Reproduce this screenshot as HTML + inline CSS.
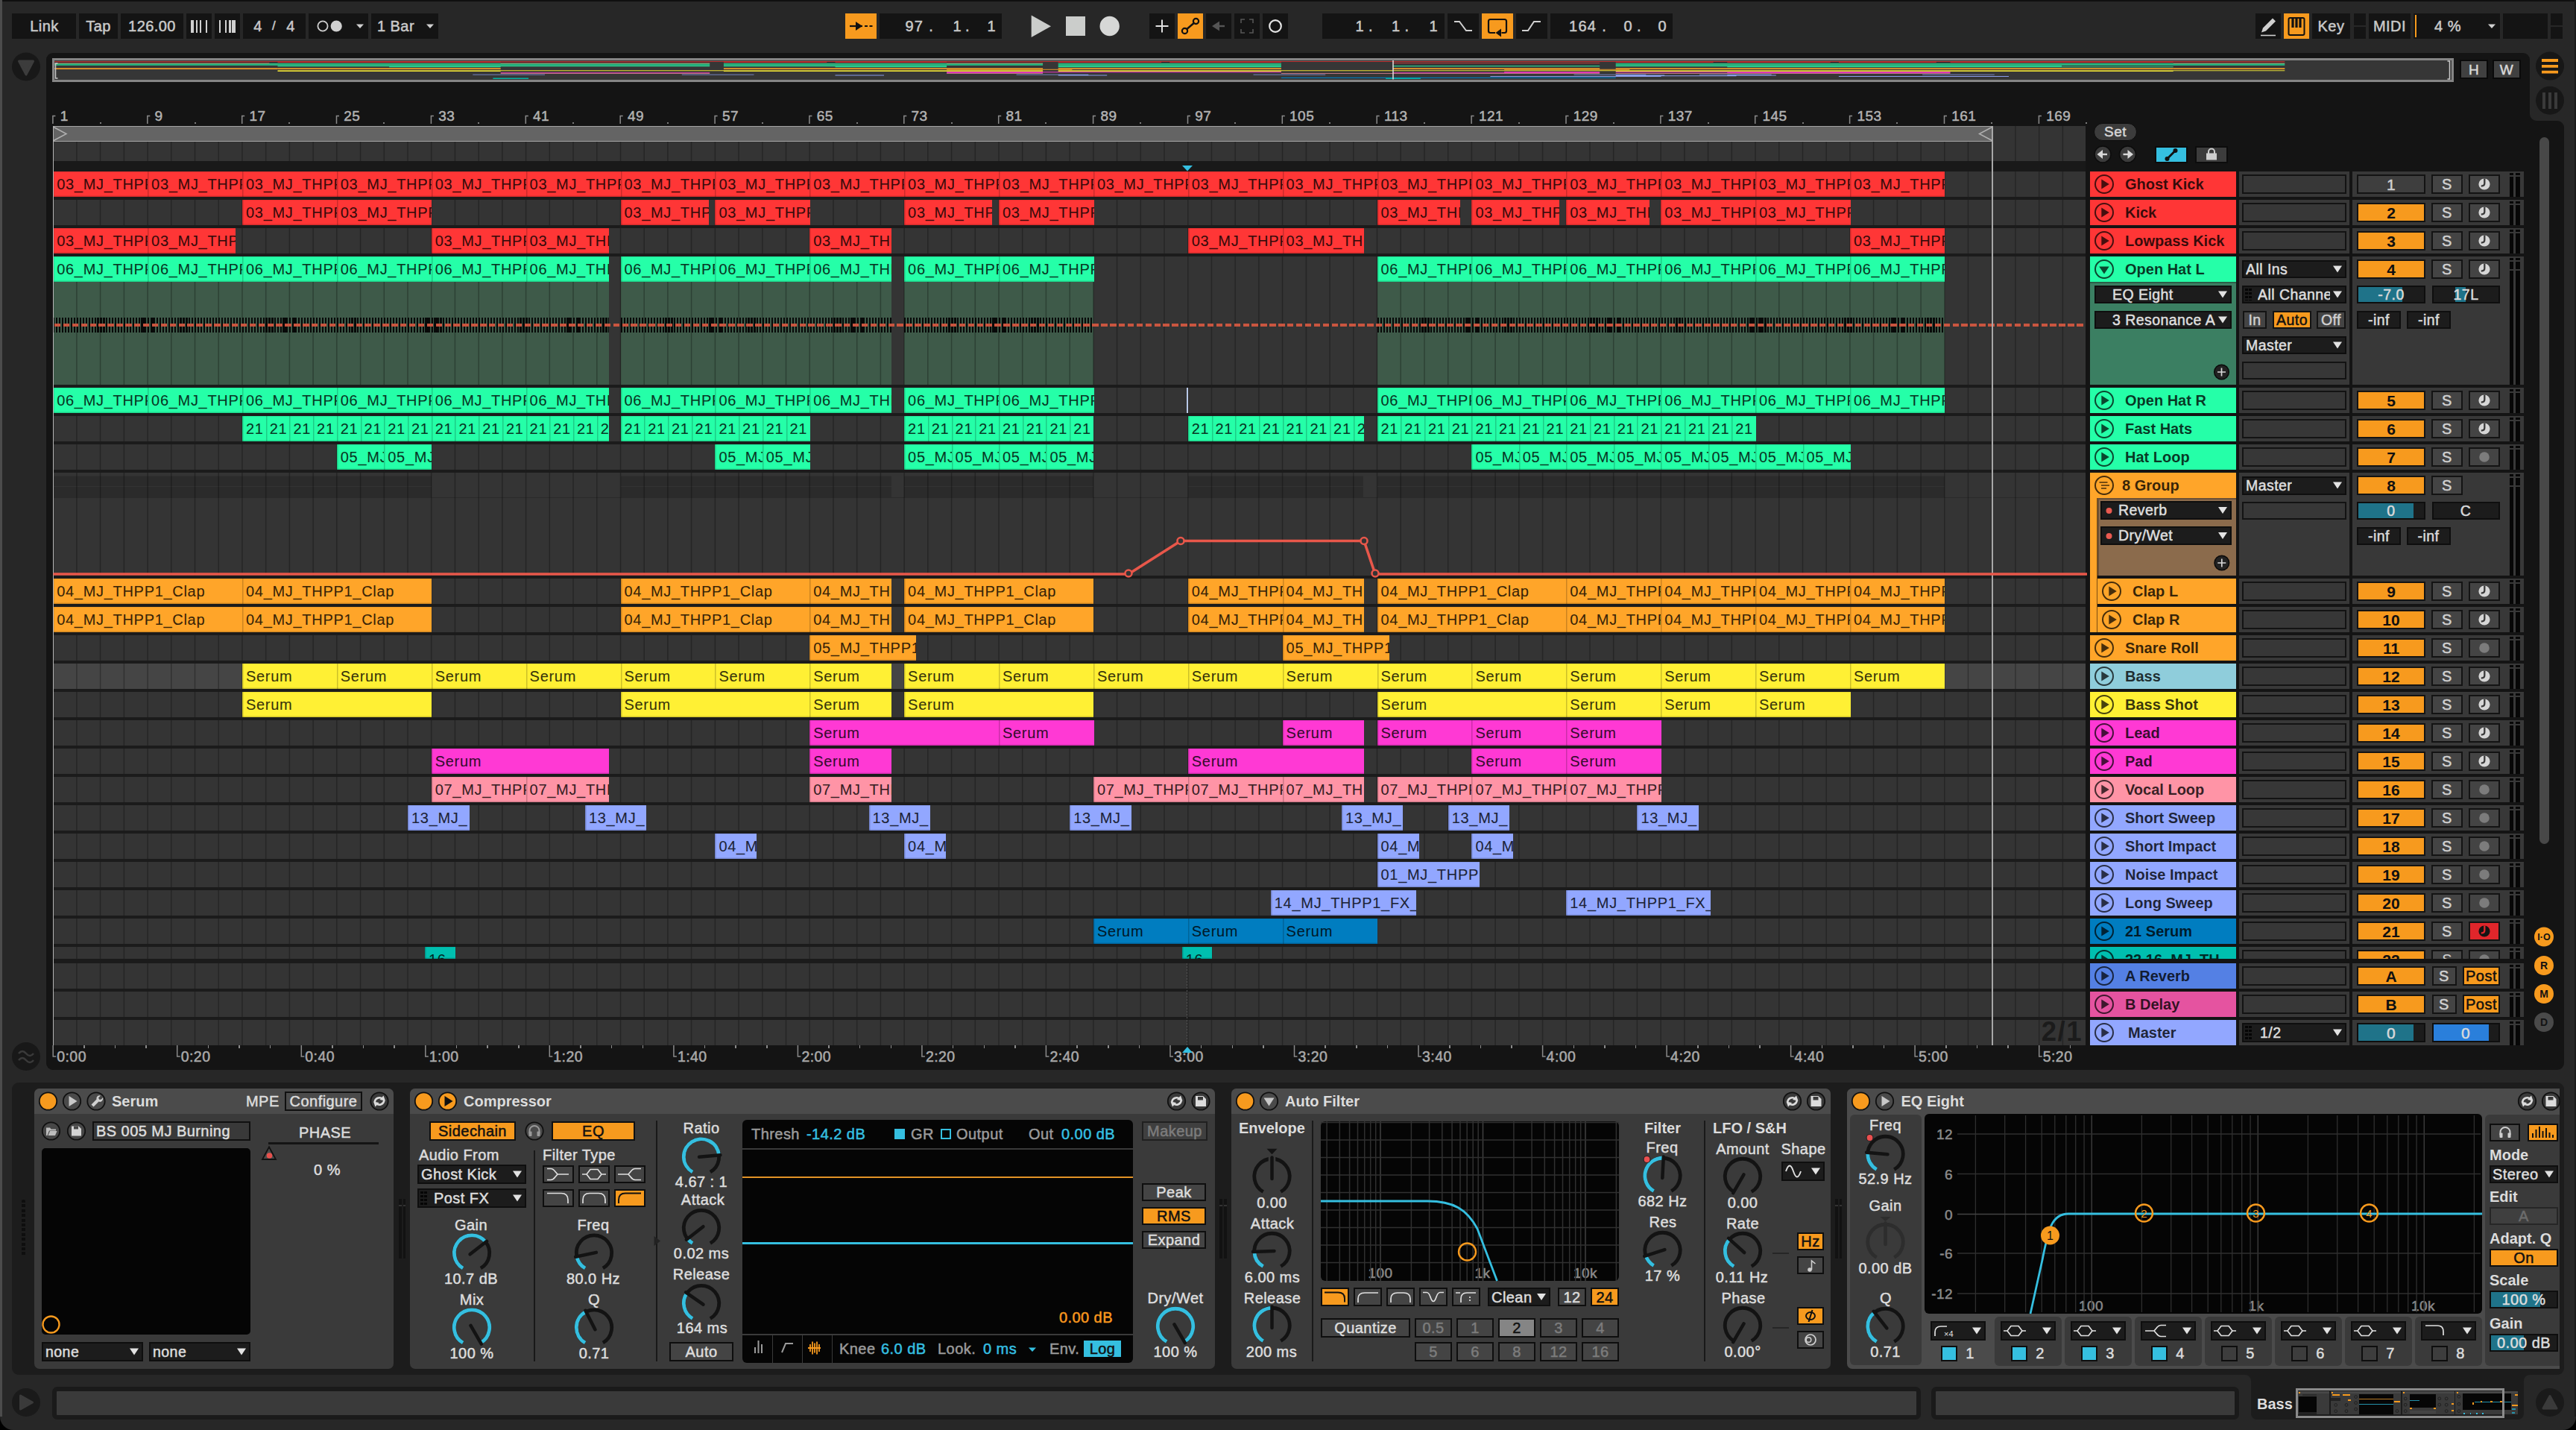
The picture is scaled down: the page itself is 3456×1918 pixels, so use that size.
<!DOCTYPE html><html><head><meta charset="utf-8"><title>Live</title><style>html,body{margin:0;padding:0;background:#000}html{overflow:hidden}body{width:3456px;height:1918px;background:#000;overflow:hidden;position:relative;font-family:"Liberation Sans",sans-serif}
body div{position:absolute}
.t{white-space:nowrap}
#w{left:0;top:0;width:3456px;height:1918px;overflow:hidden;background:#272727;border-radius:0 0 18px 18px;contain:strict}
.c{box-sizing:border-box;box-shadow:inset 1.500px 0 0 rgba(0,0,0,.2),inset 0 -1.500px 0 rgba(0,0,0,.16),inset 0 1px 0 rgba(0,0,0,.06);overflow:hidden;white-space:nowrap;font-size:20px;line-height:34.500px;padding-left:5px;color:rgba(0,0,0,.8);-webkit-text-stroke:.15px;letter-spacing:.7px}
.ov{position:absolute;left:0;top:0;pointer-events:none}
</style></head><body><div id="w"><div style="left:0px;top:0px;width:3456px;height:2px;background:#0f0f0f;"></div>
<div style="left:0px;top:0px;width:2.5px;height:1900px;background:#4c4c4c;"></div>
<div style="left:3454px;top:0px;width:2px;height:1900px;background:#1a1a1a;"></div>
<div style="left:16px;top:18px;width:85.5px;height:34px;background:#141414;"></div>
<div class="t" style="top:22.3px;font-size:20px;line-height:26px;color:#c9c9c9;-webkit-text-stroke:.5px;letter-spacing:.45px;left:-140.5px;width:400px;text-align:center;">Link</div>
<div style="left:106px;top:18px;width:52px;height:34px;background:#141414;"></div>
<div class="t" style="top:22.3px;font-size:20px;line-height:26px;color:#c9c9c9;-webkit-text-stroke:.5px;letter-spacing:.45px;left:-68px;width:400px;text-align:center;">Tap</div>
<div style="left:162px;top:18px;width:83.5px;height:34px;background:#141414;"></div>
<div class="t" style="top:22.3px;font-size:20px;line-height:26px;color:#c9c9c9;-webkit-text-stroke:.5px;letter-spacing:.45px;left:4px;width:400px;text-align:center;">126.00</div>
<div style="left:250px;top:18px;width:34px;height:34px;background:#141414;"></div>
<div style="left:288px;top:18px;width:33.5px;height:34px;background:#141414;"></div>
<div style="left:256.2px;top:26.5px;width:3.8px;height:17.5px;background:#d0d0d0;"></div>
<div style="left:262.5px;top:26.5px;width:2.5px;height:17.5px;background:#d0d0d0;"></div>
<div style="left:267.5px;top:26.5px;width:2.2px;height:17.5px;background:#d0d0d0;"></div>
<div style="left:275.7px;top:26.5px;width:2.3px;height:17.5px;background:#d0d0d0;"></div>
<div style="left:293.7px;top:26.5px;width:2.3px;height:17.5px;background:#d0d0d0;"></div>
<div style="left:302px;top:26.5px;width:2.2px;height:17.5px;background:#d0d0d0;"></div>
<div style="left:307px;top:26.5px;width:2.6px;height:17.5px;background:#d0d0d0;"></div>
<div style="left:311.2px;top:26.5px;width:5px;height:17.5px;background:#d0d0d0;"></div>
<div style="left:326px;top:18px;width:83.5px;height:34px;background:#141414;"></div>
<div class="t" style="top:22.3px;font-size:20px;line-height:26px;color:#c9c9c9;-webkit-text-stroke:.5px;letter-spacing:.45px;left:146px;width:400px;text-align:center;">4</div>
<div class="t" style="top:24.3px;font-size:17px;line-height:22px;color:#c9c9c9;-webkit-text-stroke:.5px;letter-spacing:.45px;left:167.5px;width:400px;text-align:center;">/</div>
<div class="t" style="top:22.3px;font-size:20px;line-height:26px;color:#c9c9c9;-webkit-text-stroke:.5px;letter-spacing:.45px;left:190px;width:400px;text-align:center;">4</div>
<div style="left:414px;top:18px;width:80px;height:34px;background:#141414;"></div>
<div style="left:498px;top:18px;width:90px;height:34px;background:#141414;"></div>
<div class="t" style="top:22.3px;font-size:20px;line-height:26px;color:#c9c9c9;-webkit-text-stroke:.5px;letter-spacing:.45px;left:506px;">1 Bar</div>
<div style="left:1133.5px;top:18px;width:42.5px;height:34px;background:#f79a1e;"></div>
<div style="left:1180px;top:18px;width:163.5px;height:34px;background:#141414;"></div>
<div class="t" style="top:22.3px;font-size:20px;line-height:26px;color:#c9c9c9;-webkit-text-stroke:.5px;letter-spacing:.45px;left:853px;width:400px;text-align:right;letter-spacing:1.300px;">97 .</div>
<div class="t" style="top:22.3px;font-size:20px;line-height:26px;color:#c9c9c9;-webkit-text-stroke:.5px;letter-spacing:.45px;left:901px;width:400px;text-align:right;word-spacing:-1px;">1 .</div>
<div class="t" style="top:22.3px;font-size:20px;line-height:26px;color:#c9c9c9;-webkit-text-stroke:.5px;letter-spacing:.45px;left:936px;width:400px;text-align:right;">1</div>
<div style="left:1542px;top:18px;width:34px;height:34px;background:#141414;"></div>
<div style="left:1580px;top:18px;width:34px;height:34px;background:#f79a1e;"></div>
<div style="left:1618px;top:18px;width:34px;height:34px;background:#141414;"></div>
<div style="left:1656px;top:18px;width:34px;height:34px;background:#141414;"></div>
<div style="left:1694px;top:18px;width:34px;height:34px;background:#141414;"></div>
<div style="left:1774px;top:18px;width:164px;height:34px;background:#141414;"></div>
<div class="t" style="top:22.3px;font-size:20px;line-height:26px;color:#c9c9c9;-webkit-text-stroke:.5px;letter-spacing:.45px;left:1442px;width:400px;text-align:right;">1 .</div>
<div class="t" style="top:22.3px;font-size:20px;line-height:26px;color:#c9c9c9;-webkit-text-stroke:.5px;letter-spacing:.45px;left:1490.5px;width:400px;text-align:right;">1 .</div>
<div class="t" style="top:22.3px;font-size:20px;line-height:26px;color:#c9c9c9;-webkit-text-stroke:.5px;letter-spacing:.45px;left:1529px;width:400px;text-align:right;">1</div>
<div style="left:1942px;top:18px;width:42px;height:34px;background:#141414;"></div>
<div style="left:1988px;top:18px;width:42px;height:34px;background:#f79a1e;"></div>
<div style="left:2034px;top:18px;width:42px;height:34px;background:#141414;"></div>
<div style="left:2080px;top:18px;width:164px;height:34px;background:#141414;"></div>
<div class="t" style="top:22.3px;font-size:20px;line-height:26px;color:#c9c9c9;-webkit-text-stroke:.5px;letter-spacing:.45px;left:1756px;width:400px;text-align:right;letter-spacing:1.300px;">164 .</div>
<div class="t" style="top:22.3px;font-size:20px;line-height:26px;color:#c9c9c9;-webkit-text-stroke:.5px;letter-spacing:.45px;left:1802px;width:400px;text-align:right;">0 .</div>
<div class="t" style="top:22.3px;font-size:20px;line-height:26px;color:#c9c9c9;-webkit-text-stroke:.5px;letter-spacing:.45px;left:1836px;width:400px;text-align:right;">0</div>
<div style="left:3026px;top:18px;width:34px;height:34px;background:#141414;"></div>
<div style="left:3064px;top:18px;width:34px;height:34px;background:#f79a1e;"></div>
<div style="left:3102px;top:18px;width:51px;height:34px;background:#141414;"></div>
<div class="t" style="top:22.3px;font-size:20px;line-height:26px;color:#c9c9c9;-webkit-text-stroke:.5px;letter-spacing:.45px;left:2927.5px;width:400px;text-align:center;">Key</div>
<div style="left:3158px;top:18px;width:16px;height:15.5px;background:#141414;"></div>
<div style="left:3158px;top:35.5px;width:16px;height:16.5px;background:#141414;"></div>
<div style="left:3178px;top:18px;width:56px;height:34px;background:#141414;"></div>
<div class="t" style="top:22.3px;font-size:20px;line-height:26px;color:#c9c9c9;-webkit-text-stroke:.5px;letter-spacing:.45px;left:3006px;width:400px;text-align:center;">MIDI</div>
<div style="left:3238px;top:18px;width:116px;height:34px;background:#141414;"></div>
<div style="left:3240.3px;top:20px;width:2.2px;height:30px;background:#f79a1e;"></div>
<div class="t" style="top:22.3px;font-size:20px;line-height:26px;color:#c9c9c9;-webkit-text-stroke:.5px;letter-spacing:.45px;left:3084px;width:400px;text-align:center;">4 %</div>
<div style="left:3358px;top:18px;width:60px;height:34px;background:#141414;"></div>
<div style="left:3422px;top:18px;width:16px;height:15.5px;background:#141414;"></div>
<div style="left:3422px;top:35.5px;width:16px;height:16.5px;background:#141414;"></div>
<div style="left:62px;top:70.5px;width:3332px;height:1364.5px;background:#141414;border-radius:9px 9px 0 9px;"></div>
<div style="left:3380px;top:162px;width:60px;height:1273px;background:#141414;border-radius:0 9px 9px 0;"></div>
<div style="left:3406.5px;top:184px;width:13.5px;height:948px;background:#484848;border-radius:7px;"></div>
<div style="left:70px;top:78px;width:3222px;height:31.5px;background:#363636;border:3px solid #858585;box-sizing:border-box;"></div>
<div style="left:3300px;top:80px;width:38px;height:26px;background:#404040;border:2px solid #0a0a0a;box-sizing:border-box;"></div>
<div class="t" style="top:80.8px;font-size:19px;line-height:25px;color:#d8d8d8;-webkit-text-stroke:.5px;letter-spacing:.45px;left:3119px;width:400px;text-align:center;">H</div>
<div style="left:3344px;top:80px;width:38px;height:26px;background:#404040;border:2px solid #0a0a0a;box-sizing:border-box;"></div>
<div class="t" style="top:80.8px;font-size:19px;line-height:25px;color:#d8d8d8;-webkit-text-stroke:.5px;letter-spacing:.45px;left:3163px;width:400px;text-align:center;">W</div>
<div class="t" style="top:142.8px;font-size:19px;line-height:25px;color:#b2b2b2;-webkit-text-stroke:.5px;letter-spacing:.45px;left:80.7px;">1</div>
<div style="left:133.6px;top:164px;width:2px;height:2px;background:#7a7a7a;"></div>
<div class="t" style="top:142.8px;font-size:19px;line-height:25px;color:#b2b2b2;-webkit-text-stroke:.5px;letter-spacing:.45px;left:207.6px;">9</div>
<div style="left:260.5px;top:164px;width:2px;height:2px;background:#7a7a7a;"></div>
<div class="t" style="top:142.8px;font-size:19px;line-height:25px;color:#b2b2b2;-webkit-text-stroke:.5px;letter-spacing:.45px;left:334.5px;">17</div>
<div style="left:387.4px;top:164px;width:2px;height:2px;background:#7a7a7a;"></div>
<div class="t" style="top:142.8px;font-size:19px;line-height:25px;color:#b2b2b2;-webkit-text-stroke:.5px;letter-spacing:.45px;left:461.3px;">25</div>
<div style="left:514.3px;top:164px;width:2px;height:2px;background:#7a7a7a;"></div>
<div class="t" style="top:142.8px;font-size:19px;line-height:25px;color:#b2b2b2;-webkit-text-stroke:.5px;letter-spacing:.45px;left:588.2px;">33</div>
<div style="left:641.2px;top:164px;width:2px;height:2px;background:#7a7a7a;"></div>
<div class="t" style="top:142.8px;font-size:19px;line-height:25px;color:#b2b2b2;-webkit-text-stroke:.5px;letter-spacing:.45px;left:715.1px;">41</div>
<div style="left:768px;top:164px;width:2px;height:2px;background:#7a7a7a;"></div>
<div class="t" style="top:142.8px;font-size:19px;line-height:25px;color:#b2b2b2;-webkit-text-stroke:.5px;letter-spacing:.45px;left:842px;">49</div>
<div style="left:894.9px;top:164px;width:2px;height:2px;background:#7a7a7a;"></div>
<div class="t" style="top:142.8px;font-size:19px;line-height:25px;color:#b2b2b2;-webkit-text-stroke:.5px;letter-spacing:.45px;left:968.9px;">57</div>
<div style="left:1021.8px;top:164px;width:2px;height:2px;background:#7a7a7a;"></div>
<div class="t" style="top:142.8px;font-size:19px;line-height:25px;color:#b2b2b2;-webkit-text-stroke:.5px;letter-spacing:.45px;left:1095.7px;">65</div>
<div style="left:1148.7px;top:164px;width:2px;height:2px;background:#7a7a7a;"></div>
<div class="t" style="top:142.8px;font-size:19px;line-height:25px;color:#b2b2b2;-webkit-text-stroke:.5px;letter-spacing:.45px;left:1222.6px;">73</div>
<div style="left:1275.6px;top:164px;width:2px;height:2px;background:#7a7a7a;"></div>
<div class="t" style="top:142.8px;font-size:19px;line-height:25px;color:#b2b2b2;-webkit-text-stroke:.5px;letter-spacing:.45px;left:1349.5px;">81</div>
<div style="left:1402.4px;top:164px;width:2px;height:2px;background:#7a7a7a;"></div>
<div class="t" style="top:142.8px;font-size:19px;line-height:25px;color:#b2b2b2;-webkit-text-stroke:.5px;letter-spacing:.45px;left:1476.4px;">89</div>
<div style="left:1529.3px;top:164px;width:2px;height:2px;background:#7a7a7a;"></div>
<div class="t" style="top:142.8px;font-size:19px;line-height:25px;color:#b2b2b2;-webkit-text-stroke:.5px;letter-spacing:.45px;left:1603.3px;">97</div>
<div style="left:1656.2px;top:164px;width:2px;height:2px;background:#7a7a7a;"></div>
<div class="t" style="top:142.8px;font-size:19px;line-height:25px;color:#b2b2b2;-webkit-text-stroke:.5px;letter-spacing:.45px;left:1730.1px;">105</div>
<div style="left:1783.1px;top:164px;width:2px;height:2px;background:#7a7a7a;"></div>
<div class="t" style="top:142.8px;font-size:19px;line-height:25px;color:#b2b2b2;-webkit-text-stroke:.5px;letter-spacing:.45px;left:1857px;">113</div>
<div style="left:1910px;top:164px;width:2px;height:2px;background:#7a7a7a;"></div>
<div class="t" style="top:142.8px;font-size:19px;line-height:25px;color:#b2b2b2;-webkit-text-stroke:.5px;letter-spacing:.45px;left:1983.9px;">121</div>
<div style="left:2036.8px;top:164px;width:2px;height:2px;background:#7a7a7a;"></div>
<div class="t" style="top:142.8px;font-size:19px;line-height:25px;color:#b2b2b2;-webkit-text-stroke:.5px;letter-spacing:.45px;left:2110.8px;">129</div>
<div style="left:2163.7px;top:164px;width:2px;height:2px;background:#7a7a7a;"></div>
<div class="t" style="top:142.8px;font-size:19px;line-height:25px;color:#b2b2b2;-webkit-text-stroke:.5px;letter-spacing:.45px;left:2237.7px;">137</div>
<div style="left:2290.6px;top:164px;width:2px;height:2px;background:#7a7a7a;"></div>
<div class="t" style="top:142.8px;font-size:19px;line-height:25px;color:#b2b2b2;-webkit-text-stroke:.5px;letter-spacing:.45px;left:2364.5px;">145</div>
<div style="left:2417.5px;top:164px;width:2px;height:2px;background:#7a7a7a;"></div>
<div class="t" style="top:142.8px;font-size:19px;line-height:25px;color:#b2b2b2;-webkit-text-stroke:.5px;letter-spacing:.45px;left:2491.4px;">153</div>
<div style="left:2544.4px;top:164px;width:2px;height:2px;background:#7a7a7a;"></div>
<div class="t" style="top:142.8px;font-size:19px;line-height:25px;color:#b2b2b2;-webkit-text-stroke:.5px;letter-spacing:.45px;left:2618.3px;">161</div>
<div style="left:2671.2px;top:164px;width:2px;height:2px;background:#7a7a7a;"></div>
<div class="t" style="top:142.8px;font-size:19px;line-height:25px;color:#b2b2b2;-webkit-text-stroke:.5px;letter-spacing:.45px;left:2745.2px;">169</div>
<div style="left:2798.1px;top:164px;width:2px;height:2px;background:#7a7a7a;"></div>
<div style="left:71px;top:169px;width:2602px;height:21px;background:#646464;border-top:1.500px solid #a4a4a4;border-bottom:1.500px solid #a4a4a4;box-sizing:border-box;"></div>
<div style="left:2673px;top:168.5px;width:125px;height:22px;background:#343434;"></div>
<div style="left:71.2px;top:190px;width:2726.8px;height:1212px;background:#1b1b1b;"></div>
<div style="left:71.2px;top:190px;width:2726.8px;height:26px;background:#343434;"></div>
<div style="left:71.2px;top:230px;width:2726.8px;height:34px;background:#343434;"></div>
<div style="left:71.2px;top:268px;width:2726.8px;height:34px;background:#343434;"></div>
<div style="left:71.2px;top:306px;width:2726.8px;height:34px;background:#343434;"></div>
<div style="left:71.2px;top:344px;width:2726.8px;height:172px;background:#343434;"></div>
<div style="left:71.2px;top:520px;width:2726.8px;height:34px;background:#343434;"></div>
<div style="left:71.2px;top:558px;width:2726.8px;height:34px;background:#343434;"></div>
<div style="left:71.2px;top:596px;width:2726.8px;height:34px;background:#343434;"></div>
<div style="left:71.2px;top:634px;width:2726.8px;height:138px;background:#343434;"></div>
<div style="left:71.2px;top:776px;width:2726.8px;height:34px;background:#343434;"></div>
<div style="left:71.2px;top:814px;width:2726.8px;height:34px;background:#343434;"></div>
<div style="left:71.2px;top:852px;width:2726.8px;height:34px;background:#343434;"></div>
<div style="left:71.2px;top:890px;width:2726.8px;height:34px;background:#343434;"></div>
<div style="left:71.2px;top:928px;width:2726.8px;height:34px;background:#343434;"></div>
<div style="left:71.2px;top:966px;width:2726.8px;height:34px;background:#343434;"></div>
<div style="left:71.2px;top:1004px;width:2726.8px;height:34px;background:#343434;"></div>
<div style="left:71.2px;top:1042px;width:2726.8px;height:34px;background:#343434;"></div>
<div style="left:71.2px;top:1080px;width:2726.8px;height:34px;background:#343434;"></div>
<div style="left:71.2px;top:1118px;width:2726.8px;height:34px;background:#343434;"></div>
<div style="left:71.2px;top:1156px;width:2726.8px;height:34px;background:#343434;"></div>
<div style="left:71.2px;top:1194px;width:2726.8px;height:34px;background:#343434;"></div>
<div style="left:71.2px;top:1232px;width:2726.8px;height:34px;background:#343434;"></div>
<div style="left:71.2px;top:1270px;width:2726.8px;height:16px;background:#343434;"></div>
<div style="left:71.2px;top:1292px;width:2726.8px;height:34px;background:#343434;"></div>
<div style="left:71.2px;top:1330px;width:2726.8px;height:34px;background:#343434;"></div>
<div style="left:71.2px;top:1368px;width:2726.8px;height:34px;background:#343434;"></div>
<div style="left:71.2px;top:216px;width:2726.8px;height:14px;background:#191919;"></div>
<div style="left:71.2px;top:890px;width:2726.8px;height:34px;background:#454545;"></div>
<div style="left:71.2px;top:666.5px;width:2726.8px;height:1.5px;background:#2a2a2a;"></div>
<div style="left:71.2px;top:638px;width:507.5px;height:28.5px;background:#2b2b2b;border-top:1px solid #303030;"></div>
<div style="left:71.2px;top:652px;width:507.5px;height:1px;background:#333;"></div>
<div style="left:832.5px;top:638px;width:363.2px;height:28.5px;background:#2b2b2b;border-top:1px solid #303030;"></div>
<div style="left:832.5px;top:652px;width:363.2px;height:1px;background:#333;"></div>
<div style="left:1213.1px;top:638px;width:253.8px;height:28.5px;background:#2b2b2b;border-top:1px solid #303030;"></div>
<div style="left:1213.1px;top:652px;width:253.8px;height:1px;background:#333;"></div>
<div style="left:1593.8px;top:638px;width:235.5px;height:28.5px;background:#2b2b2b;border-top:1px solid #303030;"></div>
<div style="left:1593.8px;top:652px;width:235.5px;height:1px;background:#333;"></div>
<div style="left:1847.5px;top:638px;width:761.3px;height:28.5px;background:#2b2b2b;border-top:1px solid #303030;"></div>
<div style="left:1847.5px;top:652px;width:761.3px;height:1px;background:#333;"></div>
<div style="left:71.2px;top:378px;width:745.4px;height:138px;background:#3e5a49;"></div>
<div style="left:71.2px;top:426px;width:745.4px;height:19.5px;background:repeating-linear-gradient(90deg,#080a09 0,#080a09 2.100px,transparent 2.100px,transparent 3.965px),repeating-linear-gradient(90deg,transparent 0,transparent 118px,#080a09 118px,#080a09 124px,transparent 124px,transparent 131px,#080a09 131px,#080a09 135px,transparent 135px,transparent 190.320px);"></div>
<div style="left:832.5px;top:378px;width:363.2px;height:138px;background:#3e5a49;"></div>
<div style="left:832.5px;top:426px;width:363.2px;height:19.5px;background:repeating-linear-gradient(90deg,#080a09 0,#080a09 2.100px,transparent 2.100px,transparent 3.965px),repeating-linear-gradient(90deg,transparent 0,transparent 118px,#080a09 118px,#080a09 124px,transparent 124px,transparent 131px,#080a09 131px,#080a09 135px,transparent 135px,transparent 190.320px);"></div>
<div style="left:1213.1px;top:378px;width:253.8px;height:138px;background:#3e5a49;"></div>
<div style="left:1213.1px;top:426px;width:253.8px;height:19.5px;background:repeating-linear-gradient(90deg,#080a09 0,#080a09 2.100px,transparent 2.100px,transparent 3.965px),repeating-linear-gradient(90deg,transparent 0,transparent 118px,#080a09 118px,#080a09 124px,transparent 124px,transparent 131px,#080a09 131px,#080a09 135px,transparent 135px,transparent 190.320px);"></div>
<div style="left:1847.5px;top:378px;width:761.3px;height:138px;background:#3e5a49;"></div>
<div style="left:1847.5px;top:426px;width:761.3px;height:19.5px;background:repeating-linear-gradient(90deg,#080a09 0,#080a09 2.100px,transparent 2.100px,transparent 3.965px),repeating-linear-gradient(90deg,transparent 0,transparent 118px,#080a09 118px,#080a09 124px,transparent 124px,transparent 131px,#080a09 131px,#080a09 135px,transparent 135px,transparent 190.320px);"></div>
<svg class="ov" width="3456" height="1918"><path d="M102.9 190V1402M134.6 190V1402M166.4 190V1402M198.1 190V1402M229.8 190V1402M261.5 190V1402M293.2 190V1402M325 190V1402M356.7 190V1402M388.4 190V1402M420.1 190V1402M451.8 190V1402M483.6 190V1402M515.3 190V1402M547 190V1402M578.7 190V1402M610.4 190V1402M642.2 190V1402M673.9 190V1402M705.6 190V1402M737.3 190V1402M769 190V1402M800.8 190V1402M832.5 190V1402M864.2 190V1402M895.9 190V1402M927.6 190V1402M959.4 190V1402M991.1 190V1402M1022.8 190V1402M1054.5 190V1402M1086.2 190V1402M1118 190V1402M1149.7 190V1402M1181.4 190V1402M1213.1 190V1402M1244.8 190V1402M1276.6 190V1402M1308.3 190V1402M1340 190V1402M1371.7 190V1402M1403.4 190V1402M1435.2 190V1402M1466.9 190V1402M1498.6 190V1402M1530.3 190V1402M1562 190V1402M1593.8 190V1402M1625.5 190V1402M1657.2 190V1402M1688.9 190V1402M1720.6 190V1402M1752.4 190V1402M1784.1 190V1402M1815.8 190V1402M1847.5 190V1402M1879.2 190V1402M1911 190V1402M1942.7 190V1402M1974.4 190V1402M2006.1 190V1402M2037.8 190V1402M2069.6 190V1402M2101.3 190V1402M2133 190V1402M2164.7 190V1402M2196.4 190V1402M2228.2 190V1402M2259.9 190V1402M2291.6 190V1402M2323.3 190V1402M2355 190V1402M2386.8 190V1402M2418.5 190V1402M2450.2 190V1402M2481.9 190V1402M2513.6 190V1402M2545.4 190V1402M2577.1 190V1402M2608.8 190V1402M2640.5 190V1402M2672.2 190V1402M2704 169V1402M2735.7 169V1402M2767.4 169V1402" stroke="rgba(0,0,0,0.280)" stroke-width="1.500" fill="none"/></svg>
<div style="left:71.2px;top:216px;width:2726.8px;height:14px;background:#191919;"></div>
<div style="left:71.2px;top:264px;width:2726.8px;height:4px;background:#1b1b1b;"></div>
<div style="left:71.2px;top:302px;width:2726.8px;height:4px;background:#1b1b1b;"></div>
<div style="left:71.2px;top:340px;width:2726.8px;height:4px;background:#1b1b1b;"></div>
<div style="left:71.2px;top:516px;width:2726.8px;height:4px;background:#1b1b1b;"></div>
<div style="left:71.2px;top:554px;width:2726.8px;height:4px;background:#1b1b1b;"></div>
<div style="left:71.2px;top:592px;width:2726.8px;height:4px;background:#1b1b1b;"></div>
<div style="left:71.2px;top:630px;width:2726.8px;height:4px;background:#1b1b1b;"></div>
<div style="left:71.2px;top:772px;width:2726.8px;height:4px;background:#1b1b1b;"></div>
<div style="left:71.2px;top:810px;width:2726.8px;height:4px;background:#1b1b1b;"></div>
<div style="left:71.2px;top:848px;width:2726.8px;height:4px;background:#1b1b1b;"></div>
<div style="left:71.2px;top:886px;width:2726.8px;height:4px;background:#1b1b1b;"></div>
<div style="left:71.2px;top:924px;width:2726.8px;height:4px;background:#1b1b1b;"></div>
<div style="left:71.2px;top:962px;width:2726.8px;height:4px;background:#1b1b1b;"></div>
<div style="left:71.2px;top:1000px;width:2726.8px;height:4px;background:#1b1b1b;"></div>
<div style="left:71.2px;top:1038px;width:2726.8px;height:4px;background:#1b1b1b;"></div>
<div style="left:71.2px;top:1076px;width:2726.8px;height:4px;background:#1b1b1b;"></div>
<div style="left:71.2px;top:1114px;width:2726.8px;height:4px;background:#1b1b1b;"></div>
<div style="left:71.2px;top:1152px;width:2726.8px;height:4px;background:#1b1b1b;"></div>
<div style="left:71.2px;top:1190px;width:2726.8px;height:4px;background:#1b1b1b;"></div>
<div style="left:71.2px;top:1228px;width:2726.8px;height:4px;background:#1b1b1b;"></div>
<div style="left:71.2px;top:1266px;width:2726.8px;height:4px;background:#1b1b1b;"></div>
<div style="left:71.2px;top:1286px;width:2726.8px;height:6px;background:#1b1b1b;"></div>
<div style="left:71.2px;top:1326px;width:2726.8px;height:4px;background:#1b1b1b;"></div>
<div style="left:71.2px;top:1364px;width:2726.8px;height:4px;background:#1b1b1b;"></div>
<div style="left:71.2px;top:434px;width:2726.8px;height:3.6px;background:repeating-linear-gradient(90deg,transparent 0,transparent 2px,#c9553f 2px,#c9553f 10.400px,transparent 10.400px,transparent 11.900px);"></div>
<div class="c" style="left:71.2px;top:230px;width:127.5px;height:34px;background:#ff3636">03_MJ_THPP1_Kick</div>
<div class="c" style="left:198.1px;top:230px;width:127.5px;height:34px;background:#ff3636">03_MJ_THPP1_Kick</div>
<div class="c" style="left:325px;top:230px;width:127.5px;height:34px;background:#ff3636">03_MJ_THPP1_Kick</div>
<div class="c" style="left:451.8px;top:230px;width:127.5px;height:34px;background:#ff3636">03_MJ_THPP1_Kick</div>
<div class="c" style="left:578.7px;top:230px;width:127.5px;height:34px;background:#ff3636">03_MJ_THPP1_Kick</div>
<div class="c" style="left:705.6px;top:230px;width:127.5px;height:34px;background:#ff3636">03_MJ_THPP1_Kick</div>
<div class="c" style="left:832.5px;top:230px;width:127.5px;height:34px;background:#ff3636">03_MJ_THPP1_Kick</div>
<div class="c" style="left:959.4px;top:230px;width:127.5px;height:34px;background:#ff3636">03_MJ_THPP1_Kick</div>
<div class="c" style="left:1086.2px;top:230px;width:127.5px;height:34px;background:#ff3636">03_MJ_THPP1_Kick</div>
<div class="c" style="left:1213.1px;top:230px;width:127.5px;height:34px;background:#ff3636">03_MJ_THPP1_Kick</div>
<div class="c" style="left:1340px;top:230px;width:127.5px;height:34px;background:#ff3636">03_MJ_THPP1_Kick</div>
<div class="c" style="left:1466.9px;top:230px;width:127.5px;height:34px;background:#ff3636">03_MJ_THPP1_Kick</div>
<div class="c" style="left:1593.8px;top:230px;width:127.5px;height:34px;background:#ff3636">03_MJ_THPP1_Kick</div>
<div class="c" style="left:1720.6px;top:230px;width:127.5px;height:34px;background:#ff3636">03_MJ_THPP1_Kick</div>
<div class="c" style="left:1847.5px;top:230px;width:127.5px;height:34px;background:#ff3636">03_MJ_THPP1_Kick</div>
<div class="c" style="left:1974.4px;top:230px;width:127.5px;height:34px;background:#ff3636">03_MJ_THPP1_Kick</div>
<div class="c" style="left:2101.3px;top:230px;width:127.5px;height:34px;background:#ff3636">03_MJ_THPP1_Kick</div>
<div class="c" style="left:2228.2px;top:230px;width:127.5px;height:34px;background:#ff3636">03_MJ_THPP1_Kick</div>
<div class="c" style="left:2355px;top:230px;width:127.5px;height:34px;background:#ff3636">03_MJ_THPP1_Kick</div>
<div class="c" style="left:2481.9px;top:230px;width:127.5px;height:34px;background:#ff3636">03_MJ_THPP1_Kick</div>
<div class="c" style="left:325px;top:268px;width:127.5px;height:34px;background:#ff3636">03_MJ_THPP1_Kick</div>
<div class="c" style="left:451.8px;top:268px;width:127.5px;height:34px;background:#ff3636">03_MJ_THPP1_Kick</div>
<div class="c" style="left:832.5px;top:268px;width:118px;height:34px;background:#ff3636">03_MJ_THPP1_Kick</div>
<div class="c" style="left:959.4px;top:268px;width:127.5px;height:34px;background:#ff3636">03_MJ_THPP1_Kick</div>
<div class="c" style="left:1213.1px;top:268px;width:118px;height:34px;background:#ff3636">03_MJ_THPP1_Kick</div>
<div class="c" style="left:1340px;top:268px;width:127.5px;height:34px;background:#ff3636">03_MJ_THPP1_Kick</div>
<div class="c" style="left:1847.5px;top:268px;width:111.6px;height:34px;background:#ff3636">03_MJ_THPP1_Kick</div>
<div class="c" style="left:1974.4px;top:268px;width:118px;height:34px;background:#ff3636">03_MJ_THPP1_Kick</div>
<div class="c" style="left:2101.3px;top:268px;width:111.6px;height:34px;background:#ff3636">03_MJ_THPP1_Kick</div>
<div class="c" style="left:2228.2px;top:268px;width:127.5px;height:34px;background:#ff3636">03_MJ_THPP1_Kick</div>
<div class="c" style="left:2355px;top:268px;width:127.5px;height:34px;background:#ff3636">03_MJ_THPP1_Kick</div>
<div class="c" style="left:71.2px;top:306px;width:127.5px;height:34px;background:#ff3636">03_MJ_THPP1_Kick</div>
<div class="c" style="left:198.1px;top:306px;width:118px;height:34px;background:#ff3636">03_MJ_THPP1_Kick</div>
<div class="c" style="left:578.7px;top:306px;width:127.5px;height:34px;background:#ff3636">03_MJ_THPP1_Kick</div>
<div class="c" style="left:705.6px;top:306px;width:111.6px;height:34px;background:#ff3636">03_MJ_THPP1_Kick</div>
<div class="c" style="left:1086.2px;top:306px;width:110px;height:34px;background:#ff3636">03_MJ_THPP1_Kick</div>
<div class="c" style="left:1593.8px;top:306px;width:127.5px;height:34px;background:#ff3636">03_MJ_THPP1_Kick</div>
<div class="c" style="left:1720.6px;top:306px;width:109.2px;height:34px;background:#ff3636">03_MJ_THPP1_Kick</div>
<div class="c" style="left:2481.9px;top:306px;width:127.5px;height:34px;background:#ff3636">03_MJ_THPP1_Kick</div>
<div class="c" style="left:71.2px;top:344px;width:127.5px;height:34px;background:#25ffa8">06_MJ_THPP1_Hat</div>
<div class="c" style="left:71.2px;top:520px;width:127.5px;height:34px;background:#25ffa8">06_MJ_THPP1_Hat</div>
<div class="c" style="left:198.1px;top:344px;width:127.5px;height:34px;background:#25ffa8">06_MJ_THPP1_Hat</div>
<div class="c" style="left:198.1px;top:520px;width:127.5px;height:34px;background:#25ffa8">06_MJ_THPP1_Hat</div>
<div class="c" style="left:325px;top:344px;width:127.5px;height:34px;background:#25ffa8">06_MJ_THPP1_Hat</div>
<div class="c" style="left:325px;top:520px;width:127.5px;height:34px;background:#25ffa8">06_MJ_THPP1_Hat</div>
<div class="c" style="left:451.8px;top:344px;width:127.5px;height:34px;background:#25ffa8">06_MJ_THPP1_Hat</div>
<div class="c" style="left:451.8px;top:520px;width:127.5px;height:34px;background:#25ffa8">06_MJ_THPP1_Hat</div>
<div class="c" style="left:578.7px;top:344px;width:127.5px;height:34px;background:#25ffa8">06_MJ_THPP1_Hat</div>
<div class="c" style="left:578.7px;top:520px;width:127.5px;height:34px;background:#25ffa8">06_MJ_THPP1_Hat</div>
<div class="c" style="left:705.6px;top:344px;width:111.6px;height:34px;background:#25ffa8">06_MJ_THPP1_Hat</div>
<div class="c" style="left:705.6px;top:520px;width:111.6px;height:34px;background:#25ffa8">06_MJ_THPP1_Hat</div>
<div class="c" style="left:832.5px;top:344px;width:127.5px;height:34px;background:#25ffa8">06_MJ_THPP1_Hat</div>
<div class="c" style="left:832.5px;top:520px;width:127.5px;height:34px;background:#25ffa8">06_MJ_THPP1_Hat</div>
<div class="c" style="left:959.4px;top:344px;width:127.5px;height:34px;background:#25ffa8">06_MJ_THPP1_Hat</div>
<div class="c" style="left:959.4px;top:520px;width:127.5px;height:34px;background:#25ffa8">06_MJ_THPP1_Hat</div>
<div class="c" style="left:1086.2px;top:344px;width:110px;height:34px;background:#25ffa8">06_MJ_THPP1_Hat</div>
<div class="c" style="left:1086.2px;top:520px;width:110px;height:34px;background:#25ffa8">06_MJ_THPP1_Hat</div>
<div class="c" style="left:1213.1px;top:344px;width:127.5px;height:34px;background:#25ffa8">06_MJ_THPP1_Hat</div>
<div class="c" style="left:1213.1px;top:520px;width:127.5px;height:34px;background:#25ffa8">06_MJ_THPP1_Hat</div>
<div class="c" style="left:1340px;top:344px;width:127.5px;height:34px;background:#25ffa8">06_MJ_THPP1_Hat</div>
<div class="c" style="left:1340px;top:520px;width:127.5px;height:34px;background:#25ffa8">06_MJ_THPP1_Hat</div>
<div class="c" style="left:1847.5px;top:344px;width:127.5px;height:34px;background:#25ffa8">06_MJ_THPP1_Hat</div>
<div class="c" style="left:1847.5px;top:520px;width:127.5px;height:34px;background:#25ffa8">06_MJ_THPP1_Hat</div>
<div class="c" style="left:1974.4px;top:344px;width:127.5px;height:34px;background:#25ffa8">06_MJ_THPP1_Hat</div>
<div class="c" style="left:1974.4px;top:520px;width:127.5px;height:34px;background:#25ffa8">06_MJ_THPP1_Hat</div>
<div class="c" style="left:2101.3px;top:344px;width:127.5px;height:34px;background:#25ffa8">06_MJ_THPP1_Hat</div>
<div class="c" style="left:2101.3px;top:520px;width:127.5px;height:34px;background:#25ffa8">06_MJ_THPP1_Hat</div>
<div class="c" style="left:2228.2px;top:344px;width:127.5px;height:34px;background:#25ffa8">06_MJ_THPP1_Hat</div>
<div class="c" style="left:2228.2px;top:520px;width:127.5px;height:34px;background:#25ffa8">06_MJ_THPP1_Hat</div>
<div class="c" style="left:2355px;top:344px;width:127.5px;height:34px;background:#25ffa8">06_MJ_THPP1_Hat</div>
<div class="c" style="left:2355px;top:520px;width:127.5px;height:34px;background:#25ffa8">06_MJ_THPP1_Hat</div>
<div class="c" style="left:2481.9px;top:344px;width:127.5px;height:34px;background:#25ffa8">06_MJ_THPP1_Hat</div>
<div class="c" style="left:2481.9px;top:520px;width:127.5px;height:34px;background:#25ffa8">06_MJ_THPP1_Hat</div>
<div class="c" style="left:325px;top:558px;width:32.3px;height:34px;background:#25ffa8">21</div>
<div class="c" style="left:356.7px;top:558px;width:32.3px;height:34px;background:#25ffa8">21</div>
<div class="c" style="left:388.4px;top:558px;width:32.3px;height:34px;background:#25ffa8">21</div>
<div class="c" style="left:420.1px;top:558px;width:32.3px;height:34px;background:#25ffa8">21</div>
<div class="c" style="left:451.8px;top:558px;width:32.3px;height:34px;background:#25ffa8">21</div>
<div class="c" style="left:483.6px;top:558px;width:32.3px;height:34px;background:#25ffa8">21</div>
<div class="c" style="left:515.3px;top:558px;width:32.3px;height:34px;background:#25ffa8">21</div>
<div class="c" style="left:547px;top:558px;width:32.3px;height:34px;background:#25ffa8">21</div>
<div class="c" style="left:578.7px;top:558px;width:32.3px;height:34px;background:#25ffa8">21</div>
<div class="c" style="left:610.4px;top:558px;width:32.3px;height:34px;background:#25ffa8">21</div>
<div class="c" style="left:642.2px;top:558px;width:32.3px;height:34px;background:#25ffa8">21</div>
<div class="c" style="left:673.9px;top:558px;width:32.3px;height:34px;background:#25ffa8">21</div>
<div class="c" style="left:705.6px;top:558px;width:32.3px;height:34px;background:#25ffa8">21</div>
<div class="c" style="left:737.3px;top:558px;width:32.3px;height:34px;background:#25ffa8">21</div>
<div class="c" style="left:769px;top:558px;width:32.3px;height:34px;background:#25ffa8">21</div>
<div class="c" style="left:800.8px;top:558px;width:16.5px;height:34px;background:#25ffa8">21</div>
<div class="c" style="left:832.5px;top:558px;width:32.3px;height:34px;background:#25ffa8">21</div>
<div class="c" style="left:864.2px;top:558px;width:32.3px;height:34px;background:#25ffa8">21</div>
<div class="c" style="left:895.9px;top:558px;width:32.3px;height:34px;background:#25ffa8">21</div>
<div class="c" style="left:927.6px;top:558px;width:32.3px;height:34px;background:#25ffa8">21</div>
<div class="c" style="left:959.4px;top:558px;width:32.3px;height:34px;background:#25ffa8">21</div>
<div class="c" style="left:991.1px;top:558px;width:32.3px;height:34px;background:#25ffa8">21</div>
<div class="c" style="left:1022.8px;top:558px;width:32.3px;height:34px;background:#25ffa8">21</div>
<div class="c" style="left:1054.5px;top:558px;width:32.3px;height:34px;background:#25ffa8">21</div>
<div class="c" style="left:1213.1px;top:558px;width:32.3px;height:34px;background:#25ffa8">21</div>
<div class="c" style="left:1244.8px;top:558px;width:32.3px;height:34px;background:#25ffa8">21</div>
<div class="c" style="left:1276.6px;top:558px;width:32.3px;height:34px;background:#25ffa8">21</div>
<div class="c" style="left:1308.3px;top:558px;width:32.3px;height:34px;background:#25ffa8">21</div>
<div class="c" style="left:1340px;top:558px;width:32.3px;height:34px;background:#25ffa8">21</div>
<div class="c" style="left:1371.7px;top:558px;width:32.3px;height:34px;background:#25ffa8">21</div>
<div class="c" style="left:1403.4px;top:558px;width:32.3px;height:34px;background:#25ffa8">21</div>
<div class="c" style="left:1435.2px;top:558px;width:32.3px;height:34px;background:#25ffa8">21</div>
<div class="c" style="left:1593.8px;top:558px;width:32.3px;height:34px;background:#25ffa8">21</div>
<div class="c" style="left:1625.5px;top:558px;width:32.3px;height:34px;background:#25ffa8">21</div>
<div class="c" style="left:1657.2px;top:558px;width:32.3px;height:34px;background:#25ffa8">21</div>
<div class="c" style="left:1688.9px;top:558px;width:32.3px;height:34px;background:#25ffa8">21</div>
<div class="c" style="left:1720.6px;top:558px;width:32.3px;height:34px;background:#25ffa8">21</div>
<div class="c" style="left:1752.4px;top:558px;width:32.3px;height:34px;background:#25ffa8">21</div>
<div class="c" style="left:1784.1px;top:558px;width:32.3px;height:34px;background:#25ffa8">21</div>
<div class="c" style="left:1815.8px;top:558px;width:14.1px;height:34px;background:#25ffa8">21</div>
<div class="c" style="left:1847.5px;top:558px;width:32.3px;height:34px;background:#25ffa8">21</div>
<div class="c" style="left:1879.2px;top:558px;width:32.3px;height:34px;background:#25ffa8">21</div>
<div class="c" style="left:1911px;top:558px;width:32.3px;height:34px;background:#25ffa8">21</div>
<div class="c" style="left:1942.7px;top:558px;width:32.3px;height:34px;background:#25ffa8">21</div>
<div class="c" style="left:1974.4px;top:558px;width:32.3px;height:34px;background:#25ffa8">21</div>
<div class="c" style="left:2006.1px;top:558px;width:32.3px;height:34px;background:#25ffa8">21</div>
<div class="c" style="left:2037.8px;top:558px;width:32.3px;height:34px;background:#25ffa8">21</div>
<div class="c" style="left:2069.6px;top:558px;width:32.3px;height:34px;background:#25ffa8">21</div>
<div class="c" style="left:2101.3px;top:558px;width:32.3px;height:34px;background:#25ffa8">21</div>
<div class="c" style="left:2133px;top:558px;width:32.3px;height:34px;background:#25ffa8">21</div>
<div class="c" style="left:2164.7px;top:558px;width:32.3px;height:34px;background:#25ffa8">21</div>
<div class="c" style="left:2196.4px;top:558px;width:32.3px;height:34px;background:#25ffa8">21</div>
<div class="c" style="left:2228.2px;top:558px;width:32.3px;height:34px;background:#25ffa8">21</div>
<div class="c" style="left:2259.9px;top:558px;width:32.3px;height:34px;background:#25ffa8">21</div>
<div class="c" style="left:2291.6px;top:558px;width:32.3px;height:34px;background:#25ffa8">21</div>
<div class="c" style="left:2323.3px;top:558px;width:32.3px;height:34px;background:#25ffa8">21</div>
<div class="c" style="left:451.8px;top:596px;width:64px;height:34px;background:#25ffa8">05_MJ_THPP1</div>
<div class="c" style="left:515.3px;top:596px;width:64px;height:34px;background:#25ffa8">05_MJ_THPP1</div>
<div class="c" style="left:959.4px;top:596px;width:64px;height:34px;background:#25ffa8">05_MJ_THPP1</div>
<div class="c" style="left:1022.8px;top:596px;width:64px;height:34px;background:#25ffa8">05_MJ_THPP1</div>
<div class="c" style="left:1213.1px;top:596px;width:64px;height:34px;background:#25ffa8">05_MJ_THPP1</div>
<div class="c" style="left:1276.6px;top:596px;width:64px;height:34px;background:#25ffa8">05_MJ_THPP1</div>
<div class="c" style="left:1340px;top:596px;width:64px;height:34px;background:#25ffa8">05_MJ_THPP1</div>
<div class="c" style="left:1403.4px;top:596px;width:64px;height:34px;background:#25ffa8">05_MJ_THPP1</div>
<div class="c" style="left:1974.4px;top:596px;width:64px;height:34px;background:#25ffa8">05_MJ_THPP1</div>
<div class="c" style="left:2037.8px;top:596px;width:64px;height:34px;background:#25ffa8">05_MJ_THPP1</div>
<div class="c" style="left:2101.3px;top:596px;width:64px;height:34px;background:#25ffa8">05_MJ_THPP1</div>
<div class="c" style="left:2164.7px;top:596px;width:64px;height:34px;background:#25ffa8">05_MJ_THPP1</div>
<div class="c" style="left:2228.2px;top:596px;width:64px;height:34px;background:#25ffa8">05_MJ_THPP1</div>
<div class="c" style="left:2291.6px;top:596px;width:64px;height:34px;background:#25ffa8">05_MJ_THPP1</div>
<div class="c" style="left:2355px;top:596px;width:64px;height:34px;background:#25ffa8">05_MJ_THPP1</div>
<div class="c" style="left:2418.5px;top:596px;width:64px;height:34px;background:#25ffa8">05_MJ_THPP1</div>
<div class="c" style="left:71.2px;top:776px;width:254.4px;height:34px;background:#ffa529">04_MJ_THPP1_Clap</div>
<div class="c" style="left:71.2px;top:814px;width:254.4px;height:34px;background:#ffa529">04_MJ_THPP1_Clap</div>
<div class="c" style="left:325px;top:776px;width:254.4px;height:34px;background:#ffa529">04_MJ_THPP1_Clap</div>
<div class="c" style="left:325px;top:814px;width:254.4px;height:34px;background:#ffa529">04_MJ_THPP1_Clap</div>
<div class="c" style="left:832.5px;top:776px;width:254.4px;height:34px;background:#ffa529">04_MJ_THPP1_Clap</div>
<div class="c" style="left:832.5px;top:814px;width:254.4px;height:34px;background:#ffa529">04_MJ_THPP1_Clap</div>
<div class="c" style="left:1086.2px;top:776px;width:110px;height:34px;background:#ffa529">04_MJ_THPP1_Clap</div>
<div class="c" style="left:1086.2px;top:814px;width:110px;height:34px;background:#ffa529">04_MJ_THPP1_Clap</div>
<div class="c" style="left:1213.1px;top:776px;width:254.4px;height:34px;background:#ffa529">04_MJ_THPP1_Clap</div>
<div class="c" style="left:1213.1px;top:814px;width:254.4px;height:34px;background:#ffa529">04_MJ_THPP1_Clap</div>
<div class="c" style="left:1593.8px;top:776px;width:127.5px;height:34px;background:#ffa529">04_MJ_THPP1_Clap</div>
<div class="c" style="left:1593.8px;top:814px;width:127.5px;height:34px;background:#ffa529">04_MJ_THPP1_Clap</div>
<div class="c" style="left:1720.6px;top:776px;width:109.2px;height:34px;background:#ffa529">04_MJ_THPP1_Clap</div>
<div class="c" style="left:1720.6px;top:814px;width:109.2px;height:34px;background:#ffa529">04_MJ_THPP1_Clap</div>
<div class="c" style="left:1847.5px;top:776px;width:254.4px;height:34px;background:#ffa529">04_MJ_THPP1_Clap</div>
<div class="c" style="left:1847.5px;top:814px;width:254.4px;height:34px;background:#ffa529">04_MJ_THPP1_Clap</div>
<div class="c" style="left:2101.3px;top:776px;width:127.5px;height:34px;background:#ffa529">04_MJ_THPP1_Clap</div>
<div class="c" style="left:2101.3px;top:814px;width:127.5px;height:34px;background:#ffa529">04_MJ_THPP1_Clap</div>
<div class="c" style="left:2228.2px;top:776px;width:127.5px;height:34px;background:#ffa529">04_MJ_THPP1_Clap</div>
<div class="c" style="left:2228.2px;top:814px;width:127.5px;height:34px;background:#ffa529">04_MJ_THPP1_Clap</div>
<div class="c" style="left:2355px;top:776px;width:127.5px;height:34px;background:#ffa529">04_MJ_THPP1_Clap</div>
<div class="c" style="left:2355px;top:814px;width:127.5px;height:34px;background:#ffa529">04_MJ_THPP1_Clap</div>
<div class="c" style="left:2481.9px;top:776px;width:127.5px;height:34px;background:#ffa529">04_MJ_THPP1_Clap</div>
<div class="c" style="left:2481.9px;top:814px;width:127.5px;height:34px;background:#ffa529">04_MJ_THPP1_Clap</div>
<div class="c" style="left:1086.2px;top:852px;width:143.3px;height:34px;background:#ffa529">05_MJ_THPP1_</div>
<div class="c" style="left:1720.6px;top:852px;width:143.3px;height:34px;background:#ffa529">05_MJ_THPP1_</div>
<div class="c" style="left:325px;top:890px;width:127.5px;height:34px;background:#fff034">Serum</div>
<div class="c" style="left:451.8px;top:890px;width:127.5px;height:34px;background:#fff034">Serum</div>
<div class="c" style="left:578.7px;top:890px;width:127.5px;height:34px;background:#fff034">Serum</div>
<div class="c" style="left:705.6px;top:890px;width:127.5px;height:34px;background:#fff034">Serum</div>
<div class="c" style="left:832.5px;top:890px;width:127.5px;height:34px;background:#fff034">Serum</div>
<div class="c" style="left:959.4px;top:890px;width:127.5px;height:34px;background:#fff034">Serum</div>
<div class="c" style="left:1086.2px;top:890px;width:110px;height:34px;background:#fff034">Serum</div>
<div class="c" style="left:1213.1px;top:890px;width:127.5px;height:34px;background:#fff034">Serum</div>
<div class="c" style="left:1340px;top:890px;width:127.5px;height:34px;background:#fff034">Serum</div>
<div class="c" style="left:1466.9px;top:890px;width:127.5px;height:34px;background:#fff034">Serum</div>
<div class="c" style="left:1593.8px;top:890px;width:127.5px;height:34px;background:#fff034">Serum</div>
<div class="c" style="left:1720.6px;top:890px;width:127.5px;height:34px;background:#fff034">Serum</div>
<div class="c" style="left:1847.5px;top:890px;width:127.5px;height:34px;background:#fff034">Serum</div>
<div class="c" style="left:1974.4px;top:890px;width:127.5px;height:34px;background:#fff034">Serum</div>
<div class="c" style="left:2101.3px;top:890px;width:127.5px;height:34px;background:#fff034">Serum</div>
<div class="c" style="left:2228.2px;top:890px;width:127.5px;height:34px;background:#fff034">Serum</div>
<div class="c" style="left:2355px;top:890px;width:127.5px;height:34px;background:#fff034">Serum</div>
<div class="c" style="left:2481.9px;top:890px;width:127.5px;height:34px;background:#fff034">Serum</div>
<div class="c" style="left:325px;top:928px;width:254.4px;height:34px;background:#fff034">Serum</div>
<div class="c" style="left:832.5px;top:928px;width:254.4px;height:34px;background:#fff034">Serum</div>
<div class="c" style="left:1086.2px;top:928px;width:110px;height:34px;background:#fff034">Serum</div>
<div class="c" style="left:1213.1px;top:928px;width:254.4px;height:34px;background:#fff034">Serum</div>
<div class="c" style="left:1847.5px;top:928px;width:254.4px;height:34px;background:#fff034">Serum</div>
<div class="c" style="left:2101.3px;top:928px;width:127.5px;height:34px;background:#fff034">Serum</div>
<div class="c" style="left:2228.2px;top:928px;width:127.5px;height:34px;background:#fff034">Serum</div>
<div class="c" style="left:2355px;top:928px;width:127.5px;height:34px;background:#fff034">Serum</div>
<div class="c" style="left:1086.2px;top:966px;width:254.4px;height:34px;background:#ff39d4">Serum</div>
<div class="c" style="left:1340px;top:966px;width:127.5px;height:34px;background:#ff39d4">Serum</div>
<div class="c" style="left:1720.6px;top:966px;width:109.2px;height:34px;background:#ff39d4">Serum</div>
<div class="c" style="left:1847.5px;top:966px;width:127.5px;height:34px;background:#ff39d4">Serum</div>
<div class="c" style="left:1974.4px;top:966px;width:127.5px;height:34px;background:#ff39d4">Serum</div>
<div class="c" style="left:2101.3px;top:966px;width:127.5px;height:34px;background:#ff39d4">Serum</div>
<div class="c" style="left:578.7px;top:1004px;width:238.5px;height:34px;background:#ff39d4">Serum</div>
<div class="c" style="left:1086.2px;top:1004px;width:110px;height:34px;background:#ff39d4">Serum</div>
<div class="c" style="left:1593.8px;top:1004px;width:236.1px;height:34px;background:#ff39d4">Serum</div>
<div class="c" style="left:1974.4px;top:1004px;width:127.5px;height:34px;background:#ff39d4">Serum</div>
<div class="c" style="left:2101.3px;top:1004px;width:127.5px;height:34px;background:#ff39d4">Serum</div>
<div class="c" style="left:578.7px;top:1042px;width:127.5px;height:34px;background:#ff94a6">07_MJ_THPP1_Vox</div>
<div class="c" style="left:705.6px;top:1042px;width:111.6px;height:34px;background:#ff94a6">07_MJ_THPP1_Vox</div>
<div class="c" style="left:1086.2px;top:1042px;width:110px;height:34px;background:#ff94a6">07_MJ_THPP1_Vox</div>
<div class="c" style="left:1466.9px;top:1042px;width:127.5px;height:34px;background:#ff94a6">07_MJ_THPP1_Vox</div>
<div class="c" style="left:1593.8px;top:1042px;width:127.5px;height:34px;background:#ff94a6">07_MJ_THPP1_Vox</div>
<div class="c" style="left:1720.6px;top:1042px;width:109.2px;height:34px;background:#ff94a6">07_MJ_THPP1_Vox</div>
<div class="c" style="left:1847.5px;top:1042px;width:127.5px;height:34px;background:#ff94a6">07_MJ_THPP1_Vox</div>
<div class="c" style="left:1974.4px;top:1042px;width:127.5px;height:34px;background:#ff94a6">07_MJ_THPP1_Vox</div>
<div class="c" style="left:2101.3px;top:1042px;width:127.5px;height:34px;background:#ff94a6">07_MJ_THPP1_Vox</div>
<div class="c" style="left:547px;top:1080px;width:82.6px;height:34px;background:#92a7ff">13_MJ_</div>
<div class="c" style="left:784.9px;top:1080px;width:82.6px;height:34px;background:#92a7ff">13_MJ_</div>
<div class="c" style="left:1165.5px;top:1080px;width:82.6px;height:34px;background:#92a7ff">13_MJ_</div>
<div class="c" style="left:1435.2px;top:1080px;width:82.6px;height:34px;background:#92a7ff">13_MJ_</div>
<div class="c" style="left:1799.9px;top:1080px;width:82.6px;height:34px;background:#92a7ff">13_MJ_</div>
<div class="c" style="left:1942.7px;top:1080px;width:82.6px;height:34px;background:#92a7ff">13_MJ_</div>
<div class="c" style="left:2196.4px;top:1080px;width:82.6px;height:34px;background:#92a7ff">13_MJ_</div>
<div class="c" style="left:959.4px;top:1118px;width:56.1px;height:34px;background:#92a7ff">04_MJ</div>
<div class="c" style="left:1213.1px;top:1118px;width:56.1px;height:34px;background:#92a7ff">04_MJ</div>
<div class="c" style="left:1847.5px;top:1118px;width:56.1px;height:34px;background:#92a7ff">04_MJ</div>
<div class="c" style="left:1974.4px;top:1118px;width:56.1px;height:34px;background:#92a7ff">04_MJ</div>
<div class="c" style="left:1847.5px;top:1156px;width:137.8px;height:34px;background:#92a7ff">01_MJ_THPP1</div>
<div class="c" style="left:1704.8px;top:1194px;width:194.9px;height:34px;background:#92a7ff">14_MJ_THPP1_FX_</div>
<div class="c" style="left:2101.3px;top:1194px;width:194.1px;height:34px;background:#92a7ff">14_MJ_THPP1_FX_</div>
<div class="c" style="left:1466.9px;top:1232px;width:127.5px;height:34px;background:#007dc0">Serum</div>
<div class="c" style="left:1593.8px;top:1232px;width:127.5px;height:34px;background:#007dc0">Serum</div>
<div class="c" style="left:1720.6px;top:1232px;width:127.5px;height:34px;background:#007dc0">Serum</div>
<div class="c" style="left:570px;top:1270px;width:41px;height:16px;background:#00bfaf">16</div>
<div class="c" style="left:1585.8px;top:1270px;width:40.3px;height:16px;background:#00bfaf">16</div>
<div style="left:70.5px;top:169px;width:1.5px;height:1233px;background:#b4b4b4;"></div>
<div style="left:2672.2px;top:169px;width:1.5px;height:1233px;background:#a8a8a8;"></div>
<div style="left:1592.3px;top:520px;width:1.8px;height:34px;background:#b9c9e8;"></div>
<div style="left:1592.3px;top:1292px;width:1.2px;height:110px;background:repeating-linear-gradient(180deg,#555 0,#555 2px,transparent 2px,transparent 4px);"></div>
<div class="t" style="top:1359.8px;font-size:36.5px;line-height:47px;color:#1b1b1b;font-weight:700;left:2394px;width:400px;text-align:right;letter-spacing:1.500px;">2/1</div>
<div style="left:62.5px;top:1402px;width:2745px;height:33px;background:#141414;border-radius:0 0 0 9px;"></div>
<div class="t" style="top:1405px;font-size:19.5px;line-height:25px;color:#a9a9a9;-webkit-text-stroke:.5px;letter-spacing:.45px;left:76.2px;">0:00</div>
<div style="left:112.1px;top:1402px;width:1.5px;height:3.5px;background:#8a8a8a;"></div>
<div style="left:153.8px;top:1402px;width:1.5px;height:3.5px;background:#8a8a8a;"></div>
<div style="left:195.4px;top:1402px;width:1.5px;height:3.5px;background:#8a8a8a;"></div>
<div class="t" style="top:1405px;font-size:19.5px;line-height:25px;color:#a9a9a9;-webkit-text-stroke:.5px;letter-spacing:.45px;left:242.7px;">0:20</div>
<div style="left:278.7px;top:1402px;width:1.5px;height:3.5px;background:#8a8a8a;"></div>
<div style="left:320.3px;top:1402px;width:1.5px;height:3.5px;background:#8a8a8a;"></div>
<div style="left:361.9px;top:1402px;width:1.5px;height:3.5px;background:#8a8a8a;"></div>
<div class="t" style="top:1405px;font-size:19.5px;line-height:25px;color:#a9a9a9;-webkit-text-stroke:.5px;letter-spacing:.45px;left:409.3px;">0:40</div>
<div style="left:445.2px;top:1402px;width:1.5px;height:3.5px;background:#8a8a8a;"></div>
<div style="left:486.8px;top:1402px;width:1.5px;height:3.5px;background:#8a8a8a;"></div>
<div style="left:528.4px;top:1402px;width:1.5px;height:3.5px;background:#8a8a8a;"></div>
<div class="t" style="top:1405px;font-size:19.5px;line-height:25px;color:#a9a9a9;-webkit-text-stroke:.5px;letter-spacing:.45px;left:575.8px;">1:00</div>
<div style="left:611.7px;top:1402px;width:1.5px;height:3.5px;background:#8a8a8a;"></div>
<div style="left:653.4px;top:1402px;width:1.5px;height:3.5px;background:#8a8a8a;"></div>
<div style="left:695px;top:1402px;width:1.5px;height:3.5px;background:#8a8a8a;"></div>
<div class="t" style="top:1405px;font-size:19.5px;line-height:25px;color:#a9a9a9;-webkit-text-stroke:.5px;letter-spacing:.45px;left:742.3px;">1:20</div>
<div style="left:778.2px;top:1402px;width:1.5px;height:3.5px;background:#8a8a8a;"></div>
<div style="left:819.9px;top:1402px;width:1.5px;height:3.5px;background:#8a8a8a;"></div>
<div style="left:861.5px;top:1402px;width:1.5px;height:3.5px;background:#8a8a8a;"></div>
<div class="t" style="top:1405px;font-size:19.5px;line-height:25px;color:#a9a9a9;-webkit-text-stroke:.5px;letter-spacing:.45px;left:908.9px;">1:40</div>
<div style="left:944.8px;top:1402px;width:1.5px;height:3.5px;background:#8a8a8a;"></div>
<div style="left:986.4px;top:1402px;width:1.5px;height:3.5px;background:#8a8a8a;"></div>
<div style="left:1028px;top:1402px;width:1.5px;height:3.5px;background:#8a8a8a;"></div>
<div class="t" style="top:1405px;font-size:19.5px;line-height:25px;color:#a9a9a9;-webkit-text-stroke:.5px;letter-spacing:.45px;left:1075.4px;">2:00</div>
<div style="left:1111.3px;top:1402px;width:1.5px;height:3.5px;background:#8a8a8a;"></div>
<div style="left:1152.9px;top:1402px;width:1.5px;height:3.5px;background:#8a8a8a;"></div>
<div style="left:1194.6px;top:1402px;width:1.5px;height:3.5px;background:#8a8a8a;"></div>
<div class="t" style="top:1405px;font-size:19.5px;line-height:25px;color:#a9a9a9;-webkit-text-stroke:.5px;letter-spacing:.45px;left:1241.9px;">2:20</div>
<div style="left:1277.8px;top:1402px;width:1.5px;height:3.5px;background:#8a8a8a;"></div>
<div style="left:1319.5px;top:1402px;width:1.5px;height:3.5px;background:#8a8a8a;"></div>
<div style="left:1361.1px;top:1402px;width:1.5px;height:3.5px;background:#8a8a8a;"></div>
<div class="t" style="top:1405px;font-size:19.5px;line-height:25px;color:#a9a9a9;-webkit-text-stroke:.5px;letter-spacing:.45px;left:1408.4px;">2:40</div>
<div style="left:1444.4px;top:1402px;width:1.5px;height:3.5px;background:#8a8a8a;"></div>
<div style="left:1486px;top:1402px;width:1.5px;height:3.5px;background:#8a8a8a;"></div>
<div style="left:1527.6px;top:1402px;width:1.5px;height:3.5px;background:#8a8a8a;"></div>
<div class="t" style="top:1405px;font-size:19.5px;line-height:25px;color:#a9a9a9;-webkit-text-stroke:.5px;letter-spacing:.45px;left:1575px;">3:00</div>
<div style="left:1610.9px;top:1402px;width:1.5px;height:3.5px;background:#8a8a8a;"></div>
<div style="left:1652.5px;top:1402px;width:1.5px;height:3.5px;background:#8a8a8a;"></div>
<div style="left:1694.2px;top:1402px;width:1.5px;height:3.5px;background:#8a8a8a;"></div>
<div class="t" style="top:1405px;font-size:19.5px;line-height:25px;color:#a9a9a9;-webkit-text-stroke:.5px;letter-spacing:.45px;left:1741.5px;">3:20</div>
<div style="left:1777.4px;top:1402px;width:1.5px;height:3.5px;background:#8a8a8a;"></div>
<div style="left:1819.1px;top:1402px;width:1.5px;height:3.5px;background:#8a8a8a;"></div>
<div style="left:1860.7px;top:1402px;width:1.5px;height:3.5px;background:#8a8a8a;"></div>
<div class="t" style="top:1405px;font-size:19.5px;line-height:25px;color:#a9a9a9;-webkit-text-stroke:.5px;letter-spacing:.45px;left:1908px;">3:40</div>
<div style="left:1944px;top:1402px;width:1.5px;height:3.5px;background:#8a8a8a;"></div>
<div style="left:1985.6px;top:1402px;width:1.5px;height:3.5px;background:#8a8a8a;"></div>
<div style="left:2027.2px;top:1402px;width:1.5px;height:3.5px;background:#8a8a8a;"></div>
<div class="t" style="top:1405px;font-size:19.5px;line-height:25px;color:#a9a9a9;-webkit-text-stroke:.5px;letter-spacing:.45px;left:2074.6px;">4:00</div>
<div style="left:2110.5px;top:1402px;width:1.5px;height:3.5px;background:#8a8a8a;"></div>
<div style="left:2152.1px;top:1402px;width:1.5px;height:3.5px;background:#8a8a8a;"></div>
<div style="left:2193.8px;top:1402px;width:1.5px;height:3.5px;background:#8a8a8a;"></div>
<div class="t" style="top:1405px;font-size:19.5px;line-height:25px;color:#a9a9a9;-webkit-text-stroke:.5px;letter-spacing:.45px;left:2241.1px;">4:20</div>
<div style="left:2277px;top:1402px;width:1.5px;height:3.5px;background:#8a8a8a;"></div>
<div style="left:2318.7px;top:1402px;width:1.5px;height:3.5px;background:#8a8a8a;"></div>
<div style="left:2360.3px;top:1402px;width:1.5px;height:3.5px;background:#8a8a8a;"></div>
<div class="t" style="top:1405px;font-size:19.5px;line-height:25px;color:#a9a9a9;-webkit-text-stroke:.5px;letter-spacing:.45px;left:2407.6px;">4:40</div>
<div style="left:2443.6px;top:1402px;width:1.5px;height:3.5px;background:#8a8a8a;"></div>
<div style="left:2485.2px;top:1402px;width:1.5px;height:3.5px;background:#8a8a8a;"></div>
<div style="left:2526.8px;top:1402px;width:1.5px;height:3.5px;background:#8a8a8a;"></div>
<div class="t" style="top:1405px;font-size:19.5px;line-height:25px;color:#a9a9a9;-webkit-text-stroke:.5px;letter-spacing:.45px;left:2574.1px;">5:00</div>
<div style="left:2610.1px;top:1402px;width:1.5px;height:3.5px;background:#8a8a8a;"></div>
<div style="left:2651.7px;top:1402px;width:1.5px;height:3.5px;background:#8a8a8a;"></div>
<div style="left:2693.3px;top:1402px;width:1.5px;height:3.5px;background:#8a8a8a;"></div>
<div class="t" style="top:1405px;font-size:19.5px;line-height:25px;color:#a9a9a9;-webkit-text-stroke:.5px;letter-spacing:.45px;left:2740.7px;">5:20</div>
<div style="left:2776.6px;top:1402px;width:1.5px;height:3.5px;background:#8a8a8a;"></div>
<div style="left:2809px;top:165px;width:58px;height:23.5px;background:#3c3c3c;border-radius:12px;border:1.500px solid #0c0c0c;box-sizing:border-box;"></div>
<div class="t" style="top:164.3px;font-size:19px;line-height:25px;color:#d6d6d6;-webkit-text-stroke:.5px;letter-spacing:.45px;left:2638px;width:400px;text-align:center;">Set</div>
<div style="left:2891px;top:196px;width:44px;height:23px;background:#35bfe0;border:2px solid #0c0c0c;box-sizing:border-box;"></div>
<div style="left:2945px;top:196px;width:44px;height:23px;background:#3c3c3c;border:2px solid #0c0c0c;box-sizing:border-box;"></div>
<div style="left:2804px;top:230px;width:196px;height:34px;background:#ff3636;"></div>
<div class="t" style="top:234.3px;font-size:20px;line-height:26px;color:rgba(0,0,0,0.780);font-weight:700;left:2851px;">Ghost Kick</div>
<div style="left:3004px;top:230px;width:148px;height:34px;background:#383838;"></div>
<div style="left:3156px;top:230px;width:230px;height:34px;background:#383838;"></div>
<div style="left:3008px;top:234px;width:140px;height:26px;background:#373737;border:2px solid #131313;box-sizing:border-box;"></div>
<div style="left:3162px;top:234px;width:92px;height:26px;background:#3e3e3e;border:2px solid #131313;box-sizing:border-box;"></div>
<div class="t" style="top:233.8px;font-size:21px;line-height:27px;color:#cfcfcf;-webkit-text-stroke:.5px;letter-spacing:.45px;left:3008px;width:400px;text-align:center;">1</div>
<div style="left:3262px;top:234px;width:42px;height:26px;background:#444;border:2px solid #131313;box-sizing:border-box;"></div>
<div class="t" style="top:234.3px;font-size:20px;line-height:26px;color:#d0d0d0;-webkit-text-stroke:.5px;letter-spacing:.45px;left:3083px;width:400px;text-align:center;">S</div>
<div style="left:3312px;top:234px;width:42px;height:26px;background:#444;border:2px solid #131313;box-sizing:border-box;"></div>
<div style="left:3366.5px;top:232px;width:5.7px;height:32px;background:#070707;"></div>
<div style="left:3374.5px;top:232px;width:6px;height:32px;background:#070707;"></div>
<div style="left:3366.5px;top:235px;width:5.7px;height:1.5px;background:#383838;"></div>
<div style="left:3374.5px;top:235px;width:6px;height:1.5px;background:#383838;"></div>
<div style="left:2804px;top:268px;width:196px;height:34px;background:#ff3636;"></div>
<div class="t" style="top:272.3px;font-size:20px;line-height:26px;color:rgba(0,0,0,0.780);font-weight:700;left:2851px;">Kick</div>
<div style="left:3004px;top:268px;width:148px;height:34px;background:#383838;"></div>
<div style="left:3156px;top:268px;width:230px;height:34px;background:#383838;"></div>
<div style="left:3008px;top:272px;width:140px;height:26px;background:#373737;border:2px solid #131313;box-sizing:border-box;"></div>
<div style="left:3162px;top:272px;width:92px;height:26px;background:#f79a1e;border:2px solid #131313;box-sizing:border-box;"></div>
<div class="t" style="top:271.8px;font-size:21px;line-height:27px;color:#101010;font-weight:700;left:3008px;width:400px;text-align:center;">2</div>
<div style="left:3262px;top:272px;width:42px;height:26px;background:#444;border:2px solid #131313;box-sizing:border-box;"></div>
<div class="t" style="top:272.3px;font-size:20px;line-height:26px;color:#d0d0d0;-webkit-text-stroke:.5px;letter-spacing:.45px;left:3083px;width:400px;text-align:center;">S</div>
<div style="left:3312px;top:272px;width:42px;height:26px;background:#444;border:2px solid #131313;box-sizing:border-box;"></div>
<div style="left:3366.5px;top:270px;width:5.7px;height:32px;background:#070707;"></div>
<div style="left:3374.5px;top:270px;width:6px;height:32px;background:#070707;"></div>
<div style="left:3366.5px;top:273px;width:5.7px;height:1.5px;background:#383838;"></div>
<div style="left:3374.5px;top:273px;width:6px;height:1.5px;background:#383838;"></div>
<div style="left:2804px;top:306px;width:196px;height:34px;background:#ff3636;"></div>
<div class="t" style="top:310.3px;font-size:20px;line-height:26px;color:rgba(0,0,0,0.780);font-weight:700;left:2851px;">Lowpass Kick</div>
<div style="left:3004px;top:306px;width:148px;height:34px;background:#383838;"></div>
<div style="left:3156px;top:306px;width:230px;height:34px;background:#383838;"></div>
<div style="left:3008px;top:310px;width:140px;height:26px;background:#373737;border:2px solid #131313;box-sizing:border-box;"></div>
<div style="left:3162px;top:310px;width:92px;height:26px;background:#f79a1e;border:2px solid #131313;box-sizing:border-box;"></div>
<div class="t" style="top:309.8px;font-size:21px;line-height:27px;color:#101010;font-weight:700;left:3008px;width:400px;text-align:center;">3</div>
<div style="left:3262px;top:310px;width:42px;height:26px;background:#444;border:2px solid #131313;box-sizing:border-box;"></div>
<div class="t" style="top:310.3px;font-size:20px;line-height:26px;color:#d0d0d0;-webkit-text-stroke:.5px;letter-spacing:.45px;left:3083px;width:400px;text-align:center;">S</div>
<div style="left:3312px;top:310px;width:42px;height:26px;background:#444;border:2px solid #131313;box-sizing:border-box;"></div>
<div style="left:3366.5px;top:308px;width:5.7px;height:32px;background:#070707;"></div>
<div style="left:3374.5px;top:308px;width:6px;height:32px;background:#070707;"></div>
<div style="left:3366.5px;top:311px;width:5.7px;height:1.5px;background:#383838;"></div>
<div style="left:3374.5px;top:311px;width:6px;height:1.5px;background:#383838;"></div>
<div style="left:2804px;top:344px;width:196px;height:34px;background:#25ffa8;"></div>
<div class="t" style="top:348.3px;font-size:20px;line-height:26px;color:rgba(0,0,0,0.780);font-weight:700;left:2851px;">Open Hat L</div>
<div style="left:3004px;top:344px;width:148px;height:172px;background:#383838;"></div>
<div style="left:3156px;top:344px;width:230px;height:172px;background:#383838;"></div>
<div style="left:3162px;top:348px;width:92px;height:26px;background:#f79a1e;border:2px solid #131313;box-sizing:border-box;"></div>
<div class="t" style="top:347.8px;font-size:21px;line-height:27px;color:#101010;font-weight:700;left:3008px;width:400px;text-align:center;">4</div>
<div style="left:3262px;top:348px;width:42px;height:26px;background:#444;border:2px solid #131313;box-sizing:border-box;"></div>
<div class="t" style="top:348.3px;font-size:20px;line-height:26px;color:#d0d0d0;-webkit-text-stroke:.5px;letter-spacing:.45px;left:3083px;width:400px;text-align:center;">S</div>
<div style="left:3312px;top:348px;width:42px;height:26px;background:#444;border:2px solid #131313;box-sizing:border-box;"></div>
<div style="left:3366.5px;top:346px;width:5.7px;height:170px;background:#070707;"></div>
<div style="left:3374.5px;top:346px;width:6px;height:170px;background:#070707;"></div>
<div style="left:3366.5px;top:349px;width:5.7px;height:1.5px;background:#383838;"></div>
<div style="left:3374.5px;top:349px;width:6px;height:1.5px;background:#383838;"></div>
<div style="left:3366.5px;top:361px;width:5.7px;height:1.5px;background:#383838;"></div>
<div style="left:3374.5px;top:361px;width:6px;height:1.5px;background:#383838;"></div>
<div style="left:2804px;top:520px;width:196px;height:34px;background:#25ffa8;"></div>
<div class="t" style="top:524.3px;font-size:20px;line-height:26px;color:rgba(0,0,0,0.780);font-weight:700;left:2851px;">Open Hat R</div>
<div style="left:3004px;top:520px;width:148px;height:34px;background:#383838;"></div>
<div style="left:3156px;top:520px;width:230px;height:34px;background:#383838;"></div>
<div style="left:3008px;top:524px;width:140px;height:26px;background:#373737;border:2px solid #131313;box-sizing:border-box;"></div>
<div style="left:3162px;top:524px;width:92px;height:26px;background:#f79a1e;border:2px solid #131313;box-sizing:border-box;"></div>
<div class="t" style="top:523.8px;font-size:21px;line-height:27px;color:#101010;font-weight:700;left:3008px;width:400px;text-align:center;">5</div>
<div style="left:3262px;top:524px;width:42px;height:26px;background:#444;border:2px solid #131313;box-sizing:border-box;"></div>
<div class="t" style="top:524.3px;font-size:20px;line-height:26px;color:#d0d0d0;-webkit-text-stroke:.5px;letter-spacing:.45px;left:3083px;width:400px;text-align:center;">S</div>
<div style="left:3312px;top:524px;width:42px;height:26px;background:#444;border:2px solid #131313;box-sizing:border-box;"></div>
<div style="left:3366.5px;top:522px;width:5.7px;height:32px;background:#070707;"></div>
<div style="left:3374.5px;top:522px;width:6px;height:32px;background:#070707;"></div>
<div style="left:3366.5px;top:525px;width:5.7px;height:1.5px;background:#383838;"></div>
<div style="left:3374.5px;top:525px;width:6px;height:1.5px;background:#383838;"></div>
<div style="left:2804px;top:558px;width:196px;height:34px;background:#25ffa8;"></div>
<div class="t" style="top:562.3px;font-size:20px;line-height:26px;color:rgba(0,0,0,0.780);font-weight:700;left:2851px;">Fast Hats</div>
<div style="left:3004px;top:558px;width:148px;height:34px;background:#383838;"></div>
<div style="left:3156px;top:558px;width:230px;height:34px;background:#383838;"></div>
<div style="left:3008px;top:562px;width:140px;height:26px;background:#373737;border:2px solid #131313;box-sizing:border-box;"></div>
<div style="left:3162px;top:562px;width:92px;height:26px;background:#f79a1e;border:2px solid #131313;box-sizing:border-box;"></div>
<div class="t" style="top:561.8px;font-size:21px;line-height:27px;color:#101010;font-weight:700;left:3008px;width:400px;text-align:center;">6</div>
<div style="left:3262px;top:562px;width:42px;height:26px;background:#444;border:2px solid #131313;box-sizing:border-box;"></div>
<div class="t" style="top:562.3px;font-size:20px;line-height:26px;color:#d0d0d0;-webkit-text-stroke:.5px;letter-spacing:.45px;left:3083px;width:400px;text-align:center;">S</div>
<div style="left:3312px;top:562px;width:42px;height:26px;background:#444;border:2px solid #131313;box-sizing:border-box;"></div>
<div style="left:3366.5px;top:560px;width:5.7px;height:32px;background:#070707;"></div>
<div style="left:3374.5px;top:560px;width:6px;height:32px;background:#070707;"></div>
<div style="left:3366.5px;top:563px;width:5.7px;height:1.5px;background:#383838;"></div>
<div style="left:3374.5px;top:563px;width:6px;height:1.5px;background:#383838;"></div>
<div style="left:2804px;top:596px;width:196px;height:34px;background:#25ffa8;"></div>
<div class="t" style="top:600.3px;font-size:20px;line-height:26px;color:rgba(0,0,0,0.780);font-weight:700;left:2851px;">Hat Loop</div>
<div style="left:3004px;top:596px;width:148px;height:34px;background:#383838;"></div>
<div style="left:3156px;top:596px;width:230px;height:34px;background:#383838;"></div>
<div style="left:3008px;top:600px;width:140px;height:26px;background:#373737;border:2px solid #131313;box-sizing:border-box;"></div>
<div style="left:3162px;top:600px;width:92px;height:26px;background:#f79a1e;border:2px solid #131313;box-sizing:border-box;"></div>
<div class="t" style="top:599.8px;font-size:21px;line-height:27px;color:#101010;font-weight:700;left:3008px;width:400px;text-align:center;">7</div>
<div style="left:3262px;top:600px;width:42px;height:26px;background:#444;border:2px solid #131313;box-sizing:border-box;"></div>
<div class="t" style="top:600.3px;font-size:20px;line-height:26px;color:#d0d0d0;-webkit-text-stroke:.5px;letter-spacing:.45px;left:3083px;width:400px;text-align:center;">S</div>
<div style="left:3312px;top:600px;width:42px;height:26px;background:#444;border:2px solid #131313;box-sizing:border-box;"></div>
<div style="left:3366.5px;top:598px;width:5.7px;height:32px;background:#070707;"></div>
<div style="left:3374.5px;top:598px;width:6px;height:32px;background:#070707;"></div>
<div style="left:3366.5px;top:601px;width:5.7px;height:1.5px;background:#383838;"></div>
<div style="left:3374.5px;top:601px;width:6px;height:1.5px;background:#383838;"></div>
<div style="left:2804px;top:634px;width:196px;height:34px;background:#ffa529;"></div>
<div class="t" style="top:638.3px;font-size:20px;line-height:26px;color:rgba(0,0,0,0.780);font-weight:700;left:2847px;">8 Group</div>
<div style="left:3004px;top:634px;width:148px;height:138px;background:#383838;"></div>
<div style="left:3156px;top:634px;width:230px;height:138px;background:#383838;"></div>
<div style="left:3162px;top:638px;width:92px;height:26px;background:#f79a1e;border:2px solid #131313;box-sizing:border-box;"></div>
<div class="t" style="top:637.8px;font-size:21px;line-height:27px;color:#101010;font-weight:700;left:3008px;width:400px;text-align:center;">8</div>
<div style="left:3262px;top:638px;width:42px;height:26px;background:#444;border:2px solid #131313;box-sizing:border-box;"></div>
<div class="t" style="top:638.3px;font-size:20px;line-height:26px;color:#d0d0d0;-webkit-text-stroke:.5px;letter-spacing:.45px;left:3083px;width:400px;text-align:center;">S</div>
<div style="left:3366.5px;top:636px;width:5.7px;height:136px;background:#070707;"></div>
<div style="left:3374.5px;top:636px;width:6px;height:136px;background:#070707;"></div>
<div style="left:3366.5px;top:639px;width:5.7px;height:1.5px;background:#383838;"></div>
<div style="left:3374.5px;top:639px;width:6px;height:1.5px;background:#383838;"></div>
<div style="left:3366.5px;top:651px;width:5.7px;height:1.5px;background:#383838;"></div>
<div style="left:3374.5px;top:651px;width:6px;height:1.5px;background:#383838;"></div>
<div style="left:2814px;top:776px;width:186px;height:34px;background:#ffa529;"></div>
<div class="t" style="top:780.3px;font-size:20px;line-height:26px;color:rgba(0,0,0,0.780);font-weight:700;left:2861px;">Clap L</div>
<div style="left:3004px;top:776px;width:148px;height:34px;background:#383838;"></div>
<div style="left:3156px;top:776px;width:230px;height:34px;background:#383838;"></div>
<div style="left:3008px;top:780px;width:140px;height:26px;background:#373737;border:2px solid #131313;box-sizing:border-box;"></div>
<div style="left:3162px;top:780px;width:92px;height:26px;background:#f79a1e;border:2px solid #131313;box-sizing:border-box;"></div>
<div class="t" style="top:779.8px;font-size:21px;line-height:27px;color:#101010;font-weight:700;left:3008px;width:400px;text-align:center;">9</div>
<div style="left:3262px;top:780px;width:42px;height:26px;background:#444;border:2px solid #131313;box-sizing:border-box;"></div>
<div class="t" style="top:780.3px;font-size:20px;line-height:26px;color:#d0d0d0;-webkit-text-stroke:.5px;letter-spacing:.45px;left:3083px;width:400px;text-align:center;">S</div>
<div style="left:3312px;top:780px;width:42px;height:26px;background:#444;border:2px solid #131313;box-sizing:border-box;"></div>
<div style="left:3366.5px;top:778px;width:5.7px;height:32px;background:#070707;"></div>
<div style="left:3374.5px;top:778px;width:6px;height:32px;background:#070707;"></div>
<div style="left:3366.5px;top:781px;width:5.7px;height:1.5px;background:#383838;"></div>
<div style="left:3374.5px;top:781px;width:6px;height:1.5px;background:#383838;"></div>
<div style="left:2814px;top:814px;width:186px;height:34px;background:#ffa529;"></div>
<div class="t" style="top:818.3px;font-size:20px;line-height:26px;color:rgba(0,0,0,0.780);font-weight:700;left:2861px;">Clap R</div>
<div style="left:3004px;top:814px;width:148px;height:34px;background:#383838;"></div>
<div style="left:3156px;top:814px;width:230px;height:34px;background:#383838;"></div>
<div style="left:3008px;top:818px;width:140px;height:26px;background:#373737;border:2px solid #131313;box-sizing:border-box;"></div>
<div style="left:3162px;top:818px;width:92px;height:26px;background:#f79a1e;border:2px solid #131313;box-sizing:border-box;"></div>
<div class="t" style="top:817.8px;font-size:21px;line-height:27px;color:#101010;font-weight:700;left:3008px;width:400px;text-align:center;">10</div>
<div style="left:3262px;top:818px;width:42px;height:26px;background:#444;border:2px solid #131313;box-sizing:border-box;"></div>
<div class="t" style="top:818.3px;font-size:20px;line-height:26px;color:#d0d0d0;-webkit-text-stroke:.5px;letter-spacing:.45px;left:3083px;width:400px;text-align:center;">S</div>
<div style="left:3312px;top:818px;width:42px;height:26px;background:#444;border:2px solid #131313;box-sizing:border-box;"></div>
<div style="left:3366.5px;top:816px;width:5.7px;height:32px;background:#070707;"></div>
<div style="left:3374.5px;top:816px;width:6px;height:32px;background:#070707;"></div>
<div style="left:3366.5px;top:819px;width:5.7px;height:1.5px;background:#383838;"></div>
<div style="left:3374.5px;top:819px;width:6px;height:1.5px;background:#383838;"></div>
<div style="left:2804px;top:852px;width:196px;height:34px;background:#ffa529;"></div>
<div class="t" style="top:856.3px;font-size:20px;line-height:26px;color:rgba(0,0,0,0.780);font-weight:700;left:2851px;">Snare Roll</div>
<div style="left:3004px;top:852px;width:148px;height:34px;background:#383838;"></div>
<div style="left:3156px;top:852px;width:230px;height:34px;background:#383838;"></div>
<div style="left:3008px;top:856px;width:140px;height:26px;background:#373737;border:2px solid #131313;box-sizing:border-box;"></div>
<div style="left:3162px;top:856px;width:92px;height:26px;background:#f79a1e;border:2px solid #131313;box-sizing:border-box;"></div>
<div class="t" style="top:855.8px;font-size:21px;line-height:27px;color:#101010;font-weight:700;left:3008px;width:400px;text-align:center;">11</div>
<div style="left:3262px;top:856px;width:42px;height:26px;background:#444;border:2px solid #131313;box-sizing:border-box;"></div>
<div class="t" style="top:856.3px;font-size:20px;line-height:26px;color:#d0d0d0;-webkit-text-stroke:.5px;letter-spacing:.45px;left:3083px;width:400px;text-align:center;">S</div>
<div style="left:3312px;top:856px;width:42px;height:26px;background:#444;border:2px solid #131313;box-sizing:border-box;"></div>
<div style="left:3366.5px;top:854px;width:5.7px;height:32px;background:#070707;"></div>
<div style="left:3374.5px;top:854px;width:6px;height:32px;background:#070707;"></div>
<div style="left:3366.5px;top:857px;width:5.7px;height:1.5px;background:#383838;"></div>
<div style="left:3374.5px;top:857px;width:6px;height:1.5px;background:#383838;"></div>
<div style="left:2804px;top:890px;width:196px;height:34px;background:#8fcddb;"></div>
<div class="t" style="top:894.3px;font-size:20px;line-height:26px;color:rgba(0,0,0,0.780);font-weight:700;left:2851px;">Bass</div>
<div style="left:3004px;top:890px;width:148px;height:34px;background:#383838;"></div>
<div style="left:3156px;top:890px;width:230px;height:34px;background:#383838;"></div>
<div style="left:3008px;top:894px;width:140px;height:26px;background:#373737;border:2px solid #131313;box-sizing:border-box;"></div>
<div style="left:3162px;top:894px;width:92px;height:26px;background:#f79a1e;border:2px solid #131313;box-sizing:border-box;"></div>
<div class="t" style="top:893.8px;font-size:21px;line-height:27px;color:#101010;font-weight:700;left:3008px;width:400px;text-align:center;">12</div>
<div style="left:3262px;top:894px;width:42px;height:26px;background:#444;border:2px solid #131313;box-sizing:border-box;"></div>
<div class="t" style="top:894.3px;font-size:20px;line-height:26px;color:#d0d0d0;-webkit-text-stroke:.5px;letter-spacing:.45px;left:3083px;width:400px;text-align:center;">S</div>
<div style="left:3312px;top:894px;width:42px;height:26px;background:#444;border:2px solid #131313;box-sizing:border-box;"></div>
<div style="left:3366.5px;top:892px;width:5.7px;height:32px;background:#070707;"></div>
<div style="left:3374.5px;top:892px;width:6px;height:32px;background:#070707;"></div>
<div style="left:3366.5px;top:895px;width:5.7px;height:1.5px;background:#383838;"></div>
<div style="left:3374.5px;top:895px;width:6px;height:1.5px;background:#383838;"></div>
<div style="left:2804px;top:928px;width:196px;height:34px;background:#fff034;"></div>
<div class="t" style="top:932.3px;font-size:20px;line-height:26px;color:rgba(0,0,0,0.780);font-weight:700;left:2851px;">Bass Shot</div>
<div style="left:3004px;top:928px;width:148px;height:34px;background:#383838;"></div>
<div style="left:3156px;top:928px;width:230px;height:34px;background:#383838;"></div>
<div style="left:3008px;top:932px;width:140px;height:26px;background:#373737;border:2px solid #131313;box-sizing:border-box;"></div>
<div style="left:3162px;top:932px;width:92px;height:26px;background:#f79a1e;border:2px solid #131313;box-sizing:border-box;"></div>
<div class="t" style="top:931.8px;font-size:21px;line-height:27px;color:#101010;font-weight:700;left:3008px;width:400px;text-align:center;">13</div>
<div style="left:3262px;top:932px;width:42px;height:26px;background:#444;border:2px solid #131313;box-sizing:border-box;"></div>
<div class="t" style="top:932.3px;font-size:20px;line-height:26px;color:#d0d0d0;-webkit-text-stroke:.5px;letter-spacing:.45px;left:3083px;width:400px;text-align:center;">S</div>
<div style="left:3312px;top:932px;width:42px;height:26px;background:#444;border:2px solid #131313;box-sizing:border-box;"></div>
<div style="left:3366.5px;top:930px;width:5.7px;height:32px;background:#070707;"></div>
<div style="left:3374.5px;top:930px;width:6px;height:32px;background:#070707;"></div>
<div style="left:3366.5px;top:933px;width:5.7px;height:1.5px;background:#383838;"></div>
<div style="left:3374.5px;top:933px;width:6px;height:1.5px;background:#383838;"></div>
<div style="left:2804px;top:966px;width:196px;height:34px;background:#ff39d4;"></div>
<div class="t" style="top:970.3px;font-size:20px;line-height:26px;color:rgba(0,0,0,0.780);font-weight:700;left:2851px;">Lead</div>
<div style="left:3004px;top:966px;width:148px;height:34px;background:#383838;"></div>
<div style="left:3156px;top:966px;width:230px;height:34px;background:#383838;"></div>
<div style="left:3008px;top:970px;width:140px;height:26px;background:#373737;border:2px solid #131313;box-sizing:border-box;"></div>
<div style="left:3162px;top:970px;width:92px;height:26px;background:#f79a1e;border:2px solid #131313;box-sizing:border-box;"></div>
<div class="t" style="top:969.8px;font-size:21px;line-height:27px;color:#101010;font-weight:700;left:3008px;width:400px;text-align:center;">14</div>
<div style="left:3262px;top:970px;width:42px;height:26px;background:#444;border:2px solid #131313;box-sizing:border-box;"></div>
<div class="t" style="top:970.3px;font-size:20px;line-height:26px;color:#d0d0d0;-webkit-text-stroke:.5px;letter-spacing:.45px;left:3083px;width:400px;text-align:center;">S</div>
<div style="left:3312px;top:970px;width:42px;height:26px;background:#444;border:2px solid #131313;box-sizing:border-box;"></div>
<div style="left:3366.5px;top:968px;width:5.7px;height:32px;background:#070707;"></div>
<div style="left:3374.5px;top:968px;width:6px;height:32px;background:#070707;"></div>
<div style="left:3366.5px;top:971px;width:5.7px;height:1.5px;background:#383838;"></div>
<div style="left:3374.5px;top:971px;width:6px;height:1.5px;background:#383838;"></div>
<div style="left:2804px;top:1004px;width:196px;height:34px;background:#ff39d4;"></div>
<div class="t" style="top:1008.3px;font-size:20px;line-height:26px;color:rgba(0,0,0,0.780);font-weight:700;left:2851px;">Pad</div>
<div style="left:3004px;top:1004px;width:148px;height:34px;background:#383838;"></div>
<div style="left:3156px;top:1004px;width:230px;height:34px;background:#383838;"></div>
<div style="left:3008px;top:1008px;width:140px;height:26px;background:#373737;border:2px solid #131313;box-sizing:border-box;"></div>
<div style="left:3162px;top:1008px;width:92px;height:26px;background:#f79a1e;border:2px solid #131313;box-sizing:border-box;"></div>
<div class="t" style="top:1007.8px;font-size:21px;line-height:27px;color:#101010;font-weight:700;left:3008px;width:400px;text-align:center;">15</div>
<div style="left:3262px;top:1008px;width:42px;height:26px;background:#444;border:2px solid #131313;box-sizing:border-box;"></div>
<div class="t" style="top:1008.3px;font-size:20px;line-height:26px;color:#d0d0d0;-webkit-text-stroke:.5px;letter-spacing:.45px;left:3083px;width:400px;text-align:center;">S</div>
<div style="left:3312px;top:1008px;width:42px;height:26px;background:#444;border:2px solid #131313;box-sizing:border-box;"></div>
<div style="left:3366.5px;top:1006px;width:5.7px;height:32px;background:#070707;"></div>
<div style="left:3374.5px;top:1006px;width:6px;height:32px;background:#070707;"></div>
<div style="left:3366.5px;top:1009px;width:5.7px;height:1.5px;background:#383838;"></div>
<div style="left:3374.5px;top:1009px;width:6px;height:1.5px;background:#383838;"></div>
<div style="left:2804px;top:1042px;width:196px;height:34px;background:#ff94a6;"></div>
<div class="t" style="top:1046.3px;font-size:20px;line-height:26px;color:rgba(0,0,0,0.780);font-weight:700;left:2851px;">Vocal Loop</div>
<div style="left:3004px;top:1042px;width:148px;height:34px;background:#383838;"></div>
<div style="left:3156px;top:1042px;width:230px;height:34px;background:#383838;"></div>
<div style="left:3008px;top:1046px;width:140px;height:26px;background:#373737;border:2px solid #131313;box-sizing:border-box;"></div>
<div style="left:3162px;top:1046px;width:92px;height:26px;background:#f79a1e;border:2px solid #131313;box-sizing:border-box;"></div>
<div class="t" style="top:1045.8px;font-size:21px;line-height:27px;color:#101010;font-weight:700;left:3008px;width:400px;text-align:center;">16</div>
<div style="left:3262px;top:1046px;width:42px;height:26px;background:#444;border:2px solid #131313;box-sizing:border-box;"></div>
<div class="t" style="top:1046.3px;font-size:20px;line-height:26px;color:#d0d0d0;-webkit-text-stroke:.5px;letter-spacing:.45px;left:3083px;width:400px;text-align:center;">S</div>
<div style="left:3312px;top:1046px;width:42px;height:26px;background:#444;border:2px solid #131313;box-sizing:border-box;"></div>
<div style="left:3366.5px;top:1044px;width:5.7px;height:32px;background:#070707;"></div>
<div style="left:3374.5px;top:1044px;width:6px;height:32px;background:#070707;"></div>
<div style="left:3366.5px;top:1047px;width:5.7px;height:1.5px;background:#383838;"></div>
<div style="left:3374.5px;top:1047px;width:6px;height:1.5px;background:#383838;"></div>
<div style="left:2804px;top:1080px;width:196px;height:34px;background:#92a7ff;"></div>
<div class="t" style="top:1084.3px;font-size:20px;line-height:26px;color:rgba(0,0,0,0.780);font-weight:700;left:2851px;">Short Sweep</div>
<div style="left:3004px;top:1080px;width:148px;height:34px;background:#383838;"></div>
<div style="left:3156px;top:1080px;width:230px;height:34px;background:#383838;"></div>
<div style="left:3008px;top:1084px;width:140px;height:26px;background:#373737;border:2px solid #131313;box-sizing:border-box;"></div>
<div style="left:3162px;top:1084px;width:92px;height:26px;background:#f79a1e;border:2px solid #131313;box-sizing:border-box;"></div>
<div class="t" style="top:1083.8px;font-size:21px;line-height:27px;color:#101010;font-weight:700;left:3008px;width:400px;text-align:center;">17</div>
<div style="left:3262px;top:1084px;width:42px;height:26px;background:#444;border:2px solid #131313;box-sizing:border-box;"></div>
<div class="t" style="top:1084.3px;font-size:20px;line-height:26px;color:#d0d0d0;-webkit-text-stroke:.5px;letter-spacing:.45px;left:3083px;width:400px;text-align:center;">S</div>
<div style="left:3312px;top:1084px;width:42px;height:26px;background:#444;border:2px solid #131313;box-sizing:border-box;"></div>
<div style="left:3366.5px;top:1082px;width:5.7px;height:32px;background:#070707;"></div>
<div style="left:3374.5px;top:1082px;width:6px;height:32px;background:#070707;"></div>
<div style="left:3366.5px;top:1085px;width:5.7px;height:1.5px;background:#383838;"></div>
<div style="left:3374.5px;top:1085px;width:6px;height:1.5px;background:#383838;"></div>
<div style="left:2804px;top:1118px;width:196px;height:34px;background:#92a7ff;"></div>
<div class="t" style="top:1122.3px;font-size:20px;line-height:26px;color:rgba(0,0,0,0.780);font-weight:700;left:2851px;">Short Impact</div>
<div style="left:3004px;top:1118px;width:148px;height:34px;background:#383838;"></div>
<div style="left:3156px;top:1118px;width:230px;height:34px;background:#383838;"></div>
<div style="left:3008px;top:1122px;width:140px;height:26px;background:#373737;border:2px solid #131313;box-sizing:border-box;"></div>
<div style="left:3162px;top:1122px;width:92px;height:26px;background:#f79a1e;border:2px solid #131313;box-sizing:border-box;"></div>
<div class="t" style="top:1121.8px;font-size:21px;line-height:27px;color:#101010;font-weight:700;left:3008px;width:400px;text-align:center;">18</div>
<div style="left:3262px;top:1122px;width:42px;height:26px;background:#444;border:2px solid #131313;box-sizing:border-box;"></div>
<div class="t" style="top:1122.3px;font-size:20px;line-height:26px;color:#d0d0d0;-webkit-text-stroke:.5px;letter-spacing:.45px;left:3083px;width:400px;text-align:center;">S</div>
<div style="left:3312px;top:1122px;width:42px;height:26px;background:#444;border:2px solid #131313;box-sizing:border-box;"></div>
<div style="left:3366.5px;top:1120px;width:5.7px;height:32px;background:#070707;"></div>
<div style="left:3374.5px;top:1120px;width:6px;height:32px;background:#070707;"></div>
<div style="left:3366.5px;top:1123px;width:5.7px;height:1.5px;background:#383838;"></div>
<div style="left:3374.5px;top:1123px;width:6px;height:1.5px;background:#383838;"></div>
<div style="left:2804px;top:1156px;width:196px;height:34px;background:#92a7ff;"></div>
<div class="t" style="top:1160.3px;font-size:20px;line-height:26px;color:rgba(0,0,0,0.780);font-weight:700;left:2851px;">Noise Impact</div>
<div style="left:3004px;top:1156px;width:148px;height:34px;background:#383838;"></div>
<div style="left:3156px;top:1156px;width:230px;height:34px;background:#383838;"></div>
<div style="left:3008px;top:1160px;width:140px;height:26px;background:#373737;border:2px solid #131313;box-sizing:border-box;"></div>
<div style="left:3162px;top:1160px;width:92px;height:26px;background:#f79a1e;border:2px solid #131313;box-sizing:border-box;"></div>
<div class="t" style="top:1159.8px;font-size:21px;line-height:27px;color:#101010;font-weight:700;left:3008px;width:400px;text-align:center;">19</div>
<div style="left:3262px;top:1160px;width:42px;height:26px;background:#444;border:2px solid #131313;box-sizing:border-box;"></div>
<div class="t" style="top:1160.3px;font-size:20px;line-height:26px;color:#d0d0d0;-webkit-text-stroke:.5px;letter-spacing:.45px;left:3083px;width:400px;text-align:center;">S</div>
<div style="left:3312px;top:1160px;width:42px;height:26px;background:#444;border:2px solid #131313;box-sizing:border-box;"></div>
<div style="left:3366.5px;top:1158px;width:5.7px;height:32px;background:#070707;"></div>
<div style="left:3374.5px;top:1158px;width:6px;height:32px;background:#070707;"></div>
<div style="left:3366.5px;top:1161px;width:5.7px;height:1.5px;background:#383838;"></div>
<div style="left:3374.5px;top:1161px;width:6px;height:1.5px;background:#383838;"></div>
<div style="left:2804px;top:1194px;width:196px;height:34px;background:#92a7ff;"></div>
<div class="t" style="top:1198.3px;font-size:20px;line-height:26px;color:rgba(0,0,0,0.780);font-weight:700;left:2851px;">Long Sweep</div>
<div style="left:3004px;top:1194px;width:148px;height:34px;background:#383838;"></div>
<div style="left:3156px;top:1194px;width:230px;height:34px;background:#383838;"></div>
<div style="left:3008px;top:1198px;width:140px;height:26px;background:#373737;border:2px solid #131313;box-sizing:border-box;"></div>
<div style="left:3162px;top:1198px;width:92px;height:26px;background:#f79a1e;border:2px solid #131313;box-sizing:border-box;"></div>
<div class="t" style="top:1197.8px;font-size:21px;line-height:27px;color:#101010;font-weight:700;left:3008px;width:400px;text-align:center;">20</div>
<div style="left:3262px;top:1198px;width:42px;height:26px;background:#444;border:2px solid #131313;box-sizing:border-box;"></div>
<div class="t" style="top:1198.3px;font-size:20px;line-height:26px;color:#d0d0d0;-webkit-text-stroke:.5px;letter-spacing:.45px;left:3083px;width:400px;text-align:center;">S</div>
<div style="left:3312px;top:1198px;width:42px;height:26px;background:#444;border:2px solid #131313;box-sizing:border-box;"></div>
<div style="left:3366.5px;top:1196px;width:5.7px;height:32px;background:#070707;"></div>
<div style="left:3374.5px;top:1196px;width:6px;height:32px;background:#070707;"></div>
<div style="left:3366.5px;top:1199px;width:5.7px;height:1.5px;background:#383838;"></div>
<div style="left:3374.5px;top:1199px;width:6px;height:1.5px;background:#383838;"></div>
<div style="left:2804px;top:1232px;width:196px;height:34px;background:#007dc0;"></div>
<div class="t" style="top:1236.3px;font-size:20px;line-height:26px;color:rgba(0,0,0,0.780);font-weight:700;left:2851px;">21 Serum</div>
<div style="left:3004px;top:1232px;width:148px;height:34px;background:#383838;"></div>
<div style="left:3156px;top:1232px;width:230px;height:34px;background:#383838;"></div>
<div style="left:3008px;top:1236px;width:140px;height:26px;background:#373737;border:2px solid #131313;box-sizing:border-box;"></div>
<div style="left:3162px;top:1236px;width:92px;height:26px;background:#f79a1e;border:2px solid #131313;box-sizing:border-box;"></div>
<div class="t" style="top:1235.8px;font-size:21px;line-height:27px;color:#101010;font-weight:700;left:3008px;width:400px;text-align:center;">21</div>
<div style="left:3262px;top:1236px;width:42px;height:26px;background:#444;border:2px solid #131313;box-sizing:border-box;"></div>
<div class="t" style="top:1236.3px;font-size:20px;line-height:26px;color:#d0d0d0;-webkit-text-stroke:.5px;letter-spacing:.45px;left:3083px;width:400px;text-align:center;">S</div>
<div style="left:3312px;top:1236px;width:42px;height:26px;background:#e0262b;border:2px solid #131313;box-sizing:border-box;"></div>
<div style="left:3366.5px;top:1234px;width:5.7px;height:32px;background:#070707;"></div>
<div style="left:3374.5px;top:1234px;width:6px;height:32px;background:#070707;"></div>
<div style="left:3366.5px;top:1237px;width:5.7px;height:1.5px;background:#383838;"></div>
<div style="left:3374.5px;top:1237px;width:6px;height:1.5px;background:#383838;"></div>
<div style="left:2804px;top:378px;width:196px;height:138px;background:#3b7f62;"></div>
<div style="left:2804px;top:378px;width:196px;height:2px;background:#2c5e49;"></div>
<div style="left:2810px;top:383px;width:184px;height:24px;background:#1c1c1c;border:2px solid #0e0e0e;box-sizing:border-box;"></div>
<div class="t" style="top:382.8px;font-size:19.5px;line-height:25px;color:#dedede;-webkit-text-stroke:.5px;letter-spacing:.45px;left:2834px;max-width:146px;overflow:hidden;">EQ Eight</div>
<div style="left:2810px;top:417px;width:184px;height:24px;background:#1c1c1c;border:2px solid #0e0e0e;box-sizing:border-box;"></div>
<div class="t" style="top:416.8px;font-size:19.5px;line-height:25px;color:#dedede;-webkit-text-stroke:.5px;letter-spacing:.45px;left:2834px;max-width:146px;overflow:hidden;">3 Resonance A</div>
<div style="left:3008px;top:349px;width:140px;height:24px;background:#1c1c1c;border:2px solid #0e0e0e;box-sizing:border-box;"></div>
<div class="t" style="top:348.8px;font-size:19.5px;line-height:25px;color:#dedede;-webkit-text-stroke:.5px;letter-spacing:.45px;left:3013px;max-width:121px;overflow:hidden;">All Ins</div>
<div style="left:3008px;top:383px;width:140px;height:24px;background:#1c1c1c;border:2px solid #0e0e0e;box-sizing:border-box;"></div>
<div style="left:3012px;top:387px;width:3.5px;height:16px;background:repeating-linear-gradient(180deg,#050505 0,#050505 3px,transparent 3px,transparent 5px);"></div>
<div style="left:3017px;top:387px;width:3.5px;height:16px;background:repeating-linear-gradient(180deg,#050505 0,#050505 3px,transparent 3px,transparent 5px);"></div>
<div class="t" style="top:382.8px;font-size:19.5px;line-height:25px;color:#dedede;-webkit-text-stroke:.5px;letter-spacing:.45px;left:3029px;max-width:97px;overflow:hidden;">All Channels</div>
<div style="left:3009px;top:417px;width:32px;height:24px;background:#444;border:2px solid #131313;box-sizing:border-box;"></div>
<div class="t" style="top:416.8px;font-size:19.5px;line-height:25px;color:#cfcfcf;-webkit-text-stroke:.5px;letter-spacing:.45px;left:2825px;width:400px;text-align:center;">In</div>
<div style="left:3049px;top:417px;width:52px;height:24px;background:#f79a1e;border:2px solid #131313;box-sizing:border-box;"></div>
<div class="t" style="top:416.8px;font-size:19.5px;line-height:25px;color:#111;-webkit-text-stroke:.5px;letter-spacing:.45px;left:2875px;width:400px;text-align:center;">Auto</div>
<div style="left:3108px;top:417px;width:39px;height:24px;background:#444;border:2px solid #131313;box-sizing:border-box;"></div>
<div class="t" style="top:416.8px;font-size:19.5px;line-height:25px;color:#cfcfcf;-webkit-text-stroke:.5px;letter-spacing:.45px;left:2927.5px;width:400px;text-align:center;">Off</div>
<div style="left:3008px;top:451px;width:140px;height:24px;background:#1c1c1c;border:2px solid #0e0e0e;box-sizing:border-box;"></div>
<div class="t" style="top:450.8px;font-size:19.5px;line-height:25px;color:#dedede;-webkit-text-stroke:.5px;letter-spacing:.45px;left:3013px;max-width:121px;overflow:hidden;">Master</div>
<div style="left:3008px;top:485px;width:140px;height:24px;background:#373737;border:2px solid #131313;box-sizing:border-box;"></div>
<div style="left:3162px;top:383px;width:92px;height:24px;background:#1c1c1c;border:2px solid #0e0e0e;box-sizing:border-box;"></div>
<div style="left:3164px;top:385px;width:59px;height:20px;background:#1f7389;"></div>
<div class="t" style="top:382.8px;font-size:19.5px;line-height:25px;color:#dadada;-webkit-text-stroke:.5px;letter-spacing:.45px;left:3008px;width:400px;text-align:center;">-7.0</div>
<div style="left:3263px;top:383px;width:91px;height:24px;background:#1c1c1c;border:2px solid #0e0e0e;box-sizing:border-box;"></div>
<div style="left:3294px;top:385px;width:14px;height:20px;background:#1f7389;"></div>
<div class="t" style="top:382.8px;font-size:19.5px;line-height:25px;color:#dadada;-webkit-text-stroke:.5px;letter-spacing:.45px;left:3108.5px;width:400px;text-align:center;">17L</div>
<div style="left:3162px;top:417px;width:59px;height:24px;background:#1c1c1c;border:2px solid #0e0e0e;box-sizing:border-box;"></div>
<div class="t" style="top:416.8px;font-size:19.5px;line-height:25px;color:#dadada;-webkit-text-stroke:.5px;letter-spacing:.45px;left:2991.5px;width:400px;text-align:center;">-inf</div>
<div style="left:3229px;top:417px;width:59px;height:24px;background:#1c1c1c;border:2px solid #0e0e0e;box-sizing:border-box;"></div>
<div class="t" style="top:416.8px;font-size:19.5px;line-height:25px;color:#dadada;-webkit-text-stroke:.5px;letter-spacing:.45px;left:3058.5px;width:400px;text-align:center;">-inf</div>
<div style="left:2804px;top:668px;width:8.5px;height:180px;background:#ffa529;"></div>
<div style="left:2812.5px;top:668px;width:1.5px;height:180px;background:#7a4e12;"></div>
<div style="left:2814px;top:668px;width:186px;height:104px;background:#8b6b4c;"></div>
<div style="left:2814px;top:668px;width:186px;height:2px;background:#6b5037;"></div>
<div style="left:2814px;top:668px;width:2px;height:104px;background:#6b5037;"></div>
<div style="left:2818px;top:672px;width:176px;height:25px;background:#1c1c1c;border:2px solid #0e0e0e;box-sizing:border-box;"></div>
<div class="t" style="top:672.3px;font-size:19.5px;line-height:25px;color:#dedede;-webkit-text-stroke:.5px;letter-spacing:.45px;left:2842px;max-width:138px;overflow:hidden;">Reverb</div>
<div style="left:2818px;top:706px;width:176px;height:25px;background:#1c1c1c;border:2px solid #0e0e0e;box-sizing:border-box;"></div>
<div class="t" style="top:706.3px;font-size:19.5px;line-height:25px;color:#dedede;-webkit-text-stroke:.5px;letter-spacing:.45px;left:2842px;max-width:138px;overflow:hidden;">Dry/Wet</div>
<div style="left:3008px;top:638.5px;width:140px;height:25px;background:#1c1c1c;border:2px solid #0e0e0e;box-sizing:border-box;"></div>
<div class="t" style="top:638.8px;font-size:19.5px;line-height:25px;color:#dedede;-webkit-text-stroke:.5px;letter-spacing:.45px;left:3013px;max-width:121px;overflow:hidden;">Master</div>
<div style="left:3008px;top:672.5px;width:140px;height:24.5px;background:#373737;border:2px solid #131313;box-sizing:border-box;"></div>
<div style="left:3162px;top:672.5px;width:92px;height:24.5px;background:#1c1c1c;border:2px solid #0e0e0e;box-sizing:border-box;"></div>
<div style="left:3164px;top:674.5px;width:74px;height:20.5px;background:#1f7389;"></div>
<div class="t" style="top:672.5px;font-size:19.5px;line-height:25px;color:#dadada;-webkit-text-stroke:.5px;letter-spacing:.45px;left:3008px;width:400px;text-align:center;">0</div>
<div style="left:3262.5px;top:672.5px;width:91px;height:24.5px;background:#1c1c1c;border:2px solid #0e0e0e;box-sizing:border-box;"></div>
<div class="t" style="top:672.5px;font-size:19.5px;line-height:25px;color:#dadada;-webkit-text-stroke:.5px;letter-spacing:.45px;left:3108px;width:400px;text-align:center;">C</div>
<div style="left:3162px;top:706.5px;width:59px;height:24.5px;background:#1c1c1c;border:2px solid #0e0e0e;box-sizing:border-box;"></div>
<div class="t" style="top:706.5px;font-size:19.5px;line-height:25px;color:#dadada;-webkit-text-stroke:.5px;letter-spacing:.45px;left:2991.5px;width:400px;text-align:center;">-inf</div>
<div style="left:3228.5px;top:706.5px;width:59px;height:24.5px;background:#1c1c1c;border:2px solid #0e0e0e;box-sizing:border-box;"></div>
<div class="t" style="top:706.5px;font-size:19.5px;line-height:25px;color:#dadada;-webkit-text-stroke:.5px;letter-spacing:.45px;left:3058px;width:400px;text-align:center;">-inf</div>
<div style="left:2804px;top:1270px;width:196px;height:16px;background:#00bfaf;"></div>
<div style="left:3004px;top:1270px;width:148px;height:16px;background:#383838;"></div>
<div style="left:3156px;top:1270px;width:230px;height:16px;background:#383838;"></div>
<div style="left:2804px;top:1270px;width:600px;height:16px;overflow:hidden;position:absolute">
<div class="t" style="left:47px;top:4.300px;font-size:20px;line-height:26px;font-weight:700;color:rgba(0,0,0,.78)">22 16_MJ_TH</div>
<div style="position:absolute;left:204px;top:4px;width:140px;height:26px;background:#373737;border:2px solid #131313;box-sizing:border-box"></div>
<div style="position:absolute;left:358px;top:4px;width:92px;height:26px;background:#f79a1e;border:2px solid #131313;box-sizing:border-box"></div>
<div class="t" style="left:204px;width:400px;text-align:center;top:4px;font-size:21px;line-height:27px;font-weight:700;color:#101010">22</div>
<div style="position:absolute;left:458px;top:4px;width:42px;height:26px;background:#444;border:2px solid #131313;box-sizing:border-box"></div>
<div class="t" style="left:279px;width:400px;text-align:center;top:4px;font-size:20px;line-height:26px;color:#d0d0d0">S</div>
<div style="position:absolute;left:508px;top:4px;width:42px;height:26px;background:#444;border:2px solid #131313;box-sizing:border-box"></div>
<svg width="600" height="16" style="position:absolute;left:0;top:0"><circle cx="19" cy="17" r="12" fill="none" stroke="rgba(0,0,0,.72)" stroke-width="2"/><path d="M15.300 10.500v13l10.500-6.500z" fill="rgba(0,0,0,.72)"/><circle cx="529" cy="17" r="6.800" fill="#7c7c7c"/></svg>
</div>
<div style="left:3366.5px;top:1272px;width:5.7px;height:14px;background:#070707;"></div>
<div style="left:3374.5px;top:1272px;width:6px;height:14px;background:#070707;"></div>
<div style="left:3366.5px;top:1275px;width:5.7px;height:1.5px;background:#383838;"></div>
<div style="left:3374.5px;top:1275px;width:6px;height:1.5px;background:#383838;"></div>
<div style="left:2804px;top:1292px;width:196px;height:34px;background:#5480e4;"></div>
<div class="t" style="top:1296.3px;font-size:20px;line-height:26px;color:rgba(0,0,0,0.780);font-weight:700;left:2851px;">A Reverb</div>
<div style="left:3004px;top:1292px;width:148px;height:34px;background:#383838;"></div>
<div style="left:3156px;top:1292px;width:230px;height:34px;background:#383838;"></div>
<div style="left:3008px;top:1296px;width:140px;height:26px;background:#373737;border:2px solid #131313;box-sizing:border-box;"></div>
<div style="left:3162px;top:1296px;width:92px;height:26px;background:#f79a1e;border:2px solid #131313;box-sizing:border-box;"></div>
<div class="t" style="top:1295.8px;font-size:21px;line-height:27px;color:#101010;font-weight:700;left:3008px;width:400px;text-align:center;">A</div>
<div style="left:3366.5px;top:1294px;width:5.7px;height:32px;background:#070707;"></div>
<div style="left:3374.5px;top:1294px;width:6px;height:32px;background:#070707;"></div>
<div style="left:3366.5px;top:1297px;width:5.7px;height:1.5px;background:#383838;"></div>
<div style="left:3374.5px;top:1297px;width:6px;height:1.5px;background:#383838;"></div>
<div style="left:3262.5px;top:1296px;width:33px;height:26px;background:#444;border:2px solid #131313;box-sizing:border-box;"></div>
<div class="t" style="top:1296.3px;font-size:20px;line-height:26px;color:#d0d0d0;-webkit-text-stroke:.5px;letter-spacing:.45px;left:3079px;width:400px;text-align:center;">S</div>
<div style="left:3304px;top:1296px;width:50px;height:26px;background:#f79a1e;border:2px solid #131313;box-sizing:border-box;"></div>
<div class="t" style="top:1296.3px;font-size:20px;line-height:26px;color:#101010;-webkit-text-stroke:.5px;letter-spacing:.45px;left:3129px;width:400px;text-align:center;">Post</div>
<div style="left:2804px;top:1330px;width:196px;height:34px;background:#e553a0;"></div>
<div class="t" style="top:1334.3px;font-size:20px;line-height:26px;color:rgba(0,0,0,0.780);font-weight:700;left:2851px;">B Delay</div>
<div style="left:3004px;top:1330px;width:148px;height:34px;background:#383838;"></div>
<div style="left:3156px;top:1330px;width:230px;height:34px;background:#383838;"></div>
<div style="left:3008px;top:1334px;width:140px;height:26px;background:#373737;border:2px solid #131313;box-sizing:border-box;"></div>
<div style="left:3162px;top:1334px;width:92px;height:26px;background:#f79a1e;border:2px solid #131313;box-sizing:border-box;"></div>
<div class="t" style="top:1333.8px;font-size:21px;line-height:27px;color:#101010;font-weight:700;left:3008px;width:400px;text-align:center;">B</div>
<div style="left:3366.5px;top:1332px;width:5.7px;height:32px;background:#070707;"></div>
<div style="left:3374.5px;top:1332px;width:6px;height:32px;background:#070707;"></div>
<div style="left:3366.5px;top:1335px;width:5.7px;height:1.5px;background:#383838;"></div>
<div style="left:3374.5px;top:1335px;width:6px;height:1.5px;background:#383838;"></div>
<div style="left:3262.5px;top:1334px;width:33px;height:26px;background:#444;border:2px solid #131313;box-sizing:border-box;"></div>
<div class="t" style="top:1334.3px;font-size:20px;line-height:26px;color:#d0d0d0;-webkit-text-stroke:.5px;letter-spacing:.45px;left:3079px;width:400px;text-align:center;">S</div>
<div style="left:3304px;top:1334px;width:50px;height:26px;background:#f79a1e;border:2px solid #131313;box-sizing:border-box;"></div>
<div class="t" style="top:1334.3px;font-size:20px;line-height:26px;color:#101010;-webkit-text-stroke:.5px;letter-spacing:.45px;left:3129px;width:400px;text-align:center;">Post</div>
<div style="left:2804px;top:1368px;width:196px;height:34px;background:#92a7ff;"></div>
<div class="t" style="top:1372.3px;font-size:20px;line-height:26px;color:rgba(0,0,0,.78);font-weight:700;left:2855px;">Master</div>
<div style="left:3004px;top:1368px;width:148px;height:34px;background:#383838;"></div>
<div style="left:3156px;top:1368px;width:230px;height:34px;background:#383838;"></div>
<div style="left:3008px;top:1372px;width:140px;height:26px;background:#1c1c1c;border:2px solid #0e0e0e;box-sizing:border-box;"></div>
<div style="left:3012px;top:1376px;width:3.5px;height:18px;background:repeating-linear-gradient(180deg,#050505 0,#050505 3px,transparent 3px,transparent 5px);"></div>
<div style="left:3017px;top:1376px;width:3.5px;height:18px;background:repeating-linear-gradient(180deg,#050505 0,#050505 3px,transparent 3px,transparent 5px);"></div>
<div class="t" style="top:1372.8px;font-size:19.5px;line-height:25px;color:#dedede;-webkit-text-stroke:.5px;letter-spacing:.45px;left:3032px;max-width:102px;overflow:hidden;">1/2</div>
<div style="left:3162px;top:1372px;width:92px;height:26px;background:#1c1c1c;border:2px solid #0e0e0e;box-sizing:border-box;"></div>
<div style="left:3164px;top:1374px;width:74px;height:22px;background:#1f7389;"></div>
<div class="t" style="top:1371.8px;font-size:21px;line-height:27px;color:#dadada;-webkit-text-stroke:.5px;letter-spacing:.45px;left:3008px;width:400px;text-align:center;">0</div>
<div style="left:3262.5px;top:1372px;width:91px;height:26px;background:#1c1c1c;border:2px solid #0e0e0e;box-sizing:border-box;"></div>
<div style="left:3264.5px;top:1374px;width:74px;height:22px;background:#2a7fdb;"></div>
<div class="t" style="top:1371.8px;font-size:21px;line-height:27px;color:#dadada;-webkit-text-stroke:.5px;letter-spacing:.45px;left:3108px;width:400px;text-align:center;">0</div>
<div style="left:3366.5px;top:1370px;width:5.7px;height:32px;background:#070707;"></div>
<div style="left:3374.5px;top:1370px;width:6px;height:32px;background:#070707;"></div>
<div style="left:3366.5px;top:1373px;width:5.7px;height:1.5px;background:#383838;"></div>
<div style="left:3374.5px;top:1373px;width:6px;height:1.5px;background:#383838;"></div>
<div style="left:16px;top:1452px;width:3424px;height:392px;background:#1c1c1c;border-radius:9px;"></div>
<div style="left:28.5px;top:1609px;width:5px;height:77px;background:repeating-linear-gradient(180deg,#0e0e0e 0,#0e0e0e 4px,transparent 4px,transparent 6.400px);border-radius:2px;"></div>
<div style="left:46px;top:1460px;width:482px;height:376px;background:#3a3a3a;border-radius:7px;"></div>
<div style="left:46px;top:1460px;width:482px;height:34px;background:#4b4b4b;border-radius:7px 7px 0 0;"></div>
<div class="t" style="top:1464.3px;font-size:20px;line-height:26px;color:#dcdcdc;font-weight:700;left:150px;">Serum</div>
<div class="t" style="top:1464.3px;font-size:20px;line-height:26px;color:#dcdcdc;-webkit-text-stroke:.5px;letter-spacing:.45px;left:330px;">MPE</div>
<div style="left:382px;top:1464px;width:104px;height:26px;background:#4b4b4b;border:2px solid #101010;box-sizing:border-box;"></div>
<div class="t" style="top:1464.3px;font-size:20px;line-height:26px;color:#dcdcdc;-webkit-text-stroke:.5px;letter-spacing:.45px;left:234px;width:400px;text-align:center;">Configure</div>
<div style="left:124px;top:1504px;width:212px;height:26px;background:#393939;border:2px solid #101010;box-sizing:border-box;"></div>
<div class="t" style="top:1503.8px;font-size:20px;line-height:26px;color:#dcdcdc;-webkit-text-stroke:.5px;letter-spacing:.45px;left:129px;">BS 005 MJ Burning</div>
<div class="t" style="top:1505.8px;font-size:20px;line-height:26px;color:#dcdcdc;-webkit-text-stroke:.5px;letter-spacing:.45px;left:236px;width:400px;text-align:center;">PHASE</div>
<div style="left:360px;top:1532px;width:148px;height:3px;background:#141414;"></div>
<div class="t" style="top:1556.3px;font-size:20px;line-height:26px;color:#dcdcdc;-webkit-text-stroke:.5px;letter-spacing:.45px;left:239px;width:400px;text-align:center;">0 %</div>
<div style="left:56px;top:1540px;width:280px;height:250px;background:#050505;border-radius:5px;"></div>
<div style="left:56px;top:1800px;width:136px;height:26px;background:#1c1c1c;border:2px solid #0e0e0e;box-sizing:border-box;"></div>
<div class="t" style="top:1800.8px;font-size:19.5px;line-height:25px;color:#dcdcdc;-webkit-text-stroke:.5px;letter-spacing:.45px;left:61px;">none</div>
<div style="left:200px;top:1800px;width:136px;height:26px;background:#1c1c1c;border:2px solid #0e0e0e;box-sizing:border-box;"></div>
<div class="t" style="top:1800.8px;font-size:19.5px;line-height:25px;color:#dcdcdc;-webkit-text-stroke:.5px;letter-spacing:.45px;left:205px;">none</div>
<div style="left:534.9px;top:1608px;width:3.8px;height:80px;background:#121212;"></div>
<div style="left:540.7px;top:1608px;width:3.8px;height:80px;background:#121212;"></div>
<div style="left:534.9px;top:1616px;width:3.8px;height:1.6px;background:#333;"></div>
<div style="left:540.7px;top:1616px;width:3.8px;height:1.6px;background:#333;"></div>
<div style="left:550px;top:1460px;width:1080px;height:376px;background:#3a3a3a;border-radius:7px;"></div>
<div style="left:550px;top:1460px;width:1080px;height:34px;background:#4b4b4b;border-radius:7px 7px 0 0;"></div>
<div class="t" style="top:1464.3px;font-size:20px;line-height:26px;color:#dcdcdc;font-weight:700;left:622px;">Compressor</div>
<div style="left:576px;top:1504px;width:116px;height:26px;background:#f79a1e;border:2px solid #101010;box-sizing:border-box;"></div>
<div class="t" style="top:1504.3px;font-size:20px;line-height:26px;color:#111;-webkit-text-stroke:.5px;letter-spacing:.45px;left:434px;width:400px;text-align:center;">Sidechain</div>
<div style="left:740px;top:1504px;width:112px;height:26px;background:#f79a1e;border:2px solid #101010;box-sizing:border-box;"></div>
<div class="t" style="top:1504.3px;font-size:20px;line-height:26px;color:#111;-webkit-text-stroke:.5px;letter-spacing:.45px;left:596px;width:400px;text-align:center;">EQ</div>
<div class="t" style="top:1536.3px;font-size:20px;line-height:26px;color:#dcdcdc;-webkit-text-stroke:.5px;letter-spacing:.45px;left:562px;">Audio From</div>
<div style="left:560px;top:1562px;width:146px;height:26px;background:#1c1c1c;border:2px solid #0e0e0e;box-sizing:border-box;"></div>
<div class="t" style="top:1562.3px;font-size:20px;line-height:26px;color:#dcdcdc;-webkit-text-stroke:.5px;letter-spacing:.45px;left:565px;">Ghost Kick</div>
<div style="left:560px;top:1594px;width:146px;height:26px;background:#1c1c1c;border:2px solid #0e0e0e;box-sizing:border-box;"></div>
<div style="left:564px;top:1598px;width:3.5px;height:18px;background:repeating-linear-gradient(180deg,#050505 0,#050505 3px,transparent 3px,transparent 5px);"></div>
<div style="left:569px;top:1598px;width:3.5px;height:18px;background:repeating-linear-gradient(180deg,#050505 0,#050505 3px,transparent 3px,transparent 5px);"></div>
<div class="t" style="top:1594.3px;font-size:20px;line-height:26px;color:#dcdcdc;-webkit-text-stroke:.5px;letter-spacing:.45px;left:582px;">Post FX</div>
<div style="left:716.3px;top:1543px;width:1.8px;height:283px;background:#191919;"></div>
<div class="t" style="top:1536.3px;font-size:20px;line-height:26px;color:#dcdcdc;-webkit-text-stroke:.5px;letter-spacing:.45px;left:728px;">Filter Type</div>
<div style="left:728px;top:1563px;width:41.5px;height:24px;background:#444;border:2px solid #0e0e0e;box-sizing:border-box;"></div>
<div style="left:728px;top:1595px;width:41.5px;height:24px;background:#444;border:2px solid #0e0e0e;box-sizing:border-box;"></div>
<div style="left:776px;top:1563px;width:42px;height:24px;background:#444;border:2px solid #0e0e0e;box-sizing:border-box;"></div>
<div style="left:776px;top:1595px;width:42px;height:24px;background:#444;border:2px solid #0e0e0e;box-sizing:border-box;"></div>
<div style="left:824px;top:1563px;width:42px;height:24px;background:#444;border:2px solid #0e0e0e;box-sizing:border-box;"></div>
<div style="left:824px;top:1595px;width:42px;height:24px;background:#f79a1e;border:2px solid #0e0e0e;box-sizing:border-box;"></div>
<div class="t" style="top:1630.3px;font-size:20px;line-height:26px;color:#dcdcdc;-webkit-text-stroke:.5px;letter-spacing:.45px;left:432px;width:400px;text-align:center;">Gain</div>
<div class="t" style="top:1702.3px;font-size:20px;line-height:26px;color:#dcdcdc;-webkit-text-stroke:.5px;letter-spacing:.45px;left:432px;width:400px;text-align:center;">10.7 dB</div>
<div class="t" style="top:1730.3px;font-size:20px;line-height:26px;color:#dcdcdc;-webkit-text-stroke:.5px;letter-spacing:.45px;left:433px;width:400px;text-align:center;">Mix</div>
<div class="t" style="top:1802.3px;font-size:20px;line-height:26px;color:#dcdcdc;-webkit-text-stroke:.5px;letter-spacing:.45px;left:433px;width:400px;text-align:center;">100 %</div>
<div class="t" style="top:1630.3px;font-size:20px;line-height:26px;color:#dcdcdc;-webkit-text-stroke:.5px;letter-spacing:.45px;left:596px;width:400px;text-align:center;">Freq</div>
<div class="t" style="top:1702.3px;font-size:20px;line-height:26px;color:#dcdcdc;-webkit-text-stroke:.5px;letter-spacing:.45px;left:596px;width:400px;text-align:center;">80.0 Hz</div>
<div class="t" style="top:1730.3px;font-size:20px;line-height:26px;color:#dcdcdc;-webkit-text-stroke:.5px;letter-spacing:.45px;left:597px;width:400px;text-align:center;">Q</div>
<div class="t" style="top:1802.3px;font-size:20px;line-height:26px;color:#dcdcdc;-webkit-text-stroke:.5px;letter-spacing:.45px;left:597px;width:400px;text-align:center;">0.71</div>
<div style="left:880.3px;top:1503px;width:1.8px;height:323px;background:#191919;"></div>
<div class="t" style="top:1500.3px;font-size:20px;line-height:26px;color:#dcdcdc;-webkit-text-stroke:.5px;letter-spacing:.45px;left:741px;width:400px;text-align:center;">Ratio</div>
<div class="t" style="top:1572.3px;font-size:20px;line-height:26px;color:#dcdcdc;-webkit-text-stroke:.5px;letter-spacing:.45px;left:741px;width:400px;text-align:center;">4.67 : 1</div>
<div class="t" style="top:1596.3px;font-size:20px;line-height:26px;color:#dcdcdc;-webkit-text-stroke:.5px;letter-spacing:.45px;left:743px;width:400px;text-align:center;">Attack</div>
<div class="t" style="top:1668.3px;font-size:20px;line-height:26px;color:#dcdcdc;-webkit-text-stroke:.5px;letter-spacing:.45px;left:741px;width:400px;text-align:center;">0.02 ms</div>
<div class="t" style="top:1696.3px;font-size:20px;line-height:26px;color:#dcdcdc;-webkit-text-stroke:.5px;letter-spacing:.45px;left:741px;width:400px;text-align:center;">Release</div>
<div class="t" style="top:1768.3px;font-size:20px;line-height:26px;color:#dcdcdc;-webkit-text-stroke:.5px;letter-spacing:.45px;left:742px;width:400px;text-align:center;">164 ms</div>
<div style="left:898px;top:1800px;width:86px;height:26px;background:#444;border:2px solid #0e0e0e;box-sizing:border-box;"></div>
<div class="t" style="top:1800.3px;font-size:20px;line-height:26px;color:#dcdcdc;-webkit-text-stroke:.5px;letter-spacing:.45px;left:741px;width:400px;text-align:center;">Auto</div>
<div style="left:996px;top:1502px;width:524px;height:326px;background:#050505;border-radius:6px;"></div>
<div style="left:996px;top:1540px;width:524px;height:1.8px;background:#3a3a3a;"></div>
<div style="left:996px;top:1789px;width:524px;height:1.8px;background:#3a3a3a;"></div>
<div style="left:996px;top:1578.3px;width:524px;height:2px;background:#e39326;"></div>
<div style="left:996px;top:1665.5px;width:524px;height:3px;background:#35bfe0;"></div>
<div class="t" style="top:1507.8px;font-size:20px;line-height:26px;color:#9a9a9a;-webkit-text-stroke:.5px;letter-spacing:.45px;left:1008px;">Thresh</div>
<div class="t" style="top:1507.8px;font-size:20px;line-height:26px;color:#35bfe0;-webkit-text-stroke:.5px;letter-spacing:.45px;left:1082px;">-14.2 dB</div>
<div style="left:1200px;top:1513.5px;width:14px;height:14px;background:#35bfe0;"></div>
<div class="t" style="top:1507.8px;font-size:20px;line-height:26px;color:#9a9a9a;-webkit-text-stroke:.5px;letter-spacing:.45px;left:1222px;">GR</div>
<div style="left:1262px;top:1513.5px;width:14px;height:14px;border:2px solid #35bfe0;box-sizing:border-box;"></div>
<div class="t" style="top:1507.8px;font-size:20px;line-height:26px;color:#9a9a9a;-webkit-text-stroke:.5px;letter-spacing:.45px;left:1283px;">Output</div>
<div class="t" style="top:1507.8px;font-size:20px;line-height:26px;color:#9a9a9a;-webkit-text-stroke:.5px;letter-spacing:.45px;left:1380px;">Out</div>
<div class="t" style="top:1507.8px;font-size:20px;line-height:26px;color:#35bfe0;-webkit-text-stroke:.5px;letter-spacing:.45px;left:1424px;">0.00 dB</div>
<div class="t" style="top:1754.3px;font-size:20px;line-height:26px;color:#f7961e;-webkit-text-stroke:.5px;letter-spacing:.45px;left:1093px;width:400px;text-align:right;">0.00 dB</div>
<div style="left:1035.5px;top:1791px;width:1.8px;height:37px;background:#3a3a3a;"></div>
<div style="left:1075.5px;top:1791px;width:1.8px;height:37px;background:#3a3a3a;"></div>
<div style="left:1115.5px;top:1791px;width:1.8px;height:37px;background:#3a3a3a;"></div>
<div class="t" style="top:1796.3px;font-size:20px;line-height:26px;color:#9a9a9a;-webkit-text-stroke:.5px;letter-spacing:.45px;left:1126px;">Knee</div>
<div class="t" style="top:1796.3px;font-size:20px;line-height:26px;color:#35bfe0;-webkit-text-stroke:.5px;letter-spacing:.45px;left:1182px;">6.0 dB</div>
<div class="t" style="top:1796.3px;font-size:20px;line-height:26px;color:#9a9a9a;-webkit-text-stroke:.5px;letter-spacing:.45px;left:1258px;">Look.</div>
<div class="t" style="top:1796.3px;font-size:20px;line-height:26px;color:#35bfe0;-webkit-text-stroke:.5px;letter-spacing:.45px;left:1319px;">0 ms</div>
<div class="t" style="top:1796.3px;font-size:20px;line-height:26px;color:#9a9a9a;-webkit-text-stroke:.5px;letter-spacing:.45px;left:1408px;">Env.</div>
<div style="left:1454px;top:1798px;width:50px;height:22px;background:#35bfe0;"></div>
<div class="t" style="top:1796.3px;font-size:20px;line-height:26px;color:#111;-webkit-text-stroke:.5px;letter-spacing:.45px;left:1279px;width:400px;text-align:center;">Log</div>
<div style="left:1532px;top:1504px;width:88px;height:26px;background:#3f3f3f;border:2px solid #202020;box-sizing:border-box;"></div>
<div class="t" style="top:1504.3px;font-size:20px;line-height:26px;color:#7c7c7c;-webkit-text-stroke:.5px;letter-spacing:.45px;left:1376px;width:400px;text-align:center;">Makeup</div>
<div style="left:1532px;top:1587px;width:86px;height:24px;background:#444;border:2px solid #0e0e0e;box-sizing:border-box;"></div>
<div class="t" style="top:1586.3px;font-size:20px;line-height:26px;color:#dcdcdc;-webkit-text-stroke:.5px;letter-spacing:.45px;left:1375px;width:400px;text-align:center;">Peak</div>
<div style="left:1532px;top:1619px;width:86px;height:24px;background:#f79a1e;border:2px solid #0e0e0e;box-sizing:border-box;"></div>
<div class="t" style="top:1618.3px;font-size:20px;line-height:26px;color:#111;-webkit-text-stroke:.5px;letter-spacing:.45px;left:1375px;width:400px;text-align:center;">RMS</div>
<div style="left:1532px;top:1651px;width:86px;height:24px;background:#444;border:2px solid #0e0e0e;box-sizing:border-box;"></div>
<div class="t" style="top:1650.3px;font-size:20px;line-height:26px;color:#dcdcdc;-webkit-text-stroke:.5px;letter-spacing:.45px;left:1375px;width:400px;text-align:center;">Expand</div>
<div class="t" style="top:1728.3px;font-size:20px;line-height:26px;color:#dcdcdc;-webkit-text-stroke:.5px;letter-spacing:.45px;left:1377px;width:400px;text-align:center;">Dry/Wet</div>
<div class="t" style="top:1800.3px;font-size:20px;line-height:26px;color:#dcdcdc;-webkit-text-stroke:.5px;letter-spacing:.45px;left:1377px;width:400px;text-align:center;">100 %</div>
<div style="left:1636.4px;top:1608px;width:3.8px;height:80px;background:#121212;"></div>
<div style="left:1642.2px;top:1608px;width:3.8px;height:80px;background:#121212;"></div>
<div style="left:1636.4px;top:1616px;width:3.8px;height:1.6px;background:#333;"></div>
<div style="left:1642.2px;top:1616px;width:3.8px;height:1.6px;background:#333;"></div>
<div style="left:1652px;top:1460px;width:804px;height:376px;background:#3a3a3a;border-radius:7px;"></div>
<div style="left:1652px;top:1460px;width:804px;height:34px;background:#4b4b4b;border-radius:7px 7px 0 0;"></div>
<div class="t" style="top:1464.3px;font-size:20px;line-height:26px;color:#dcdcdc;font-weight:700;left:1724px;">Auto Filter</div>
<div class="t" style="top:1500.3px;font-size:20px;line-height:26px;color:#dcdcdc;font-weight:700;left:1662px;">Envelope</div>
<div class="t" style="top:1600.3px;font-size:20px;line-height:26px;color:#dcdcdc;-webkit-text-stroke:.5px;letter-spacing:.45px;left:1506.5px;width:400px;text-align:center;">0.00</div>
<div class="t" style="top:1628.3px;font-size:20px;line-height:26px;color:#dcdcdc;-webkit-text-stroke:.5px;letter-spacing:.45px;left:1507px;width:400px;text-align:center;">Attack</div>
<div class="t" style="top:1700.3px;font-size:20px;line-height:26px;color:#dcdcdc;-webkit-text-stroke:.5px;letter-spacing:.45px;left:1507px;width:400px;text-align:center;">6.00 ms</div>
<div class="t" style="top:1728.3px;font-size:20px;line-height:26px;color:#dcdcdc;-webkit-text-stroke:.5px;letter-spacing:.45px;left:1507px;width:400px;text-align:center;">Release</div>
<div class="t" style="top:1800.3px;font-size:20px;line-height:26px;color:#dcdcdc;-webkit-text-stroke:.5px;letter-spacing:.45px;left:1506px;width:400px;text-align:center;">200 ms</div>
<div style="left:1760.3px;top:1503px;width:1.8px;height:323px;background:#191919;"></div>
<div style="left:1772px;top:1504px;width:400px;height:214px;background:#050505;border-radius:6px;"></div>
<div class="t" style="top:1694.8px;font-size:19px;line-height:25px;color:#8a8a8a;-webkit-text-stroke:.5px;letter-spacing:.45px;left:1652px;width:400px;text-align:center;">100</div>
<div class="t" style="top:1694.8px;font-size:19px;line-height:25px;color:#8a8a8a;-webkit-text-stroke:.5px;letter-spacing:.45px;left:1789px;width:400px;text-align:center;">1k</div>
<div class="t" style="top:1694.8px;font-size:19px;line-height:25px;color:#8a8a8a;-webkit-text-stroke:.5px;letter-spacing:.45px;left:1927px;width:400px;text-align:center;">10k</div>
<div style="left:1772px;top:1727px;width:38px;height:25px;background:#f79a1e;border:2px solid #0e0e0e;box-sizing:border-box;"></div>
<div style="left:1816px;top:1727px;width:38px;height:25px;background:#444;border:2px solid #0e0e0e;box-sizing:border-box;"></div>
<div style="left:1860px;top:1727px;width:38px;height:25px;background:#444;border:2px solid #0e0e0e;box-sizing:border-box;"></div>
<div style="left:1904px;top:1727px;width:38px;height:25px;background:#444;border:2px solid #0e0e0e;box-sizing:border-box;"></div>
<div style="left:1948px;top:1727px;width:38px;height:25px;background:#444;border:2px solid #0e0e0e;box-sizing:border-box;"></div>
<div style="left:1996px;top:1727px;width:84px;height:25px;background:#1c1c1c;border:2px solid #0e0e0e;box-sizing:border-box;"></div>
<div class="t" style="top:1726.8px;font-size:20px;line-height:26px;color:#dcdcdc;-webkit-text-stroke:.5px;letter-spacing:.45px;left:2001px;">Clean</div>
<div style="left:2090px;top:1727px;width:38px;height:25px;background:#444;border:2px solid #0e0e0e;box-sizing:border-box;"></div>
<div class="t" style="top:1726.8px;font-size:20px;line-height:26px;color:#dcdcdc;-webkit-text-stroke:.5px;letter-spacing:.45px;left:1909px;width:400px;text-align:center;">12</div>
<div style="left:2134px;top:1727px;width:38px;height:25px;background:#f79a1e;border:2px solid #0e0e0e;box-sizing:border-box;"></div>
<div class="t" style="top:1726.8px;font-size:20px;line-height:26px;color:#111;-webkit-text-stroke:.5px;letter-spacing:.45px;left:1953px;width:400px;text-align:center;">24</div>
<div style="left:1772px;top:1768px;width:120px;height:26px;background:#444;border:2px solid #0e0e0e;box-sizing:border-box;"></div>
<div class="t" style="top:1768.3px;font-size:20px;line-height:26px;color:#dcdcdc;-webkit-text-stroke:.5px;letter-spacing:.45px;left:1632px;width:400px;text-align:center;">Quantize</div>
<div style="left:1898px;top:1768px;width:50px;height:26px;background:#444;border:2px solid #0e0e0e;box-sizing:border-box;"></div>
<div class="t" style="top:1768.3px;font-size:20px;line-height:26px;color:#7c7c7c;-webkit-text-stroke:.5px;letter-spacing:.45px;left:1723px;width:400px;text-align:center;">0.5</div>
<div style="left:1954px;top:1768px;width:50px;height:26px;background:#444;border:2px solid #0e0e0e;box-sizing:border-box;"></div>
<div class="t" style="top:1768.3px;font-size:20px;line-height:26px;color:#7c7c7c;-webkit-text-stroke:.5px;letter-spacing:.45px;left:1779px;width:400px;text-align:center;">1</div>
<div style="left:2010px;top:1768px;width:50px;height:26px;background:#858585;border:2px solid #0e0e0e;box-sizing:border-box;"></div>
<div class="t" style="top:1768.3px;font-size:20px;line-height:26px;color:#111;-webkit-text-stroke:.5px;letter-spacing:.45px;left:1835px;width:400px;text-align:center;">2</div>
<div style="left:2066px;top:1768px;width:50px;height:26px;background:#444;border:2px solid #0e0e0e;box-sizing:border-box;"></div>
<div class="t" style="top:1768.3px;font-size:20px;line-height:26px;color:#7c7c7c;-webkit-text-stroke:.5px;letter-spacing:.45px;left:1891px;width:400px;text-align:center;">3</div>
<div style="left:2122px;top:1768px;width:50px;height:26px;background:#444;border:2px solid #0e0e0e;box-sizing:border-box;"></div>
<div class="t" style="top:1768.3px;font-size:20px;line-height:26px;color:#7c7c7c;-webkit-text-stroke:.5px;letter-spacing:.45px;left:1947px;width:400px;text-align:center;">4</div>
<div style="left:1898px;top:1800px;width:50px;height:26px;background:#444;border:2px solid #0e0e0e;box-sizing:border-box;"></div>
<div class="t" style="top:1800.3px;font-size:20px;line-height:26px;color:#7c7c7c;-webkit-text-stroke:.5px;letter-spacing:.45px;left:1723px;width:400px;text-align:center;">5</div>
<div style="left:1954px;top:1800px;width:50px;height:26px;background:#444;border:2px solid #0e0e0e;box-sizing:border-box;"></div>
<div class="t" style="top:1800.3px;font-size:20px;line-height:26px;color:#7c7c7c;-webkit-text-stroke:.5px;letter-spacing:.45px;left:1779px;width:400px;text-align:center;">6</div>
<div style="left:2010px;top:1800px;width:50px;height:26px;background:#444;border:2px solid #0e0e0e;box-sizing:border-box;"></div>
<div class="t" style="top:1800.3px;font-size:20px;line-height:26px;color:#7c7c7c;-webkit-text-stroke:.5px;letter-spacing:.45px;left:1835px;width:400px;text-align:center;">8</div>
<div style="left:2066px;top:1800px;width:50px;height:26px;background:#444;border:2px solid #0e0e0e;box-sizing:border-box;"></div>
<div class="t" style="top:1800.3px;font-size:20px;line-height:26px;color:#7c7c7c;-webkit-text-stroke:.5px;letter-spacing:.45px;left:1891px;width:400px;text-align:center;">12</div>
<div style="left:2122px;top:1800px;width:50px;height:26px;background:#444;border:2px solid #0e0e0e;box-sizing:border-box;"></div>
<div class="t" style="top:1800.3px;font-size:20px;line-height:26px;color:#7c7c7c;-webkit-text-stroke:.5px;letter-spacing:.45px;left:1947px;width:400px;text-align:center;">16</div>
<div class="t" style="top:1500.3px;font-size:20px;line-height:26px;color:#dcdcdc;font-weight:700;left:2030.5px;width:400px;text-align:center;">Filter</div>
<div class="t" style="top:1526.3px;font-size:20px;line-height:26px;color:#dcdcdc;-webkit-text-stroke:.5px;letter-spacing:.45px;left:2030px;width:400px;text-align:center;">Freq</div>
<div class="t" style="top:1598.3px;font-size:20px;line-height:26px;color:#dcdcdc;-webkit-text-stroke:.5px;letter-spacing:.45px;left:2030.5px;width:400px;text-align:center;">682 Hz</div>
<div class="t" style="top:1626.3px;font-size:20px;line-height:26px;color:#dcdcdc;-webkit-text-stroke:.5px;letter-spacing:.45px;left:2031px;width:400px;text-align:center;">Res</div>
<div class="t" style="top:1698.3px;font-size:20px;line-height:26px;color:#dcdcdc;-webkit-text-stroke:.5px;letter-spacing:.45px;left:2030.5px;width:400px;text-align:center;">17 %</div>
<div style="left:2286.3px;top:1503px;width:1.8px;height:323px;background:#191919;"></div>
<div class="t" style="top:1500.3px;font-size:20px;line-height:26px;color:#dcdcdc;font-weight:700;left:2298px;">LFO / S&amp;H</div>
<div class="t" style="top:1528.3px;font-size:20px;line-height:26px;color:#dcdcdc;-webkit-text-stroke:.5px;letter-spacing:.45px;left:2138px;width:400px;text-align:center;">Amount</div>
<div class="t" style="top:1528.3px;font-size:20px;line-height:26px;color:#dcdcdc;-webkit-text-stroke:.5px;letter-spacing:.45px;left:2219.5px;width:400px;text-align:center;">Shape</div>
<div class="t" style="top:1600.3px;font-size:20px;line-height:26px;color:#dcdcdc;-webkit-text-stroke:.5px;letter-spacing:.45px;left:2138px;width:400px;text-align:center;">0.00</div>
<div class="t" style="top:1628.3px;font-size:20px;line-height:26px;color:#dcdcdc;-webkit-text-stroke:.5px;letter-spacing:.45px;left:2138px;width:400px;text-align:center;">Rate</div>
<div class="t" style="top:1700.3px;font-size:20px;line-height:26px;color:#dcdcdc;-webkit-text-stroke:.5px;letter-spacing:.45px;left:2137px;width:400px;text-align:center;">0.11 Hz</div>
<div class="t" style="top:1728.3px;font-size:20px;line-height:26px;color:#dcdcdc;-webkit-text-stroke:.5px;letter-spacing:.45px;left:2139px;width:400px;text-align:center;">Phase</div>
<div class="t" style="top:1800.3px;font-size:20px;line-height:26px;color:#dcdcdc;-webkit-text-stroke:.5px;letter-spacing:.45px;left:2138px;width:400px;text-align:center;">0.00°</div>
<div style="left:2390px;top:1558px;width:58px;height:26px;background:#1c1c1c;border:2px solid #0e0e0e;box-sizing:border-box;"></div>
<div style="left:2411px;top:1653px;width:36px;height:24px;background:#f79a1e;border:2px solid #0e0e0e;box-sizing:border-box;"></div>
<div class="t" style="top:1652.3px;font-size:20px;line-height:26px;color:#111;-webkit-text-stroke:.5px;letter-spacing:.45px;left:2229px;width:400px;text-align:center;">Hz</div>
<div style="left:2411px;top:1685px;width:36px;height:24px;background:#444;border:2px solid #0e0e0e;box-sizing:border-box;"></div>
<div style="left:2411px;top:1753px;width:36px;height:24px;background:#f79a1e;border:2px solid #0e0e0e;box-sizing:border-box;"></div>
<div style="left:2411px;top:1785px;width:36px;height:24px;background:#444;border:2px solid #0e0e0e;box-sizing:border-box;"></div>
<div style="left:2378px;top:1680px;width:22px;height:1.8px;background:#262626;"></div>
<div style="left:2378px;top:1780px;width:22px;height:1.8px;background:#262626;"></div>
<div style="left:2461.9px;top:1608px;width:3.8px;height:80px;background:#121212;"></div>
<div style="left:2467.7px;top:1608px;width:3.8px;height:80px;background:#121212;"></div>
<div style="left:2461.9px;top:1616px;width:3.8px;height:1.6px;background:#333;"></div>
<div style="left:2467.7px;top:1616px;width:3.8px;height:1.6px;background:#333;"></div>
<div style="left:2478px;top:1460px;width:956px;height:376px;background:#4b4b4b;border-radius:7px 0 0 7px;"></div>
<div style="left:2478px;top:1460px;width:956px;height:34px;background:#4b4b4b;border-radius:7px 0 0 0;"></div>
<div class="t" style="top:1464.3px;font-size:20px;line-height:26px;color:#dcdcdc;font-weight:700;left:2550.5px;">EQ Eight</div>
<div style="left:2482px;top:1495px;width:96px;height:336px;background:#3a3a3a;border-radius:6px;"></div>
<div class="t" style="top:1496.3px;font-size:20px;line-height:26px;color:#dcdcdc;-webkit-text-stroke:.5px;letter-spacing:.45px;left:2329.5px;width:400px;text-align:center;">Freq</div>
<div class="t" style="top:1568.3px;font-size:20px;line-height:26px;color:#dcdcdc;-webkit-text-stroke:.5px;letter-spacing:.45px;left:2329.5px;width:400px;text-align:center;">52.9 Hz</div>
<div class="t" style="top:1604.3px;font-size:20px;line-height:26px;color:#dcdcdc;-webkit-text-stroke:.5px;letter-spacing:.45px;left:2329.5px;width:400px;text-align:center;">Gain</div>
<div class="t" style="top:1688.3px;font-size:20px;line-height:26px;color:#dcdcdc;-webkit-text-stroke:.5px;letter-spacing:.45px;left:2329.5px;width:400px;text-align:center;">0.00 dB</div>
<div class="t" style="top:1728.3px;font-size:20px;line-height:26px;color:#dcdcdc;-webkit-text-stroke:.5px;letter-spacing:.45px;left:2330px;width:400px;text-align:center;">Q</div>
<div class="t" style="top:1800.3px;font-size:20px;line-height:26px;color:#dcdcdc;-webkit-text-stroke:.5px;letter-spacing:.45px;left:2329.5px;width:400px;text-align:center;">0.71</div>
<div style="left:2582px;top:1494px;width:748px;height:268px;background:#050505;border-radius:6px;"></div>
<div class="t" style="top:1508.8px;font-size:19px;line-height:25px;color:#8a8a8a;-webkit-text-stroke:.5px;letter-spacing:.45px;left:2220px;width:400px;text-align:right;">12</div>
<div class="t" style="top:1562.8px;font-size:19px;line-height:25px;color:#8a8a8a;-webkit-text-stroke:.5px;letter-spacing:.45px;left:2220px;width:400px;text-align:right;">6</div>
<div class="t" style="top:1616.8px;font-size:19px;line-height:25px;color:#8a8a8a;-webkit-text-stroke:.5px;letter-spacing:.45px;left:2220px;width:400px;text-align:right;">0</div>
<div class="t" style="top:1668.8px;font-size:19px;line-height:25px;color:#8a8a8a;-webkit-text-stroke:.5px;letter-spacing:.45px;left:2220px;width:400px;text-align:right;">-6</div>
<div class="t" style="top:1722.8px;font-size:19px;line-height:25px;color:#8a8a8a;-webkit-text-stroke:.5px;letter-spacing:.45px;left:2220px;width:400px;text-align:right;">-12</div>
<div class="t" style="top:1738.8px;font-size:19px;line-height:25px;color:#8a8a8a;-webkit-text-stroke:.5px;letter-spacing:.45px;left:2605.5px;width:400px;text-align:center;">100</div>
<div class="t" style="top:1738.8px;font-size:19px;line-height:25px;color:#8a8a8a;-webkit-text-stroke:.5px;letter-spacing:.45px;left:2827px;width:400px;text-align:center;">1k</div>
<div class="t" style="top:1738.8px;font-size:19px;line-height:25px;color:#8a8a8a;-webkit-text-stroke:.5px;letter-spacing:.45px;left:3051px;width:400px;text-align:center;">10k</div>
<div style="left:2582px;top:1766px;width:90px;height:65.5px;background:#4b4b4b;border-radius:6px;"></div>
<div style="left:2590px;top:1772px;width:74px;height:26px;background:#1c1c1c;border:2px solid #0e0e0e;box-sizing:border-box;"></div>
<div style="left:2604px;top:1804.5px;width:22px;height:21px;background:#35bfe0;border:2px solid #0e0e0e;box-sizing:border-box;"></div>
<div class="t" style="top:1802.3px;font-size:20px;line-height:26px;color:#dcdcdc;-webkit-text-stroke:.5px;letter-spacing:.45px;left:2443px;width:400px;text-align:center;">1</div>
<div style="left:2676px;top:1766px;width:90px;height:65.5px;background:#3a3a3a;border-radius:6px;"></div>
<div style="left:2684px;top:1772px;width:74px;height:26px;background:#1c1c1c;border:2px solid #0e0e0e;box-sizing:border-box;"></div>
<div style="left:2698px;top:1804.5px;width:22px;height:21px;background:#35bfe0;border:2px solid #0e0e0e;box-sizing:border-box;"></div>
<div class="t" style="top:1802.3px;font-size:20px;line-height:26px;color:#dcdcdc;-webkit-text-stroke:.5px;letter-spacing:.45px;left:2537px;width:400px;text-align:center;">2</div>
<div style="left:2770px;top:1766px;width:90px;height:65.5px;background:#3a3a3a;border-radius:6px;"></div>
<div style="left:2778px;top:1772px;width:74px;height:26px;background:#1c1c1c;border:2px solid #0e0e0e;box-sizing:border-box;"></div>
<div style="left:2792px;top:1804.5px;width:22px;height:21px;background:#35bfe0;border:2px solid #0e0e0e;box-sizing:border-box;"></div>
<div class="t" style="top:1802.3px;font-size:20px;line-height:26px;color:#dcdcdc;-webkit-text-stroke:.5px;letter-spacing:.45px;left:2631px;width:400px;text-align:center;">3</div>
<div style="left:2864px;top:1766px;width:90px;height:65.5px;background:#3a3a3a;border-radius:6px;"></div>
<div style="left:2872px;top:1772px;width:74px;height:26px;background:#1c1c1c;border:2px solid #0e0e0e;box-sizing:border-box;"></div>
<div style="left:2886px;top:1804.5px;width:22px;height:21px;background:#35bfe0;border:2px solid #0e0e0e;box-sizing:border-box;"></div>
<div class="t" style="top:1802.3px;font-size:20px;line-height:26px;color:#dcdcdc;-webkit-text-stroke:.5px;letter-spacing:.45px;left:2725px;width:400px;text-align:center;">4</div>
<div style="left:2958px;top:1766px;width:90px;height:65.5px;background:#3a3a3a;border-radius:6px;"></div>
<div style="left:2966px;top:1772px;width:74px;height:26px;background:#1c1c1c;border:2px solid #0e0e0e;box-sizing:border-box;"></div>
<div style="left:2980px;top:1804.5px;width:22px;height:21px;background:#3d3d3d;border:2px solid #0e0e0e;box-sizing:border-box;"></div>
<div class="t" style="top:1802.3px;font-size:20px;line-height:26px;color:#dcdcdc;-webkit-text-stroke:.5px;letter-spacing:.45px;left:2819px;width:400px;text-align:center;">5</div>
<div style="left:3052px;top:1766px;width:90px;height:65.5px;background:#3a3a3a;border-radius:6px;"></div>
<div style="left:3060px;top:1772px;width:74px;height:26px;background:#1c1c1c;border:2px solid #0e0e0e;box-sizing:border-box;"></div>
<div style="left:3074px;top:1804.5px;width:22px;height:21px;background:#3d3d3d;border:2px solid #0e0e0e;box-sizing:border-box;"></div>
<div class="t" style="top:1802.3px;font-size:20px;line-height:26px;color:#dcdcdc;-webkit-text-stroke:.5px;letter-spacing:.45px;left:2913px;width:400px;text-align:center;">6</div>
<div style="left:3146px;top:1766px;width:90px;height:65.5px;background:#3a3a3a;border-radius:6px;"></div>
<div style="left:3154px;top:1772px;width:74px;height:26px;background:#1c1c1c;border:2px solid #0e0e0e;box-sizing:border-box;"></div>
<div style="left:3168px;top:1804.5px;width:22px;height:21px;background:#3d3d3d;border:2px solid #0e0e0e;box-sizing:border-box;"></div>
<div class="t" style="top:1802.3px;font-size:20px;line-height:26px;color:#dcdcdc;-webkit-text-stroke:.5px;letter-spacing:.45px;left:3007px;width:400px;text-align:center;">7</div>
<div style="left:3240px;top:1766px;width:90px;height:65.5px;background:#3a3a3a;border-radius:6px;"></div>
<div style="left:3248px;top:1772px;width:74px;height:26px;background:#1c1c1c;border:2px solid #0e0e0e;box-sizing:border-box;"></div>
<div style="left:3262px;top:1804.5px;width:22px;height:21px;background:#3d3d3d;border:2px solid #0e0e0e;box-sizing:border-box;"></div>
<div class="t" style="top:1802.3px;font-size:20px;line-height:26px;color:#dcdcdc;-webkit-text-stroke:.5px;letter-spacing:.45px;left:3101px;width:400px;text-align:center;">8</div>
<div style="left:3334px;top:1495px;width:100px;height:336.5px;background:#3a3a3a;border-radius:6px 0 0 6px;"></div>
<div style="left:3340px;top:1507px;width:41px;height:24px;background:#444;border:2px solid #0e0e0e;box-sizing:border-box;"></div>
<div style="left:3391px;top:1507px;width:41px;height:24px;background:#f79a1e;border:2px solid #0e0e0e;box-sizing:border-box;"></div>
<div class="t" style="top:1536.3px;font-size:20px;line-height:26px;color:#dcdcdc;font-weight:700;left:3340px;">Mode</div>
<div style="left:3340px;top:1563px;width:92px;height:24px;background:#1c1c1c;border:2px solid #0e0e0e;box-sizing:border-box;"></div>
<div class="t" style="top:1562.3px;font-size:20px;line-height:26px;color:#dcdcdc;-webkit-text-stroke:.5px;letter-spacing:.45px;left:3344px;">Stereo</div>
<div class="t" style="top:1592.3px;font-size:20px;line-height:26px;color:#dcdcdc;font-weight:700;left:3340px;">Edit</div>
<div style="left:3340px;top:1619px;width:92px;height:24px;background:#3f3f3f;border:2px solid #262626;box-sizing:border-box;"></div>
<div class="t" style="top:1618.3px;font-size:20px;line-height:26px;color:#6c6c6c;-webkit-text-stroke:.5px;letter-spacing:.45px;left:3186px;width:400px;text-align:center;">A</div>
<div class="t" style="top:1648.3px;font-size:20px;line-height:26px;color:#dcdcdc;font-weight:700;left:3340px;">Adapt. Q</div>
<div style="left:3340px;top:1675px;width:92px;height:24px;background:#f79a1e;border:2px solid #0e0e0e;box-sizing:border-box;"></div>
<div class="t" style="top:1674.3px;font-size:20px;line-height:26px;color:#111;-webkit-text-stroke:.5px;letter-spacing:.45px;left:3186px;width:400px;text-align:center;">On</div>
<div class="t" style="top:1704.3px;font-size:20px;line-height:26px;color:#dcdcdc;font-weight:700;left:3340px;">Scale</div>
<div style="left:3340px;top:1731px;width:92px;height:24px;background:#1c1c1c;border:2px solid #0e0e0e;box-sizing:border-box;"></div>
<div style="left:3342px;top:1733px;width:66px;height:20px;background:#1f7389;"></div>
<div class="t" style="top:1730.3px;font-size:20px;line-height:26px;color:#dcdcdc;-webkit-text-stroke:.5px;letter-spacing:.45px;left:3186px;width:400px;text-align:center;">100 %</div>
<div class="t" style="top:1762.3px;font-size:20px;line-height:26px;color:#dcdcdc;font-weight:700;left:3340px;">Gain</div>
<div style="left:3340px;top:1789px;width:92px;height:24px;background:#1c1c1c;border:2px solid #0e0e0e;box-sizing:border-box;"></div>
<div style="left:3342px;top:1791px;width:44px;height:20px;background:#1f7389;"></div>
<div class="t" style="top:1788.3px;font-size:20px;line-height:26px;color:#dcdcdc;-webkit-text-stroke:.5px;letter-spacing:.45px;left:3186px;width:400px;text-align:center;">0.00 dB</div>
<div style="left:3020px;top:1836px;width:366px;height:68px;background:#1c1c1c;border-radius:0 0 8px 8px;"></div>
<div style="left:70px;top:1860px;width:2507px;height:44px;background:#3a3a3a;border:6px solid #1a1a1a;box-sizing:border-box;border-radius:7px;"></div>
<div style="left:2591px;top:1860px;width:413px;height:44px;background:#3a3a3a;border:6px solid #1a1a1a;box-sizing:border-box;border-radius:7px;"></div>
<div class="t" style="top:1870.3px;font-size:20px;line-height:26px;color:#dcdcdc;font-weight:700;left:3028px;">Bass</div>
<div style="left:3080px;top:1862px;width:298px;height:40px;background:#1c1c1c;"></div>
<div style="left:3082.6px;top:1866px;width:42px;height:31.4px;background:#3a3a3a;"></div>
<div style="left:3082.6px;top:1866px;width:42px;height:2.8px;background:#474747;"></div>
<div style="left:3084.1px;top:1866.7px;width:2px;height:2px;background:#f79a1e;"></div>
<div style="left:3126.5px;top:1866px;width:94.1px;height:31.4px;background:#3a3a3a;"></div>
<div style="left:3126.5px;top:1866px;width:94.1px;height:2.8px;background:#474747;"></div>
<div style="left:3128px;top:1866.7px;width:2px;height:2px;background:#f79a1e;"></div>
<div style="left:3222.5px;top:1866px;width:70px;height:31.4px;background:#3a3a3a;"></div>
<div style="left:3222.5px;top:1866px;width:70px;height:2.8px;background:#474747;"></div>
<div style="left:3224px;top:1866.7px;width:2px;height:2px;background:#f79a1e;"></div>
<div style="left:3294.4px;top:1866px;width:83.3px;height:31.4px;background:#3a3a3a;"></div>
<div style="left:3294.4px;top:1866px;width:83.3px;height:2.8px;background:#474747;"></div>
<div style="left:3295.9px;top:1866.7px;width:2px;height:2px;background:#f79a1e;"></div>
<div style="left:3083.5px;top:1872.7px;width:24.4px;height:20.9px;background:#060606;"></div>
<div style="left:3089.4px;top:1869.7px;width:18.5px;height:2.2px;background:#2c2c2c;"></div>
<div style="left:3083.5px;top:1894.4px;width:24.4px;height:2.2px;background:#222;"></div>
<div style="left:3165.4px;top:1869.5px;width:45.6px;height:27.2px;background:#060606;"></div>
<div style="left:3165.4px;top:1875.7px;width:45.6px;height:0.8px;background:#b87a25;"></div>
<div style="left:3165.4px;top:1882.9px;width:45.6px;height:0.8px;background:#2492ab;"></div>
<div style="left:3128.8px;top:1869.7px;width:10.1px;height:2.2px;background:#f79a1e;"></div>
<div style="left:3143.1px;top:1869.7px;width:9.8px;height:2.2px;background:#f79a1e;"></div>
<div style="left:3150.4px;top:1877.3px;width:3.7px;height:2px;background:#f79a1e;"></div>
<div style="left:3212px;top:1879.3px;width:7.5px;height:2px;background:#f79a1e;"></div>
<div style="left:3127.4px;top:1874.5px;width:12.7px;height:4.8px;background:#222;"></div>
<div style="left:3232.9px;top:1869.7px;width:34.8px;height:17.9px;background:#060606;"></div>
<div style="left:3232.9px;top:1878.2px;width:12.9px;height:0.8px;background:#2492ab;"></div>
<div style="left:3232.9px;top:1888.3px;width:3.3px;height:2.1px;background:#f79a1e;"></div>
<div style="left:3264.5px;top:1888.3px;width:3.3px;height:2.1px;background:#f79a1e;"></div>
<div style="left:3288.6px;top:1882.1px;width:3.1px;height:2px;background:#f79a1e;"></div>
<div style="left:3288.6px;top:1890.5px;width:3.1px;height:2px;background:#f79a1e;"></div>
<div style="left:3232.9px;top:1891.7px;width:34.8px;height:4.8px;background:#444;"></div>
<div style="left:3303.5px;top:1868.8px;width:65.2px;height:22.4px;background:#060606;"></div>
<div style="left:3320.1px;top:1879.6px;width:48.5px;height:0.8px;background:#2492ab;"></div>
<div style="left:3316.9px;top:1881.2px;width:2.5px;height:2.5px;background:#f79a1e;"></div>
<div style="left:3327.9px;top:1878.7px;width:2.5px;height:2.5px;background:#f79a1e;"></div>
<div style="left:3341px;top:1878.7px;width:2.5px;height:2.5px;background:#f79a1e;"></div>
<div style="left:3354.2px;top:1878.7px;width:2.5px;height:2.5px;background:#f79a1e;"></div>
<div style="left:3305.4px;top:1894.8px;width:1.9px;height:1.8px;background:#35bfe0;"></div>
<div style="left:3313.6px;top:1894.8px;width:1.9px;height:1.8px;background:#35bfe0;"></div>
<div style="left:3321.8px;top:1894.8px;width:1.9px;height:1.8px;background:#35bfe0;"></div>
<div style="left:3330px;top:1894.8px;width:1.9px;height:1.8px;background:#35bfe0;"></div>
<div style="left:3374px;top:1869.9px;width:3.6px;height:2px;background:#f79a1e;"></div>
<div style="left:3369.5px;top:1884px;width:8px;height:2px;background:#f79a1e;"></div>
<div style="left:3369.5px;top:1888.6px;width:5.9px;height:2px;background:#2492ab;"></div>
<div style="left:3369.5px;top:1893.5px;width:4px;height:2px;background:#2492ab;"></div>
<div style="left:3080px;top:1862px;width:280px;height:40px;border:3.500px solid #8a8a8a;box-sizing:border-box;"></div><svg class="ov" width="3456" height="1918" viewBox="0 0 3456 1918"><circle cx="433" cy="35" r="6.6" fill="none" stroke="#d0d0d0" stroke-width="1.8"/><circle cx="451.2" cy="35" r="7.6" fill="#d0d0d0"/>
<path d="M478 32.5h10l-5 5.5z" fill="#d0d0d0"/>
<path d="M572 32.5h10l-5 5.5z" fill="#d0d0d0"/>
<path d="M1140 35h17" stroke="#111" stroke-width="2.2"/><path d="M1148 29l9 6-9 6z" fill="#111"/><path d="M1160 35h4M1166.5 35h4" stroke="#111" stroke-width="2.2"/>
<path d="M1383.7 20.5v29.5l26.3-14.7z" fill="#cbcdcb"/><rect x="1430" y="22" width="26" height="26" fill="#cbcdcb"/><circle cx="1488.7" cy="35" r="13.2" fill="#d6d7d6"/>
<path d="M1550.5 35h17M1559 26.5v17" stroke="#e0e0e0" stroke-width="2"/>
<path d="M1590 41l14-12" stroke="#111" stroke-width="2.4"/><circle cx="1589.5" cy="41.5" r="3.6" fill="#f79a1e" stroke="#111" stroke-width="2.2"/><circle cx="1604.5" cy="28.5" r="3.6" fill="#f79a1e" stroke="#111" stroke-width="2.2"/>
<path d="M1643 35h-10" stroke="#555" stroke-width="2.4"/><path d="M1626 35l10-6.5v13z" fill="#555"/>
<path d="M1665 31v-5h5M1676 26h5v5M1681 39v5h-5M1670 44h-5v-5" fill="none" stroke="#555" stroke-width="1.6"/>
<circle cx="1711" cy="35" r="7.8" fill="none" stroke="#e4e4e4" stroke-width="2.2"/>
<path d="M1951 29h7l9 12h8" fill="none" stroke="#d0d0d0" stroke-width="2"/>
<path d="M2006 44h-6.5a2.5 2.5 0 0 1-2.5-2.500v-13a2.5 2.5 0 0 1 2.5-2.5h19a2.5 2.5 0 0 1 2.500 2.500v13a2.500 2.500 0 0 1-2.500 2.500h-4" fill="none" stroke="#111" stroke-width="2.2"/><path d="M2006.500 44l7.500-5.500v11z" fill="#111"/>
<path d="M2042 41h8l8-12h9" fill="none" stroke="#d0d0d0" stroke-width="2"/>
<path d="M3034 43.5l2-6 13-13 4 4-13 13z" fill="#d0d0d0"/><path d="M3033 47.500h20" stroke="#d0d0d0" stroke-width="1.6"/>
<rect x="3070.500" y="24" width="21" height="23" rx="2" fill="none" stroke="#111" stroke-width="2"/><path d="M3076 24v13M3081 24v13M3086 24v13" stroke="#111" stroke-width="3.2"/>
<path d="M3338 32.500h10l-5 5.500z" fill="#d0d0d0"/>
<path d="M3394 153v9h9a9 9 0 0 1-9-9z" fill="#141414"/>
<circle cx="35" cy="89.5" r="19" fill="#181818"/><path d="M25.500 82h19l-9.500 18z" fill="#3c3c3c" stroke="#3c3c3c" stroke-width="3" stroke-linejoin="round"/>
<circle cx="35" cy="1417" r="19" fill="#181818"/><path d="M25 1413q5-6 10 0t10 0M25 1422q5-6 10 0t10 0" fill="none" stroke="#3a3a3a" stroke-width="2.6"/>
<circle cx="3421" cy="88.600" r="19" fill="#171717"/><path d="M3410 81h22M3410 88.800h22M3410 96.600h22" stroke="#f79a1e" stroke-width="3.800"/>
<circle cx="3421" cy="134.800" r="19" fill="#171717"/><path d="M3413 124v22M3421 124v22M3429 124v22" stroke="#3a3a3a" stroke-width="4"/>
<circle cx="3413" cy="1256.5" r="13" fill="#f79a1e"/>
<text x="3413" y="1261.3" font-size="12.5" font-weight="700" text-anchor="middle" fill="#111" font-family="Liberation Sans,sans-serif">I·O</text>
<circle cx="3413" cy="1295" r="13" fill="#f79a1e"/>
<text x="3413" y="1299.8" font-size="14" font-weight="700" text-anchor="middle" fill="#111" font-family="Liberation Sans,sans-serif">R</text>
<circle cx="3413" cy="1333" r="13" fill="#f79a1e"/>
<text x="3413" y="1337.8" font-size="14" font-weight="700" text-anchor="middle" fill="#111" font-family="Liberation Sans,sans-serif">M</text>
<circle cx="3413" cy="1371" r="13" fill="#4a4a4a"/>
<text x="3413" y="1375.8" font-size="14" font-weight="700" text-anchor="middle" fill="#141414" font-family="Liberation Sans,sans-serif">D</text>
<path d="M73.3 82.10h149.6v0.70h-149.6zM222.9 82.10h149.6v0.70h-149.6zM372.5 82.10h149.6v0.70h-149.6zM522.1 82.10h149.6v0.70h-149.6zM671.7 82.10h149.6v0.70h-149.6zM821.3 82.10h149.6v0.70h-149.6zM970.9 82.10h149.6v0.70h-149.6zM1120.5 82.10h149.6v0.70h-149.6zM1270.1 82.10h149.6v0.70h-149.6zM1419.7 82.10h149.6v0.70h-149.6zM1569.3 82.10h149.6v0.70h-149.6zM1718.9 82.10h149.6v0.70h-149.6zM1868.5 82.10h149.6v0.70h-149.6zM2018.1 82.10h149.6v0.70h-149.6zM2167.7 82.10h149.6v0.70h-149.6zM2317.3 82.10h149.6v0.70h-149.6zM2466.9 82.10h149.6v0.70h-149.6zM2616.5 82.10h149.6v0.70h-149.6zM2766.1 82.10h149.6v0.70h-149.6zM2915.7 82.10h149.6v0.70h-149.6zM372.5 83.10h149.6v0.70h-149.6zM522.1 83.10h149.6v0.70h-149.6zM970.9 83.10h138.4v0.70h-138.4zM1120.5 83.10h149.6v0.70h-149.6zM1419.7 83.10h138.4v0.70h-138.4zM1569.3 83.10h149.6v0.70h-149.6zM2167.7 83.10h130.9v0.70h-130.9zM2317.3 83.10h138.4v0.70h-138.4zM2466.9 83.10h130.9v0.70h-130.9zM2616.5 83.10h149.6v0.70h-149.6zM2766.1 83.10h149.6v0.70h-149.6zM73.3 84.00h149.6v0.70h-149.6zM222.9 84.00h138.4v0.70h-138.4zM671.7 84.00h149.6v0.70h-149.6zM821.3 84.00h130.9v0.70h-130.9zM1270.1 84.00h129v0.70h-129zM1868.5 84.00h149.6v0.70h-149.6zM2018.1 84.00h128.1v0.70h-128.1zM2915.7 84.00h149.6v0.70h-149.6z" fill="#ff3636" opacity="0.9"/>
<path d="M73.3 84.90h149.6v1.30h-149.6zM73.3 86.50h149.6v1.20h-149.6zM222.9 84.90h149.6v1.30h-149.6zM222.9 86.50h149.6v1.20h-149.6zM372.5 84.90h149.6v1.30h-149.6zM372.5 86.50h149.6v1.20h-149.6zM522.1 84.90h149.6v1.30h-149.6zM522.1 86.50h149.6v1.20h-149.6zM671.7 84.90h149.6v1.30h-149.6zM671.7 86.50h149.6v1.20h-149.6zM821.3 84.90h130.9v1.30h-130.9zM821.3 86.50h130.9v1.20h-130.9zM970.9 84.90h149.6v1.30h-149.6zM970.9 86.50h149.6v1.20h-149.6zM1120.5 84.90h149.6v1.30h-149.6zM1120.5 86.50h149.6v1.20h-149.6zM1270.1 84.90h129v1.30h-129zM1270.1 86.50h129v1.20h-129zM1419.7 84.90h149.6v1.30h-149.6zM1419.7 86.50h149.6v1.20h-149.6zM1569.3 84.90h149.6v1.30h-149.6zM1569.3 86.50h149.6v1.20h-149.6zM2167.7 84.90h149.6v1.30h-149.6zM2167.7 86.50h149.6v1.20h-149.6zM2317.3 84.90h149.6v1.30h-149.6zM2317.3 86.50h149.6v1.20h-149.6zM2466.9 84.90h149.6v1.30h-149.6zM2466.9 86.50h149.6v1.20h-149.6zM2616.5 84.90h149.6v1.30h-149.6zM2616.5 86.50h149.6v1.20h-149.6zM2766.1 84.90h149.6v1.30h-149.6zM2766.1 86.50h149.6v1.20h-149.6zM2915.7 84.90h149.6v1.30h-149.6zM2915.7 86.50h149.6v1.20h-149.6zM372.5 88.00h37.4v1.20h-37.4zM409.9 88.00h37.4v1.20h-37.4zM447.3 88.00h37.4v1.20h-37.4zM484.7 88.00h37.4v1.20h-37.4zM522.1 88.00h37.4v1.20h-37.4zM559.5 88.00h37.4v1.20h-37.4zM596.9 88.00h37.4v1.20h-37.4zM634.3 88.00h37.4v1.20h-37.4zM671.7 88.00h37.4v1.20h-37.4zM709.1 88.00h37.4v1.20h-37.4zM746.5 88.00h37.4v1.20h-37.4zM783.9 88.00h37.4v1.20h-37.4zM821.3 88.00h37.4v1.20h-37.4zM858.7 88.00h37.4v1.20h-37.4zM896.1 88.00h37.4v1.20h-37.4zM933.5 88.00h18.7v1.20h-18.7zM970.9 88.00h37.4v1.20h-37.4zM1008.3 88.00h37.4v1.20h-37.4zM1045.7 88.00h37.4v1.20h-37.4zM1083.1 88.00h37.4v1.20h-37.4zM1120.5 88.00h37.4v1.20h-37.4zM1157.9 88.00h37.4v1.20h-37.4zM1195.3 88.00h37.4v1.20h-37.4zM1232.7 88.00h37.4v1.20h-37.4zM1419.7 88.00h37.4v1.20h-37.4zM1457.1 88.00h37.4v1.20h-37.4zM1494.5 88.00h37.4v1.20h-37.4zM1531.9 88.00h37.4v1.20h-37.4zM1569.3 88.00h37.4v1.20h-37.4zM1606.7 88.00h37.4v1.20h-37.4zM1644.1 88.00h37.4v1.20h-37.4zM1681.5 88.00h37.4v1.20h-37.4zM1868.5 88.00h37.4v1.20h-37.4zM1905.9 88.00h37.4v1.20h-37.4zM1943.3 88.00h37.4v1.20h-37.4zM1980.7 88.00h37.4v1.20h-37.4zM2018.1 88.00h37.4v1.20h-37.4zM2055.5 88.00h37.4v1.20h-37.4zM2092.9 88.00h37.4v1.20h-37.4zM2130.3 88.00h15.9v1.20h-15.9zM2167.7 88.00h37.4v1.20h-37.4zM2205.1 88.00h37.4v1.20h-37.4zM2242.5 88.00h37.4v1.20h-37.4zM2279.9 88.00h37.4v1.20h-37.4zM2317.3 88.00h37.4v1.20h-37.4zM2354.7 88.00h37.4v1.20h-37.4zM2392.1 88.00h37.4v1.20h-37.4zM2429.5 88.00h37.4v1.20h-37.4zM2466.9 88.00h37.4v1.20h-37.4zM2504.3 88.00h37.4v1.20h-37.4zM2541.7 88.00h37.4v1.20h-37.4zM2579.1 88.00h37.4v1.20h-37.4zM2616.5 88.00h37.4v1.20h-37.4zM2653.9 88.00h37.4v1.20h-37.4zM2691.3 88.00h37.4v1.20h-37.4zM2728.7 88.00h37.4v1.20h-37.4zM522.1 89.20h74.8v1.10h-74.8zM596.9 89.20h74.8v1.10h-74.8zM1120.5 89.20h74.8v1.10h-74.8zM1195.3 89.20h74.8v1.10h-74.8zM1419.7 89.20h74.8v1.10h-74.8zM1494.5 89.20h74.8v1.10h-74.8zM1569.3 89.20h74.8v1.10h-74.8zM1644.1 89.20h74.8v1.10h-74.8zM2317.3 89.20h74.8v1.10h-74.8zM2392.1 89.20h74.8v1.10h-74.8zM2466.9 89.20h74.8v1.10h-74.8zM2541.7 89.20h74.8v1.10h-74.8zM2616.5 89.20h74.8v1.10h-74.8zM2691.3 89.20h74.8v1.10h-74.8zM2766.1 89.20h74.8v1.10h-74.8zM2840.9 89.20h74.8v1.10h-74.8z" fill="#25ffa8" opacity="0.74"/>
<path d="M73.3 91.20h299.2v0.90h-299.2zM73.3 92.00h299.2v0.90h-299.2zM372.5 91.20h299.2v0.90h-299.2zM372.5 92.00h299.2v0.90h-299.2zM970.9 91.20h299.2v0.90h-299.2zM970.9 92.00h299.2v0.90h-299.2zM1270.1 91.20h129v0.90h-129zM1270.1 92.00h129v0.90h-129zM1419.7 91.20h299.2v0.90h-299.2zM1419.7 92.00h299.2v0.90h-299.2zM1868.5 91.20h149.6v0.90h-149.6zM1868.5 92.00h149.6v0.90h-149.6zM2018.1 91.20h128.1v0.90h-128.1zM2018.1 92.00h128.1v0.90h-128.1zM2167.7 91.20h299.2v0.90h-299.2zM2167.7 92.00h299.2v0.90h-299.2zM2466.9 91.20h149.6v0.90h-149.6zM2466.9 92.00h149.6v0.90h-149.6zM2616.5 91.20h149.6v0.90h-149.6zM2616.5 92.00h149.6v0.90h-149.6zM2766.1 91.20h149.6v0.90h-149.6zM2766.1 92.00h149.6v0.90h-149.6zM2915.7 91.20h149.6v0.90h-149.6zM2915.7 92.00h149.6v0.90h-149.6zM1270.1 92.80h168.3v0.90h-168.3zM2018.1 92.80h168.3v0.90h-168.3z" fill="#ffa529" opacity="0.9"/>
<path d="M372.5 94.30h149.6v0.90h-149.6zM522.1 94.30h149.6v0.90h-149.6zM671.7 94.30h149.6v0.90h-149.6zM821.3 94.30h149.6v0.90h-149.6zM970.9 94.30h149.6v0.90h-149.6zM1120.5 94.30h149.6v0.90h-149.6zM1270.1 94.30h129v0.90h-129zM1419.7 94.30h149.6v0.90h-149.6zM1569.3 94.30h149.6v0.90h-149.6zM1718.9 94.30h149.6v0.90h-149.6zM1868.5 94.30h149.6v0.90h-149.6zM2018.1 94.30h149.6v0.90h-149.6zM2167.7 94.30h149.6v0.90h-149.6zM2317.3 94.30h149.6v0.90h-149.6zM2466.9 94.30h149.6v0.90h-149.6zM2616.5 94.30h149.6v0.90h-149.6zM2766.1 94.30h149.6v0.90h-149.6zM2915.7 94.30h149.6v0.90h-149.6zM372.5 95.20h299.2v0.90h-299.2zM970.9 95.20h299.2v0.90h-299.2zM1270.1 95.20h129v0.90h-129zM1419.7 95.20h299.2v0.90h-299.2zM2167.7 95.20h299.2v0.90h-299.2zM2466.9 95.20h149.6v0.90h-149.6zM2616.5 95.20h149.6v0.90h-149.6zM2766.1 95.20h149.6v0.90h-149.6z" fill="#fff034" opacity="0.9"/>
<path d="M1270.1 96.30h299.2v0.90h-299.2zM1569.3 96.30h149.6v0.90h-149.6zM2018.1 96.30h128.1v0.90h-128.1zM2167.7 96.30h149.6v0.90h-149.6zM2317.3 96.30h149.6v0.90h-149.6zM2466.9 96.30h149.6v0.90h-149.6zM671.7 97.20h280.5v0.90h-280.5zM1270.1 97.20h129v0.90h-129zM1868.5 97.20h277.7v0.90h-277.7zM2317.3 97.20h149.6v0.90h-149.6zM2466.9 97.20h149.6v0.90h-149.6z" fill="#ff39d4" opacity="0.9"/>
<path d="M671.7 98.20h149.6v0.90h-149.6zM821.3 98.20h130.9v0.90h-130.9zM1270.1 98.20h129v0.90h-129zM1718.9 98.20h149.6v0.90h-149.6zM1868.5 98.20h149.6v0.90h-149.6zM2018.1 98.20h128.1v0.90h-128.1zM2167.7 98.20h149.6v0.90h-149.6zM2317.3 98.20h149.6v0.90h-149.6zM2466.9 98.20h149.6v0.90h-149.6z" fill="#ff94a6" opacity="0.9"/>
<path d="M634.3 99.70h96.7v0.90h-96.7zM914.8 99.70h96.7v0.90h-96.7zM1363.6 99.70h96.7v0.90h-96.7zM1681.5 99.70h96.7v0.90h-96.7zM2111.6 99.70h96.7v0.90h-96.7zM2279.9 99.70h96.7v0.90h-96.7zM2579.1 99.70h96.7v0.90h-96.7zM1120.5 100.50h65.5v0.90h-65.5zM1419.7 100.50h65.5v0.90h-65.5zM2167.7 100.50h65.5v0.90h-65.5zM2317.3 100.50h65.5v0.90h-65.5zM2167.7 101.30h161.8v0.90h-161.8zM1999.4 102.10h229.1v0.90h-229.1zM2466.9 102.10h228.1v0.90h-228.1z" fill="#92a7ff" opacity="0.9"/>
<path d="M1718.9 103.70h149.6v1.30h-149.6zM1868.5 103.70h149.6v1.30h-149.6zM2018.1 103.70h149.6v1.30h-149.6z" fill="#007dc0" opacity="0.9"/>
<path d="M661.4 104.60h47.7v1.30h-47.7zM1859.1 104.60h46.8v1.30h-46.8z" fill="#00bfaf" opacity="0.9"/>
<path d="M77.500 85h-3v20h3M3283.500 82h3v24h-3" fill="none" stroke="#c8c8c8" stroke-width="1.500"/>
<path d="M1869 81v25.500" stroke="#e0e0e0" stroke-width="1.500"/>
<path d="M70.9 166v-10.500h3.500" fill="none" stroke="#8a8a8a" stroke-width="1.500"/>
<path d="M197.8 166v-10.500h3.500" fill="none" stroke="#8a8a8a" stroke-width="1.500"/>
<path d="M324.7 166v-10.500h3.500" fill="none" stroke="#8a8a8a" stroke-width="1.500"/>
<path d="M451.5 166v-10.500h3.500" fill="none" stroke="#8a8a8a" stroke-width="1.500"/>
<path d="M578.4 166v-10.500h3.500" fill="none" stroke="#8a8a8a" stroke-width="1.500"/>
<path d="M705.3 166v-10.500h3.500" fill="none" stroke="#8a8a8a" stroke-width="1.500"/>
<path d="M832.2 166v-10.500h3.500" fill="none" stroke="#8a8a8a" stroke-width="1.500"/>
<path d="M959.1 166v-10.500h3.500" fill="none" stroke="#8a8a8a" stroke-width="1.500"/>
<path d="M1085.9 166v-10.500h3.500" fill="none" stroke="#8a8a8a" stroke-width="1.500"/>
<path d="M1212.8 166v-10.500h3.500" fill="none" stroke="#8a8a8a" stroke-width="1.500"/>
<path d="M1339.7 166v-10.500h3.500" fill="none" stroke="#8a8a8a" stroke-width="1.500"/>
<path d="M1466.6 166v-10.500h3.500" fill="none" stroke="#8a8a8a" stroke-width="1.500"/>
<path d="M1593.5 166v-10.500h3.500" fill="none" stroke="#8a8a8a" stroke-width="1.500"/>
<path d="M1720.3 166v-10.500h3.500" fill="none" stroke="#8a8a8a" stroke-width="1.500"/>
<path d="M1847.2 166v-10.500h3.500" fill="none" stroke="#8a8a8a" stroke-width="1.500"/>
<path d="M1974.1 166v-10.500h3.500" fill="none" stroke="#8a8a8a" stroke-width="1.500"/>
<path d="M2101 166v-10.500h3.500" fill="none" stroke="#8a8a8a" stroke-width="1.500"/>
<path d="M2227.9 166v-10.500h3.500" fill="none" stroke="#8a8a8a" stroke-width="1.500"/>
<path d="M2354.7 166v-10.500h3.500" fill="none" stroke="#8a8a8a" stroke-width="1.500"/>
<path d="M2481.6 166v-10.500h3.500" fill="none" stroke="#8a8a8a" stroke-width="1.500"/>
<path d="M2608.5 166v-10.500h3.500" fill="none" stroke="#8a8a8a" stroke-width="1.500"/>
<path d="M2735.4 166v-10.500h3.500" fill="none" stroke="#8a8a8a" stroke-width="1.500"/>
<path d="M72 170.500l17 9-17 9" fill="none" stroke="#b0b0b0" stroke-width="1.500"/><path d="M2672.500 170.500l-17 9 17 9" fill="none" stroke="#b0b0b0" stroke-width="1.500"/>
<path d="M71.500 770H1514L1584 725.500H1830L1845 770H2800" fill="none" stroke="#e8574a" stroke-width="3.600"/>
<circle cx="1514" cy="769" r="4.500" fill="#343434" stroke="#e8574a" stroke-width="2.600"/>
<circle cx="1584" cy="725.5" r="4.500" fill="#343434" stroke="#e8574a" stroke-width="2.600"/>
<circle cx="1830" cy="725.5" r="4.500" fill="#343434" stroke="#e8574a" stroke-width="2.600"/>
<circle cx="1845" cy="769" r="4.500" fill="#343434" stroke="#e8574a" stroke-width="2.600"/>
<path d="M1586 222h14l-7 7.500z" fill="#35bfe0"/>
<path d="M1586 1412h14l-7-8z" fill="#35bfe0"/>
<path d="M71.2 1402v15h4" fill="none" stroke="#8a8a8a" stroke-width="1.500"/>
<path d="M237.7 1402v15h4" fill="none" stroke="#8a8a8a" stroke-width="1.500"/>
<path d="M404.3 1402v15h4" fill="none" stroke="#8a8a8a" stroke-width="1.500"/>
<path d="M570.8 1402v15h4" fill="none" stroke="#8a8a8a" stroke-width="1.500"/>
<path d="M737.3 1402v15h4" fill="none" stroke="#8a8a8a" stroke-width="1.500"/>
<path d="M903.9 1402v15h4" fill="none" stroke="#8a8a8a" stroke-width="1.500"/>
<path d="M1070.4 1402v15h4" fill="none" stroke="#8a8a8a" stroke-width="1.500"/>
<path d="M1236.9 1402v15h4" fill="none" stroke="#8a8a8a" stroke-width="1.500"/>
<path d="M1403.4 1402v15h4" fill="none" stroke="#8a8a8a" stroke-width="1.500"/>
<path d="M1570 1402v15h4" fill="none" stroke="#8a8a8a" stroke-width="1.500"/>
<path d="M1736.5 1402v15h4" fill="none" stroke="#8a8a8a" stroke-width="1.500"/>
<path d="M1903 1402v15h4" fill="none" stroke="#8a8a8a" stroke-width="1.500"/>
<path d="M2069.6 1402v15h4" fill="none" stroke="#8a8a8a" stroke-width="1.500"/>
<path d="M2236.1 1402v15h4" fill="none" stroke="#8a8a8a" stroke-width="1.500"/>
<path d="M2402.6 1402v15h4" fill="none" stroke="#8a8a8a" stroke-width="1.500"/>
<path d="M2569.1 1402v15h4" fill="none" stroke="#8a8a8a" stroke-width="1.500"/>
<path d="M2735.7 1402v15h4" fill="none" stroke="#8a8a8a" stroke-width="1.500"/>
<circle cx="2821" cy="207" r="11" fill="#3c3c3c" stroke="#0c0c0c" stroke-width="1.500"/>
<path d="M2827 207h-8" stroke="#d8d8d8" stroke-width="2.400"/><path d="M2813.5 207l7.5-6v12z" fill="#d8d8d8"/>
<circle cx="2854.5" cy="207" r="11" fill="#3c3c3c" stroke="#0c0c0c" stroke-width="1.500"/>
<path d="M2848.5 207h8" stroke="#d8d8d8" stroke-width="2.400"/><path d="M2862 207l-7.5-6v12z" fill="#d8d8d8"/>
<path d="M2908 212.500l10-10" stroke="#111" stroke-width="2.800"/><circle cx="2907.500" cy="213" r="3" fill="#111"/><circle cx="2918.500" cy="202" r="3" fill="#111"/>
<rect x="2960" y="205.500" width="14" height="9" fill="#cfcfcf"/><path d="M2963 206v-2.500a4 4 0 0 1 8 0v2.500" fill="none" stroke="#cfcfcf" stroke-width="2"/>
<circle cx="2823" cy="247" r="12" fill="none" stroke="rgba(0,0,0,0.720)" stroke-width="2"/>
<path d="M2819.3 240.5v13l10.500-6.500z" fill="rgba(0,0,0,0.720)"/>
<circle cx="3333" cy="247" r="7.600" fill="#d6d6d6"/><path d="M3333.300 239.5v6.500q0 3.500-4.500 3.500" fill="none" stroke="#3a3a3a" stroke-width="2.300"/>
<circle cx="2823" cy="285" r="12" fill="none" stroke="rgba(0,0,0,0.720)" stroke-width="2"/>
<path d="M2819.3 278.5v13l10.500-6.500z" fill="rgba(0,0,0,0.720)"/>
<circle cx="3333" cy="285" r="7.600" fill="#d6d6d6"/><path d="M3333.300 277.5v6.500q0 3.500-4.500 3.500" fill="none" stroke="#3a3a3a" stroke-width="2.300"/>
<circle cx="2823" cy="323" r="12" fill="none" stroke="rgba(0,0,0,0.720)" stroke-width="2"/>
<path d="M2819.3 316.5v13l10.500-6.500z" fill="rgba(0,0,0,0.720)"/>
<circle cx="3333" cy="323" r="7.600" fill="#d6d6d6"/><path d="M3333.300 315.5v6.500q0 3.500-4.500 3.500" fill="none" stroke="#3a3a3a" stroke-width="2.300"/>
<circle cx="2823" cy="361" r="12" fill="none" stroke="rgba(0,0,0,0.720)" stroke-width="2"/>
<path d="M2816.2 357.5h13.500l-6.750 10z" fill="rgba(0,0,0,0.720)"/>
<circle cx="3333" cy="361" r="7.600" fill="#d6d6d6"/><path d="M3333.300 353.5v6.500q0 3.500-4.500 3.500" fill="none" stroke="#3a3a3a" stroke-width="2.300"/>
<circle cx="2823" cy="537" r="12" fill="none" stroke="rgba(0,0,0,0.720)" stroke-width="2"/>
<path d="M2819.3 530.5v13l10.500-6.500z" fill="rgba(0,0,0,0.720)"/>
<circle cx="3333" cy="537" r="7.600" fill="#d6d6d6"/><path d="M3333.300 529.5v6.500q0 3.500-4.500 3.500" fill="none" stroke="#3a3a3a" stroke-width="2.300"/>
<circle cx="2823" cy="575" r="12" fill="none" stroke="rgba(0,0,0,0.720)" stroke-width="2"/>
<path d="M2819.3 568.5v13l10.500-6.500z" fill="rgba(0,0,0,0.720)"/>
<circle cx="3333" cy="575" r="7.600" fill="#d6d6d6"/><path d="M3333.300 567.5v6.500q0 3.500-4.500 3.500" fill="none" stroke="#3a3a3a" stroke-width="2.300"/>
<circle cx="2823" cy="613" r="12" fill="none" stroke="rgba(0,0,0,0.720)" stroke-width="2"/>
<path d="M2819.3 606.5v13l10.500-6.500z" fill="rgba(0,0,0,0.720)"/>
<circle cx="3333" cy="613" r="6.800" fill="#7c7c7c"/>
<circle cx="2823" cy="651" r="12" fill="none" stroke="rgba(0,0,0,0.720)" stroke-width="2"/>
<path d="M2816.5 647h11M2819 651h11M2819 655h7" stroke="rgba(0,0,0,0.720)" stroke-width="1.700"/>
<circle cx="2833" cy="793" r="12" fill="none" stroke="rgba(0,0,0,0.720)" stroke-width="2"/>
<path d="M2829.3 786.5v13l10.500-6.500z" fill="rgba(0,0,0,0.720)"/>
<circle cx="3333" cy="793" r="7.600" fill="#d6d6d6"/><path d="M3333.300 785.5v6.500q0 3.500-4.500 3.500" fill="none" stroke="#3a3a3a" stroke-width="2.300"/>
<circle cx="2833" cy="831" r="12" fill="none" stroke="rgba(0,0,0,0.720)" stroke-width="2"/>
<path d="M2829.3 824.5v13l10.500-6.500z" fill="rgba(0,0,0,0.720)"/>
<circle cx="3333" cy="831" r="7.600" fill="#d6d6d6"/><path d="M3333.300 823.5v6.500q0 3.500-4.500 3.500" fill="none" stroke="#3a3a3a" stroke-width="2.300"/>
<circle cx="2823" cy="869" r="12" fill="none" stroke="rgba(0,0,0,0.720)" stroke-width="2"/>
<path d="M2819.3 862.5v13l10.500-6.500z" fill="rgba(0,0,0,0.720)"/>
<circle cx="3333" cy="869" r="6.800" fill="#7c7c7c"/>
<circle cx="2823" cy="907" r="12" fill="none" stroke="rgba(0,0,0,0.720)" stroke-width="2"/>
<path d="M2819.3 900.5v13l10.500-6.500z" fill="rgba(0,0,0,0.720)"/>
<circle cx="3333" cy="907" r="7.600" fill="#d6d6d6"/><path d="M3333.300 899.5v6.500q0 3.500-4.500 3.500" fill="none" stroke="#3a3a3a" stroke-width="2.300"/>
<circle cx="2823" cy="945" r="12" fill="none" stroke="rgba(0,0,0,0.720)" stroke-width="2"/>
<path d="M2819.3 938.5v13l10.500-6.500z" fill="rgba(0,0,0,0.720)"/>
<circle cx="3333" cy="945" r="7.600" fill="#d6d6d6"/><path d="M3333.300 937.5v6.500q0 3.500-4.500 3.500" fill="none" stroke="#3a3a3a" stroke-width="2.300"/>
<circle cx="2823" cy="983" r="12" fill="none" stroke="rgba(0,0,0,0.720)" stroke-width="2"/>
<path d="M2819.3 976.5v13l10.500-6.500z" fill="rgba(0,0,0,0.720)"/>
<circle cx="3333" cy="983" r="7.600" fill="#d6d6d6"/><path d="M3333.300 975.5v6.500q0 3.500-4.500 3.500" fill="none" stroke="#3a3a3a" stroke-width="2.300"/>
<circle cx="2823" cy="1021" r="12" fill="none" stroke="rgba(0,0,0,0.720)" stroke-width="2"/>
<path d="M2819.3 1014.5v13l10.500-6.500z" fill="rgba(0,0,0,0.720)"/>
<circle cx="3333" cy="1021" r="7.600" fill="#d6d6d6"/><path d="M3333.300 1013.5v6.500q0 3.500-4.500 3.500" fill="none" stroke="#3a3a3a" stroke-width="2.300"/>
<circle cx="2823" cy="1059" r="12" fill="none" stroke="rgba(0,0,0,0.720)" stroke-width="2"/>
<path d="M2819.3 1052.5v13l10.500-6.500z" fill="rgba(0,0,0,0.720)"/>
<circle cx="3333" cy="1059" r="6.800" fill="#7c7c7c"/>
<circle cx="2823" cy="1097" r="12" fill="none" stroke="rgba(0,0,0,0.720)" stroke-width="2"/>
<path d="M2819.3 1090.5v13l10.500-6.500z" fill="rgba(0,0,0,0.720)"/>
<circle cx="3333" cy="1097" r="6.800" fill="#7c7c7c"/>
<circle cx="2823" cy="1135" r="12" fill="none" stroke="rgba(0,0,0,0.720)" stroke-width="2"/>
<path d="M2819.3 1128.5v13l10.500-6.500z" fill="rgba(0,0,0,0.720)"/>
<circle cx="3333" cy="1135" r="6.800" fill="#7c7c7c"/>
<circle cx="2823" cy="1173" r="12" fill="none" stroke="rgba(0,0,0,0.720)" stroke-width="2"/>
<path d="M2819.3 1166.5v13l10.500-6.500z" fill="rgba(0,0,0,0.720)"/>
<circle cx="3333" cy="1173" r="6.800" fill="#7c7c7c"/>
<circle cx="2823" cy="1211" r="12" fill="none" stroke="rgba(0,0,0,0.720)" stroke-width="2"/>
<path d="M2819.3 1204.5v13l10.500-6.500z" fill="rgba(0,0,0,0.720)"/>
<circle cx="3333" cy="1211" r="6.800" fill="#7c7c7c"/>
<circle cx="2823" cy="1249" r="12" fill="none" stroke="rgba(0,0,0,0.720)" stroke-width="2"/>
<path d="M2819.3 1242.5v13l10.500-6.500z" fill="rgba(0,0,0,0.720)"/>
<circle cx="3333" cy="1249" r="7.600" fill="#141414"/><path d="M3333.300 1241.5v6.500q0 3.500-4.500 3.500" fill="none" stroke="#e0262b" stroke-width="2.300"/>
<path d="M2976 390.5h12l-6 9z" fill="#e2e2e2"/>
<path d="M2976 424.5h12l-6 9z" fill="#e2e2e2"/>
<circle cx="2980.500" cy="499" r="9.800" fill="#222" stroke="#0a0a0a" stroke-width="1.500"/><path d="M2975 499h11M2980.500 493.500v11" stroke="#d8d8d8" stroke-width="1.700"/>
<path d="M3130 356.5h12l-6 9z" fill="#e2e2e2"/>
<path d="M3130 390.5h12l-6 9z" fill="#e2e2e2"/>
<path d="M3130 458.5h12l-6 9z" fill="#e2e2e2"/>
<circle cx="2829.5" cy="685" r="4" fill="#ea5a50"/>
<path d="M2976 680h12l-6 9z" fill="#e2e2e2"/>
<circle cx="2829.5" cy="719" r="4" fill="#ea5a50"/>
<path d="M2976 714h12l-6 9z" fill="#e2e2e2"/>
<circle cx="2980.800" cy="755" r="9.800" fill="#222" stroke="#0a0a0a" stroke-width="1.500"/><path d="M2975.300 755h11M2980.800 749.500v11" stroke="#d8d8d8" stroke-width="1.700"/>
<path d="M3130 646.5h12l-6 9z" fill="#e2e2e2"/>
<circle cx="2823" cy="1309" r="12" fill="none" stroke="rgba(0,0,0,0.720)" stroke-width="2"/>
<path d="M2819.3 1302.5v13l10.500-6.500z" fill="rgba(0,0,0,0.720)"/>
<circle cx="2823" cy="1347" r="12" fill="none" stroke="rgba(0,0,0,0.720)" stroke-width="2"/>
<path d="M2819.3 1340.5v13l10.500-6.500z" fill="rgba(0,0,0,0.720)"/>
<circle cx="2823" cy="1385" r="12" fill="none" stroke="rgba(0,0,0,0.720)" stroke-width="2"/>
<path d="M2819.3 1378.5v13l10.500-6.500z" fill="rgba(0,0,0,0.720)"/>
<path d="M3130 1380.5h12l-6 9z" fill="#e2e2e2"/>
<circle cx="64.5" cy="1477" r="11.7" fill="#f79a1e" stroke="#101010" stroke-width="1.800"/>
<circle cx="96.5" cy="1477" r="11.7" fill="#4a4a4a" stroke="#101010" stroke-width="1.800"/>
<path d="M92.5 1470v14l11-7z" fill="#c8c8c8"/>
<circle cx="129" cy="1477" r="11.7" fill="#4a4a4a" stroke="#101010" stroke-width="1.800"/>
<path d="M124 1483.500l7-7a4.200 4.200 0 0 1 5.500-5l-3 3 1.500 2.500 2.500-0.500 2-2.500a4.200 4.200 0 0 1-5.500 5.500l-7 7z" fill="#d0d0d0" transform="translate(-1.500 -2)"/>
<circle cx="509" cy="1477" r="11.7" fill="#3a3a3a" stroke="#101010" stroke-width="1.800"/>
<path d="M502.7 1478a6.300 6.300 0 0 1 10.500-4" fill="none" stroke="#dcdcdc" stroke-width="2.500"/><path d="M514.5 1469.5l2.500 7-7.500-1.500z" fill="#dcdcdc"/>
<path d="M515.3 1476a6.300 6.300 0 0 1-10.500 4" fill="none" stroke="#dcdcdc" stroke-width="2.500"/><path d="M503.5 1484.5l-2.500-7 7.500 1.500z" fill="#dcdcdc"/>
<circle cx="68.5" cy="1517" r="11.7" fill="#474747" stroke="#101010" stroke-width="1.800"/>
<path d="M62 1512.500h5l1.500 2h6.500v2h-9l-2.500 6.500h-1.500z" fill="#bdbdbd"/><path d="M64.500 1523l2.500-6h9.500l-2.500 6z" fill="#bdbdbd"/>
<circle cx="102.5" cy="1517" r="11.7" fill="#474747" stroke="#101010" stroke-width="1.800"/>
<path d="M96 1510.500h9.500l3.500 3.500v9.500h-13z" fill="#d4d4d4"/><rect x="99" y="1510.500" width="6" height="4" fill="#474747"/>
<path d="M361 1538.500l-9 16.500h18z" fill="#4a4a4a" stroke="#111" stroke-width="1.800"/><circle cx="361.500" cy="1550" r="3.800" fill="#e8504c"/>
<circle cx="68.500" cy="1776.500" r="11" fill="none" stroke="#f79a1e" stroke-width="2.400"/>
<path d="M174 1808.5h12l-6 9z" fill="#e2e2e2"/>
<path d="M318 1808.5h12l-6 9z" fill="#e2e2e2"/>
<circle cx="568.5" cy="1477" r="11.7" fill="#f79a1e" stroke="#101010" stroke-width="1.800"/>
<circle cx="600.5" cy="1477" r="11.7" fill="#f79a1e" stroke="#101010" stroke-width="1.800"/>
<path d="M596.5 1470v14l11-7z" fill="#111"/>
<circle cx="1578.5" cy="1477" r="11.7" fill="#3a3a3a" stroke="#101010" stroke-width="1.800"/>
<path d="M1572.2 1478a6.300 6.300 0 0 1 10.500-4" fill="none" stroke="#dcdcdc" stroke-width="2.500"/><path d="M1584 1469.5l2.500 7-7.500-1.500z" fill="#dcdcdc"/>
<path d="M1584.8 1476a6.300 6.300 0 0 1-10.500 4" fill="none" stroke="#dcdcdc" stroke-width="2.500"/><path d="M1573 1484.5l-2.500-7 7.500 1.500z" fill="#dcdcdc"/>
<circle cx="1611" cy="1477" r="11.7" fill="#3a3a3a" stroke="#101010" stroke-width="1.800"/>
<path d="M1604 1470h10l4 4v10h-14z" fill="#dcdcdc"/><rect x="1607" y="1471" width="7" height="4.500" fill="#3a3a3a"/>
<circle cx="717" cy="1517" r="11.7" fill="#4a4a4a" stroke="#101010" stroke-width="1.800"/>
<path d="M710.500 1520.500v-4a6.500 6.500 0 0 1 13 0v4" fill="none" stroke="#9a9a9a" stroke-width="2"/><rect x="709.500" y="1517.500" width="4" height="6.500" rx="1" fill="#9a9a9a"/><rect x="720.500" y="1517.500" width="4" height="6.500" rx="1" fill="#9a9a9a"/>
<path d="M688 1570.5h12l-6 9z" fill="#e2e2e2"/>
<path d="M688 1602.5h12l-6 9z" fill="#e2e2e2"/>
<path d="M734 1567.500h5q3 0 6 4l3 3.500h15M734 1582.500h5q3 0 6-4l3-3.500" stroke="#e0e0e0" stroke-width="1.700" fill="none"/>
<path d="M781 1575h6l5-6.500h10l5 6.500h6M787 1575l5 6.500h10l5-6.500" stroke="#e0e0e0" stroke-width="1.700" fill="none"/>
<path d="M829 1575h14l3-3.500q3-4 6-4h8M843 1575l3 3.500q3 4 6 4h8" stroke="#e0e0e0" stroke-width="1.700" fill="none"/>
<path d="M734 1600.500h19q9 0 9 9v4.500" stroke="#e0e0e0" stroke-width="1.700" fill="none"/>
<path d="M782 1614v-4.500q0-9 9-9h12q9 0 9 9v4.500" stroke="#e0e0e0" stroke-width="1.700" fill="none"/>
<path d="M830 1614v-4.500q0-9 9-9h21" stroke="#111" stroke-width="1.900" fill="none"/>
<path d="M621.1 1701.0A23.7 23.7 0 1 1 644.9 1701.0" fill="none" stroke="#131313" stroke-width="4.8"/>
<path d="M621.1 1701.0A23.7 23.7 0 1 1 651.7 1665.9" fill="none" stroke="#35bfe0" stroke-width="4.8"/>
<path d="M630.6 1682.3L653.1 1664.8" stroke="#131313" stroke-width="4.500" stroke-linecap="round"/>
<path d="M621.1 1801.0A23.7 23.7 0 1 1 644.9 1801.0" fill="none" stroke="#131313" stroke-width="4.8"/>
<path d="M621.1 1801.0A23.7 23.7 0 1 1 644.9 1801.0" fill="none" stroke="#35bfe0" stroke-width="4.8"/>
<path d="M631.5 1777.9L645.8 1802.6" stroke="#131313" stroke-width="4.500" stroke-linecap="round"/>
<path d="M785.1 1701.0A23.7 23.7 0 1 1 808.9 1701.0" fill="none" stroke="#131313" stroke-width="4.8"/>
<path d="M785.1 1701.0A23.7 23.7 0 0 1 773.8 1685.4" fill="none" stroke="#35bfe0" stroke-width="4.8"/>
<path d="M799.9 1679.9L772.1 1685.8" stroke="#131313" stroke-width="4.500" stroke-linecap="round"/>
<path d="M785.1 1801.0A23.7 23.7 0 1 1 808.9 1801.0" fill="none" stroke="#131313" stroke-width="4.8"/>
<path d="M785.1 1801.0A23.7 23.7 0 0 1 786.2 1759.4" fill="none" stroke="#35bfe0" stroke-width="4.8"/>
<path d="M798.4 1783.2L785.4 1757.8" stroke="#131313" stroke-width="4.500" stroke-linecap="round"/>
<path d="M877.500 1658v13l8.500-6.500z" fill="#222"/>
<path d="M929.1 1572.0A23.7 23.7 0 1 1 952.9 1572.0" fill="none" stroke="#131313" stroke-width="4.8"/>
<path d="M929.1 1572.0A23.7 23.7 0 1 1 964.6 1549.4" fill="none" stroke="#35bfe0" stroke-width="4.8"/>
<path d="M938.0 1551.8L966.4 1549.3" stroke="#131313" stroke-width="4.500" stroke-linecap="round"/>
<path d="M929.1 1667.5A23.7 23.7 0 1 1 952.9 1667.5" fill="none" stroke="#131313" stroke-width="4.8"/>
<path d="M929.1 1667.5A23.7 23.7 0 0 1 922.3 1661.6" fill="none" stroke="#35bfe0" stroke-width="4.8"/>
<path d="M943.4 1645.2L920.9 1662.7" stroke="#131313" stroke-width="4.500" stroke-linecap="round"/>
<path d="M929.1 1768.5A23.7 23.7 0 1 1 952.9 1768.5" fill="none" stroke="#131313" stroke-width="4.8"/>
<path d="M929.1 1768.5A23.7 23.7 0 0 1 921.6 1734.4" fill="none" stroke="#35bfe0" stroke-width="4.8"/>
<path d="M943.5 1749.7L920.1 1733.4" stroke="#131313" stroke-width="4.500" stroke-linecap="round"/>
<path d="M1013 1815v-8M1017.500 1815v-17M1022 1815v-12" stroke="#9a9a9a" stroke-width="2"/>
<path d="M1049 1814l5-12h10" stroke="#9a9a9a" stroke-width="2" fill="none"/>
<path d="M1084 1808h17M1087 1803v10M1090 1799.500v17M1093 1801.500v13M1096 1799.500v17M1099 1803v10" stroke="#f79a1e" stroke-width="1.800" fill="none"/>
<path d="M1380 1807.500h10l-5 5.500z" fill="#35bfe0"/>
<path d="M1565.2 1799.5A23.7 23.7 0 1 1 1588.8 1799.5" fill="none" stroke="#131313" stroke-width="4.8"/>
<path d="M1565.2 1799.5A23.7 23.7 0 1 1 1588.8 1799.5" fill="none" stroke="#35bfe0" stroke-width="4.8"/>
<path d="M1575.5 1776.4L1589.8 1801.1" stroke="#131313" stroke-width="4.500" stroke-linecap="round"/>
<circle cx="1670.5" cy="1477" r="11.7" fill="#f79a1e" stroke="#101010" stroke-width="1.800"/>
<circle cx="1702.5" cy="1477" r="11.7" fill="#4a4a4a" stroke="#101010" stroke-width="1.800"/>
<path d="M1695.5 1472.500h14l-7 11z" fill="#c8c8c8"/>
<circle cx="2404.5" cy="1477" r="11.7" fill="#3a3a3a" stroke="#101010" stroke-width="1.800"/>
<path d="M2398.2 1478a6.300 6.300 0 0 1 10.500-4" fill="none" stroke="#dcdcdc" stroke-width="2.500"/><path d="M2410 1469.5l2.500 7-7.500-1.500z" fill="#dcdcdc"/>
<path d="M2410.8 1476a6.300 6.300 0 0 1-10.500 4" fill="none" stroke="#dcdcdc" stroke-width="2.500"/><path d="M2399 1484.5l-2.500-7 7.500 1.500z" fill="#dcdcdc"/>
<circle cx="2436.5" cy="1477" r="11.7" fill="#3a3a3a" stroke="#101010" stroke-width="1.800"/>
<path d="M2429.5 1470h10l4 4v10h-14z" fill="#dcdcdc"/><rect x="2432.5" y="1471" width="7" height="4.500" fill="#3a3a3a"/>
<path d="M1694.7 1598.5A23.7 23.7 0 1 1 1718.3 1598.5" fill="none" stroke="#131313" stroke-width="4.8"/>
<path d="M1706.5 1558.3L1706.5 1550.3" stroke="#3a3a3a" stroke-width="9.500"/>
<path d="M1706.5 1581.0L1706.5 1552.5" stroke="#131313" stroke-width="4.500" stroke-linecap="round"/>
<path d="M1699.5 1540.8h14l-7 7.500z" fill="#141414"/>
<path d="M1694.7 1698.5A23.7 23.7 0 1 1 1718.3 1698.5" fill="none" stroke="#131313" stroke-width="4.8"/>
<path d="M1694.7 1698.5A23.7 23.7 0 0 1 1682.8 1678.8" fill="none" stroke="#35bfe0" stroke-width="4.8"/>
<path d="M1709.5 1677.9L1681.0 1678.9" stroke="#131313" stroke-width="4.500" stroke-linecap="round"/>
<path d="M1694.7 1798.5A23.7 23.7 0 1 1 1718.3 1798.5" fill="none" stroke="#131313" stroke-width="4.8"/>
<path d="M1694.7 1798.5A23.7 23.7 0 0 1 1706.5 1754.3" fill="none" stroke="#35bfe0" stroke-width="4.8"/>
<path d="M1706.5 1781.0L1706.5 1752.5" stroke="#131313" stroke-width="4.500" stroke-linecap="round"/>
<path d="M1780.1 1504V1718M1797.3 1504V1718M1810.6 1504V1718M1821.5 1504V1718M1830.7 1504V1718M1838.7 1504V1718M1845.7 1504V1718M1893.4 1504V1718M1917.6 1504V1718M1934.8 1504V1718M1948.1 1504V1718M1959.0 1504V1718M1968.2 1504V1718M1976.2 1504V1718M1983.2 1504V1718M2030.9 1504V1718M2055.1 1504V1718M2072.3 1504V1718M2085.6 1504V1718M2096.5 1504V1718M2105.7 1504V1718M2113.7 1504V1718M2120.7 1504V1718M2168.4 1504V1718" stroke="#303030" stroke-width="1.500"/>
<path d="M1852.0 1504V1718M1989.5 1504V1718M2127.0 1504V1718" stroke="#3e3e3e" stroke-width="1.600"/>
<path d="M1772 1505.5H2172M1772 1529H2172M1772 1552.5H2172M1772 1576H2172M1772 1599.5H2172M1772 1623H2172M1772 1646.5H2172M1772 1670H2172M1772 1693.5H2172" stroke="#303030" stroke-width="1.500"/>
<path d="M1772 1611H1915C1950 1611 1968 1622 1982 1648L2008.500 1718" fill="none" stroke="#35bfe0" stroke-width="2.800"/>
<circle cx="1968.500" cy="1679" r="11.500" fill="none" stroke="#f79a1e" stroke-width="2.400"/>
<path d="M1777 1733.500h18q9 0 9 8v5" stroke="#111" stroke-width="1.900" fill="none"/>
<path d="M1822 1747v-5q0-8 9-8h18" stroke="#e0e0e0" stroke-width="1.700" fill="none"/>
<path d="M1866 1747v-5q0-8 9-8h8q9 0 9 8v5" stroke="#e0e0e0" stroke-width="1.700" fill="none"/>
<path d="M1909 1733.500h5q3 0 5 6t4 6t4-6t5-6h5" stroke="#e0e0e0" stroke-width="1.700" fill="none"/>
<path d="M1953 1734h6M1960 1747v-5q0-8 8-8h12" stroke="#e0e0e0" stroke-width="1.700" fill="none"/><path d="M1972 1739v2M1972 1743v2" stroke="#e0e0e0" stroke-width="1.700"/>
<path d="M2062 1735h12l-6 9z" fill="#e2e2e2"/>
<path d="M2218.7 1597.5A23.7 23.7 0 1 1 2242.3 1597.5" fill="none" stroke="#131313" stroke-width="4.8"/>
<path d="M2218.7 1597.5A23.7 23.7 0 0 1 2231.7 1553.3" fill="none" stroke="#35bfe0" stroke-width="4.8"/>
<path d="M2230.3 1580.0L2231.8 1551.5" stroke="#131313" stroke-width="4.500" stroke-linecap="round"/>
<circle cx="2209.5" cy="1555" r="4.500" fill="#ea4f4f" stroke="#222" stroke-width="1.200"/>
<path d="M2218.7 1697.5A23.7 23.7 0 1 1 2242.3 1697.5" fill="none" stroke="#131313" stroke-width="4.8"/>
<path d="M2218.7 1697.5A23.7 23.7 0 0 1 2208.0 1684.3" fill="none" stroke="#35bfe0" stroke-width="4.8"/>
<path d="M2233.4 1676.1L2206.2 1684.9" stroke="#131313" stroke-width="4.500" stroke-linecap="round"/>
<path d="M2326.2 1598.5A23.7 23.7 0 1 1 2349.8 1598.5" fill="none" stroke="#131313" stroke-width="4.8"/>
<path d="M2339.5 1575.4L2325.2 1600.1" stroke="#131313" stroke-width="4.500" stroke-linecap="round"/>
<path d="M2326.2 1698.5A23.7 23.7 0 1 1 2349.8 1698.5" fill="none" stroke="#131313" stroke-width="4.8"/>
<path d="M2326.2 1698.5A23.7 23.7 0 0 1 2320.4 1662.1" fill="none" stroke="#35bfe0" stroke-width="4.8"/>
<path d="M2340.2 1680.0L2319.0 1660.9" stroke="#131313" stroke-width="4.500" stroke-linecap="round"/>
<path d="M2326.2 1798.5A23.7 23.7 0 1 1 2349.8 1798.5" fill="none" stroke="#131313" stroke-width="4.8"/>
<path d="M2339.5 1775.4L2325.2 1800.1" stroke="#131313" stroke-width="4.500" stroke-linecap="round"/>
<path d="M2430 1566.5h12l-6 9z" fill="#e2e2e2"/>
<path d="M2396 1571q5-15 10 0t10 0" fill="none" stroke="#e0e0e0" stroke-width="1.900"/>
<path d="M2430.500 1703v-12l5 4" fill="none" stroke="#cfcfcf" stroke-width="1.600"/><circle cx="2428" cy="1703" r="2.800" fill="#cfcfcf"/>
<ellipse cx="2429" cy="1765" rx="6" ry="5" fill="none" stroke="#111" stroke-width="2"/><path d="M2431.500 1757l-5 16" stroke="#111" stroke-width="2"/>
<circle cx="2429" cy="1797" r="7" fill="none" stroke="#cfcfcf" stroke-width="1.700"/><circle cx="2426.500" cy="1797" r="3.300" fill="none" stroke="#cfcfcf" stroke-width="1.500"/>
<circle cx="2496.5" cy="1477" r="11.7" fill="#f79a1e" stroke="#101010" stroke-width="1.800"/>
<circle cx="2528.5" cy="1477" r="11.7" fill="#4a4a4a" stroke="#101010" stroke-width="1.800"/>
<path d="M2524.5 1470v14l11-7z" fill="#c8c8c8"/>
<circle cx="3390.5" cy="1477" r="11.7" fill="#3a3a3a" stroke="#101010" stroke-width="1.800"/>
<path d="M3384.2 1478a6.300 6.300 0 0 1 10.500-4" fill="none" stroke="#dcdcdc" stroke-width="2.500"/><path d="M3396 1469.5l2.500 7-7.500-1.500z" fill="#dcdcdc"/>
<path d="M3396.8 1476a6.300 6.300 0 0 1-10.500 4" fill="none" stroke="#dcdcdc" stroke-width="2.500"/><path d="M3385 1484.5l-2.500-7 7.500 1.500z" fill="#dcdcdc"/>
<circle cx="3422.5" cy="1477" r="11.7" fill="#3a3a3a" stroke="#101010" stroke-width="1.800"/>
<path d="M3415.5 1470h10l4 4v10h-14z" fill="#dcdcdc"/><rect x="3418.5" y="1471" width="7" height="4.500" fill="#3a3a3a"/>
<path d="M2517.7 1568.5A23.7 23.7 0 1 1 2541.3 1568.5" fill="none" stroke="#131313" stroke-width="4.8"/>
<path d="M2517.7 1568.5A23.7 23.7 0 0 1 2505.9 1545.9" fill="none" stroke="#35bfe0" stroke-width="4.8"/>
<path d="M2532.5 1548.3L2504.1 1545.8" stroke="#131313" stroke-width="4.500" stroke-linecap="round"/>
<circle cx="2508.5" cy="1526" r="4.500" fill="#ea4f4f" stroke="#222" stroke-width="1.200"/>
<path d="M2517.7 1686.5A23.7 23.7 0 1 1 2541.3 1686.5" fill="none" stroke="#2d2d2d" stroke-width="4.8"/>
<path d="M2529.5 1669.0L2529.5 1640.5" stroke="#2d2d2d" stroke-width="4.500" stroke-linecap="round"/>
<path d="M2522.500 1632h14l-7 6z" fill="#2d2d2d"/>
<path d="M2517.7 1799.5A23.7 23.7 0 1 1 2541.3 1799.5" fill="none" stroke="#131313" stroke-width="4.8"/>
<path d="M2517.7 1799.5A23.7 23.7 0 0 1 2514.9 1760.3" fill="none" stroke="#35bfe0" stroke-width="4.8"/>
<path d="M2531.3 1781.4L2513.8 1758.9" stroke="#131313" stroke-width="4.500" stroke-linecap="round"/>
<path d="M2650.4 1496V1760M2689.7 1496V1760M2717.6 1496V1760M2739.2 1496V1760M2756.8 1496V1760M2771.8 1496V1760M2784.7 1496V1760M2796.1 1496V1760M2873.4 1496V1760M2912.7 1496V1760M2940.6 1496V1760M2962.2 1496V1760M2979.8 1496V1760M2994.8 1496V1760M3007.7 1496V1760M3019.1 1496V1760M3096.4 1496V1760M3135.7 1496V1760M3163.6 1496V1760M3185.2 1496V1760M3202.8 1496V1760M3217.8 1496V1760M3230.7 1496V1760M3242.1 1496V1760M3319.4 1496V1760" stroke="#2f2f2f" stroke-width="1.300"/>
<path d="M2806.3 1496V1760M3029.3 1496V1760M3252.3 1496V1760" stroke="#3a3a3a" stroke-width="1.500"/>
<path d="M2626 1521H3328M2626 1574.5H3328M2626 1681H3328M2626 1735H3328" stroke="#2f2f2f" stroke-width="1.300"/>
<path d="M2626 1628.500H3328" stroke="#444" stroke-width="1.500"/>
<path d="M2724 1762L2740 1690C2748 1650 2752 1628 2775 1628H3330" fill="none" stroke="#35bfe0" stroke-width="2.800"/>
<circle cx="2750.500" cy="1657" r="12.500" fill="#f79a1e"/>
<text x="2750.500" y="1663" font-size="16" text-anchor="middle" fill="#111" font-family="Liberation Sans,sans-serif">1</text>
<circle cx="2876.5" cy="1627" r="11.500" fill="none" stroke="#f79a1e" stroke-width="2.400"/>
<text x="2876.5" y="1632.500" font-size="15" text-anchor="middle" fill="#f79a1e" font-family="Liberation Sans,sans-serif">2</text>
<circle cx="3026.5" cy="1627" r="11.500" fill="none" stroke="#f79a1e" stroke-width="2.400"/>
<text x="3026.5" y="1632.500" font-size="15" text-anchor="middle" fill="#f79a1e" font-family="Liberation Sans,sans-serif">3</text>
<circle cx="3178.5" cy="1627" r="11.500" fill="none" stroke="#f79a1e" stroke-width="2.400"/>
<text x="3178.5" y="1632.500" font-size="15" text-anchor="middle" fill="#f79a1e" font-family="Liberation Sans,sans-serif">4</text>
<path d="M2646 1780.5h12l-6 9z" fill="#e2e2e2"/>
<path d="M2596 1792v-5q0-8 8-8h8" stroke="#e0e0e0" stroke-width="1.700" fill="none"/><text x="2608" y="1793" font-size="11" fill="#e0e0e0" font-family="Liberation Sans,sans-serif">×4</text>
<path d="M2740 1780.5h12l-6 9z" fill="#e2e2e2"/>
<path d="M2688 1785h5l5-6.500h10l5 6.500h5M2693 1785l5 6.500h10l5-6.500" stroke="#e0e0e0" stroke-width="1.700" fill="none"/>
<path d="M2834 1780.5h12l-6 9z" fill="#e2e2e2"/>
<path d="M2782 1785h5l5-6.500h10l5 6.500h5M2787 1785l5 6.500h10l5-6.500" stroke="#e0e0e0" stroke-width="1.700" fill="none"/>
<path d="M2928 1780.5h12l-6 9z" fill="#e2e2e2"/>
<path d="M2878 1785h12l3-3.500q3-4 6-4h7M2890 1785l3 3.500q3 4 6 4h7" stroke="#e0e0e0" stroke-width="1.700" fill="none"/>
<path d="M3022 1780.5h12l-6 9z" fill="#e2e2e2"/>
<path d="M2970 1785h5l5-6.500h10l5 6.500h5M2975 1785l5 6.500h10l5-6.500" stroke="#e0e0e0" stroke-width="1.700" fill="none"/>
<path d="M3116 1780.5h12l-6 9z" fill="#e2e2e2"/>
<path d="M3064 1785h5l5-6.500h10l5 6.500h5M3069 1785l5 6.500h10l5-6.500" stroke="#e0e0e0" stroke-width="1.700" fill="none"/>
<path d="M3210 1780.5h12l-6 9z" fill="#e2e2e2"/>
<path d="M3158 1785h5l5-6.500h10l5 6.500h5M3163 1785l5 6.500h10l5-6.500" stroke="#e0e0e0" stroke-width="1.700" fill="none"/>
<path d="M3304 1780.5h12l-6 9z" fill="#e2e2e2"/>
<path d="M3254 1778h16q8 0 8 8v5" stroke="#e0e0e0" stroke-width="1.700" fill="none"/>
<path d="M3354.500 1522.500v-4a6.500 6.500 0 0 1 13 0v4" fill="none" stroke="#cfcfcf" stroke-width="2"/><rect x="3353.500" y="1519.500" width="4" height="6.500" rx="1" fill="#cfcfcf"/><rect x="3364.500" y="1519.500" width="4" height="6.500" rx="1" fill="#cfcfcf"/>
<path d="M3398 1526v-6M3402.500 1526v-11M3407 1526v-15M3411.500 1526v-9M3416 1526v-13M3420.500 1526v-7M3425 1526v-4" stroke="#111" stroke-width="2"/>
<path d="M3414 1570.5h12l-6 9z" fill="#e2e2e2"/>
<path d="M3012 1844h8v8a8 8 0 0 0-8-8zM3394 1844h-8v8a8 8 0 0 1 8-8z" fill="#1c1c1c"/>
<circle cx="35" cy="1881" r="19" fill="#1a1a1a"/><path d="M27.500 1872v18l16-9z" fill="#3a3a3a" stroke="#3a3a3a" stroke-width="3" stroke-linejoin="round"/>
<circle cx="3133.7" cy="1884.4" r="1.900" fill="none" stroke="#1a1a1a" stroke-width="0.800"/>
<circle cx="3133.7" cy="1892.7" r="1.900" fill="none" stroke="#1a1a1a" stroke-width="0.800"/>
<circle cx="3148.0" cy="1884.4" r="1.900" fill="none" stroke="#1a1a1a" stroke-width="0.800"/>
<circle cx="3148.0" cy="1892.7" r="1.900" fill="none" stroke="#1a1a1a" stroke-width="0.800"/>
<circle cx="3160.6" cy="1873.6" r="1.900" fill="none" stroke="#1a1a1a" stroke-width="0.800"/>
<circle cx="3160.6" cy="1881.6" r="1.900" fill="none" stroke="#1a1a1a" stroke-width="0.800"/>
<circle cx="3160.6" cy="1890.0" r="1.900" fill="none" stroke="#1a1a1a" stroke-width="0.800"/>
<circle cx="3216.0" cy="1892.6" r="1.900" fill="none" stroke="#1a1a1a" stroke-width="0.800"/>
<circle cx="3227.2" cy="1875.9" r="1.900" fill="none" stroke="#1a1a1a" stroke-width="0.800"/>
<circle cx="3227.2" cy="1884.2" r="1.900" fill="none" stroke="#1a1a1a" stroke-width="0.800"/>
<circle cx="3227.2" cy="1892.6" r="1.900" fill="none" stroke="#1a1a1a" stroke-width="0.800"/>
<circle cx="3272.8" cy="1875.8" r="1.900" fill="none" stroke="#1a1a1a" stroke-width="0.800"/>
<circle cx="3272.8" cy="1884.1" r="1.900" fill="none" stroke="#1a1a1a" stroke-width="0.800"/>
<circle cx="3282.2" cy="1875.9" r="1.900" fill="none" stroke="#1a1a1a" stroke-width="0.800"/>
<circle cx="3282.2" cy="1884.2" r="1.900" fill="none" stroke="#1a1a1a" stroke-width="0.800"/>
<circle cx="3282.2" cy="1892.6" r="1.900" fill="none" stroke="#1a1a1a" stroke-width="0.800"/>
<circle cx="3298.9" cy="1873.3" r="1.900" fill="none" stroke="#1a1a1a" stroke-width="0.800"/>
<circle cx="3298.9" cy="1883.2" r="1.900" fill="none" stroke="#1a1a1a" stroke-width="0.800"/>
<circle cx="3298.9" cy="1892.6" r="1.900" fill="none" stroke="#1a1a1a" stroke-width="0.800"/>
<circle cx="3421" cy="1881" r="19" fill="#1a1a1a"/><path d="M3412 1889h18l-9-16.500z" fill="#3a3a3a" stroke="#3a3a3a" stroke-width="3" stroke-linejoin="round"/></svg></div><script>(function(){var w=window.innerWidth;if(w&&Math.abs(w-3456)>2){var e=document.getElementById("w");e.style.zoom=w/3456;document.body.style.width=w+"px";document.body.style.height=Math.ceil(1918*w/3456)+"px";}})();</script></body></html>
